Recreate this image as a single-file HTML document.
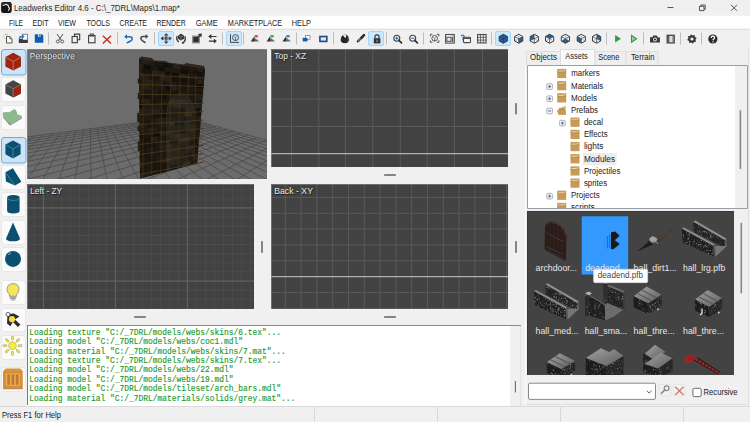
<!DOCTYPE html>
<html><head><meta charset="utf-8"><style>
html,body{margin:0;padding:0;width:750px;height:422px;overflow:hidden;background:#f0f0f0;font-family:"Liberation Sans",sans-serif}
text{white-space:pre}
</style></head><body>
<svg width="750" height="422" viewBox="0 0 750 422" style="display:block"><rect x="0" y="0" width="750" height="422" fill="#f0f0f0" />
<rect x="0" y="0" width="750" height="15" fill="#f0f0f0" />
<rect x="1.1" y="2.1" width="10.6" height="10.8" rx="2.2" fill="#161616"/><rect x="1.6" y="2.5" width="9.6" height="3" rx="1.5" fill="#2a2a2a"/><path d="M3 5.3L4.6 5L6 4.3L7.5 5L8.5 6L8.7 7.5L9.5 8L9.1 9.3L8.5 10.3" fill="none" stroke="#e6e6e6" stroke-width="1.1" stroke-linejoin="round" stroke-linecap="round"/>
<text x="13.90" y="11.30" font-family="Liberation Sans" font-size="9.2" fill="#2a2a2a" textLength="166.00" lengthAdjust="spacingAndGlyphs" >Leadwerks Editor 4.6 - C:\_7DRL\Maps\1.map*</text>
<path d="M667.5 7.5H673.5" stroke="#444" stroke-width="0.9"/>
<path d="M699.5 6.3h4.5v4.3h-4.5z M700.8 6.3v-1.3h4.4v4.3h-1.2" fill="none" stroke="#444" stroke-width="0.9"/>
<path d="M731 4.8L737 10.8M737 4.8L731 10.8" stroke="#444" stroke-width="0.9"/>
<rect x="0" y="15.7" width="750" height="13.1" fill="#ffffff" />
<text x="9.00" y="25.60" font-family="Liberation Sans" font-size="9.5" fill="#1a1a1a" textLength="14.00" lengthAdjust="spacingAndGlyphs" >FILE</text>
<text x="32.60" y="25.60" font-family="Liberation Sans" font-size="9.5" fill="#1a1a1a" textLength="16.00" lengthAdjust="spacingAndGlyphs" >EDIT</text>
<text x="58.00" y="25.60" font-family="Liberation Sans" font-size="9.5" fill="#1a1a1a" textLength="18.00" lengthAdjust="spacingAndGlyphs" >VIEW</text>
<text x="86.40" y="25.60" font-family="Liberation Sans" font-size="9.5" fill="#1a1a1a" textLength="23.40" lengthAdjust="spacingAndGlyphs" >TOOLS</text>
<text x="119.40" y="25.60" font-family="Liberation Sans" font-size="9.5" fill="#1a1a1a" textLength="27.60" lengthAdjust="spacingAndGlyphs" >CREATE</text>
<text x="156.40" y="25.60" font-family="Liberation Sans" font-size="9.5" fill="#1a1a1a" textLength="29.40" lengthAdjust="spacingAndGlyphs" >RENDER</text>
<text x="195.80" y="25.60" font-family="Liberation Sans" font-size="9.5" fill="#1a1a1a" textLength="22.00" lengthAdjust="spacingAndGlyphs" >GAME</text>
<text x="227.80" y="25.60" font-family="Liberation Sans" font-size="9.5" fill="#1a1a1a" textLength="54.40" lengthAdjust="spacingAndGlyphs" >MARKETPLACE</text>
<text x="291.80" y="25.60" font-family="Liberation Sans" font-size="9.5" fill="#1a1a1a" textLength="19.20" lengthAdjust="spacingAndGlyphs" >HELP</text>
<rect x="0" y="29" width="750" height="20" fill="#f0f0f0" />
<rect x="0" y="28.8" width="750" height="1" fill="#dcdcdc" />
<path d="M48.5 32.5V44.5" stroke="#bdbdbd" stroke-width="1"/>
<path d="M117.5 32.5V44.5" stroke="#bdbdbd" stroke-width="1"/>
<path d="M154.5 32.5V44.5" stroke="#bdbdbd" stroke-width="1"/>
<path d="M222.5 32.5V44.5" stroke="#bdbdbd" stroke-width="1"/>
<path d="M243.5 32.5V44.5" stroke="#bdbdbd" stroke-width="1"/>
<path d="M296.5 32.5V44.5" stroke="#bdbdbd" stroke-width="1"/>
<path d="M333.5 32.5V44.5" stroke="#bdbdbd" stroke-width="1"/>
<path d="M386.5 32.5V44.5" stroke="#bdbdbd" stroke-width="1"/>
<path d="M423.5 32.5V44.5" stroke="#bdbdbd" stroke-width="1"/>
<path d="M491.5 32.5V44.5" stroke="#bdbdbd" stroke-width="1"/>
<path d="M606.5 32.5V44.5" stroke="#bdbdbd" stroke-width="1"/>
<path d="M643.5 32.5V44.5" stroke="#bdbdbd" stroke-width="1"/>
<path d="M680.5 32.5V44.5" stroke="#bdbdbd" stroke-width="1"/>
<path d="M701.5 32.5V44.5" stroke="#bdbdbd" stroke-width="1"/>
<rect x="158.5" y="31.5" width="15" height="14" fill="#cce8ff" stroke="#a6d5fb" stroke-width="1" rx="1.5" />
<rect x="226.5" y="31.5" width="15" height="14" fill="#cce8ff" stroke="#a6d5fb" stroke-width="1" rx="1.5" />
<rect x="368.5" y="31.5" width="15" height="14" fill="#cce8ff" stroke="#a6d5fb" stroke-width="1" rx="1.5" />
<rect x="495.5" y="31.5" width="15" height="14" fill="#cce8ff" stroke="#a6d5fb" stroke-width="1" rx="1.5" />
<g transform="translate(3,33) scale(1.0)"><path d="M3.5 3.5h3.2l2.3 2.3v4.2h-5.5z" fill="#fff" stroke="#555" stroke-width="1"/><path d="M6.7 3.5v2.3h2.3" fill="none" stroke="#555" stroke-width="0.8"/><circle cx="2.6" cy="1.4" r="0.7" fill="#e8a33a"/><circle cx="0.8" cy="3" r="0.6" fill="#e8a33a"/><circle cx="4.4" cy="1" r="0.6" fill="#e8a33a"/><circle cx="1.4" cy="5" r="0.6" fill="#e8a33a"/><circle cx="3.8" cy="2.6" r="0.5" fill="#f0c060"/></g>
<g transform="translate(18,33.5) scale(1.0)"><rect x="4.5" y="0.7" width="5" height="8" fill="#fff" stroke="#666" stroke-width="0.8"/><path d="M0.8 5.2h3l1 1h4.9v3.3H0.8z" fill="#3a3a3a"/><path d="M0.8 5.5v-1.5l1.2-1.5 2-0.3v-1.6l2.6 2.4-2.6 2.4v-1.5l-1.6 0.3z" fill="#2878c8"/></g>
<g transform="translate(34.5,34) scale(1.0)"><path d="M0.3 0.3h7.2l1.3 1.3v7.2H0.3z" fill="#0f5cad"/><rect x="3.4" y="0.3" width="2.6" height="2.4" fill="#f0f0f0"/><rect x="4.4" y="0.7" width="1" height="1.5" fill="#0f5cad"/></g>
<g transform="translate(55.5,33.5) scale(1.0)"><path d="M1.5 0.5L6 7M7.5 0.5L3 7" stroke="#555" stroke-width="1"/><circle cx="2.3" cy="8" r="1.5" fill="none" stroke="#555" stroke-width="0.9"/><circle cx="6.7" cy="8" r="1.5" fill="none" stroke="#555" stroke-width="0.9"/></g>
<g transform="translate(71.5,33.5) scale(1.0)"><path d="M3 2.8V0.6h5.2v5.6H6" fill="none" stroke="#3c3c3c" stroke-width="1.1"/><rect x="0.6" y="3" width="5.2" height="6.2" fill="none" stroke="#3c3c3c" stroke-width="1.1"/></g>
<g transform="translate(88,33.5) scale(1.0)"><rect x="0.6" y="2" width="6.4" height="7.3" fill="none" stroke="#3c3c3c" stroke-width="1.1"/><rect x="2.3" y="0.5" width="3" height="2" fill="none" stroke="#3c3c3c" stroke-width="1"/></g>
<g transform="translate(102,35) scale(1.0)"><path d="M0.8 0.8L9 8.4M9 0.8L0.8 8.4" stroke="#c42b1c" stroke-width="1.35"/></g>
<g transform="translate(124,33.5) scale(1.0)"><path d="M1.5 3.2H5.5Q8.2 3.2 8.2 5.6Q8.2 7.3 3.2 9.2" fill="none" stroke="#1a6bc0" stroke-width="1.5" stroke-linecap="round"/><path d="M0.2 3.2L3 0.8V5.6z" fill="#1a6bc0"/></g>
<g transform="translate(140,33.5) scale(1.0)"><path d="M6.8 3.0H3.2Q0.6 3.2 0.8 5.2Q1.4 7 5 9" fill="none" stroke="#4a4a4a" stroke-width="1.5" stroke-linecap="round"/><path d="M8.4 3L5.6 0.6V5.4z" fill="#4a4a4a"/></g>
<g transform="translate(160.5,33) scale(1.0)"><path d="M5.1 2.5V8.3M6.3 2.5V8.3M2.5 4.8H8.9M2.5 6H8.9" stroke="#3a3a3a" stroke-width="0.7"/><path d="M5.7 0.2L8 2.6H3.4z M5.7 10.8L8 8.4H3.4z M0.2 5.4L2.6 3.2V7.6z M11.2 5.4L8.8 3.2V7.6z" fill="#333"/></g>
<g transform="translate(176,33) scale(1.0)"><path d="M5 0.8L8 2.4V5.8L5 7.4L2 5.8V2.4z" fill="#333"/><path d="M5 4.1L8 2.4M5 4.1L2 2.4M5 4.1V7.4" stroke="#bbb" stroke-width="0.5"/><path d="M1.2 3Q-0.2 6.5 2.8 9" fill="none" stroke="#3a3a3a" stroke-width="1.4"/><path d="M8.8 3.2Q10.4 7 7.2 9.6" fill="none" stroke="#3a3a3a" stroke-width="1.4"/><path d="M6.2 8.4L8.4 10.6L5.8 10.8z" fill="#333"/></g>
<g transform="translate(191.7,33.5) scale(1.0)"><rect x="1" y="2.7" width="6.6" height="6.6" fill="#2e2e2e" stroke="#8c8c8c" stroke-width="1.3"/><path d="M4.6 5.2L8.6 1.4" stroke="#333" stroke-width="1.3"/><path d="M10.2 0.1L6.2 0.6L9.7 4.1z" fill="#333"/></g>
<g transform="translate(208.3,34.3) scale(1.0)"><path d="M2 2.2H8.2M6.6 6.8H0.6" stroke="#333" stroke-width="1.2"/><path d="M0 2.2L3 -0.2V4.6z M8.6 6.8L5.6 4.4V9.2z" fill="#333"/></g>
<g transform="translate(229.5,33.8) scale(1.0)"><path d="M1 0.5V8.6H9.5" fill="none" stroke="#444" stroke-width="1"/><circle cx="6" cy="3.8" r="3" fill="none" stroke="#444" stroke-width="0.9"/><path d="M6 4V7M4.8 2.8Q6 4.5 7.2 2.8" fill="none" stroke="#444" stroke-width="0.7"/></g>
<g transform="translate(250.2,35) scale(1.0)"><path d="M0.5 6.5L4 1.5L5 6.5z" fill="#333"/><path d="M4 2.5L9 6.5H5z" fill="#666"/><path d="M5 3.6L8.5 5.5" stroke="#999" stroke-width="0.5"/><path d="M4.4 0.3h3.6l-0.6 1 0.8 1h-3.8z" fill="#d8372a"/></g>
<g transform="translate(266,35) scale(1.0)"><path d="M0.5 6.5L4 1.5L5 6.5z" fill="#333"/><path d="M4 2.5L9 6.5H5z" fill="#666"/><path d="M5 3.6L8.5 5.5" stroke="#999" stroke-width="0.5"/><path d="M4.4 0.3h3.6l-0.6 1 0.8 1h-3.8z" fill="#2f9a3a"/></g>
<g transform="translate(281.9,35) scale(1.0)"><path d="M0.5 6.5L4 1.5L5 6.5z" fill="#333"/><path d="M4 2.5L9 6.5H5z" fill="#666"/><path d="M5 3.6L8.5 5.5" stroke="#999" stroke-width="0.5"/><path d="M4.4 0.3h3.6l-0.6 1 0.8 1h-3.8z" fill="#2a6fc0"/></g>
<g transform="translate(302.5,35) scale(1.0)"><rect x="3" y="0.5" width="4.5" height="3.8" fill="#fff" stroke="#888" stroke-width="0.8"/><rect x="0.2" y="2.8" width="4.8" height="3.6" fill="#1a5aa0"/></g>
<g transform="translate(319,35.6) scale(1.0)"><rect x="0.9" y="0.9" width="6.9" height="4.9" fill="#dfe8f0" stroke="#1d4c7e" stroke-width="1.6"/></g>
<g transform="translate(340,33.7) scale(1.0)"><path d="M2.8 1.2Q5.5 0 7.2 1.6Q9.4 3.5 9 6.2Q8.4 9.4 4.8 9.5Q1.2 9.4 0.6 6.2Q0.4 3.2 2.8 1.2z" fill="#262626"/><path d="M2.6 1.6Q4.6 2.6 5 4.6L6.4 2.6L5.6 0.8Q4 0.4 2.6 1.6z" fill="#f4f4f4"/><path d="M7.6 4Q8.6 6 7.8 8.2" stroke="#666" stroke-width="0.6" fill="none"/></g>
<g transform="translate(356.8,34.4) scale(1.0)"><path d="M1 7L5.2 2.8" stroke="#3a3a3a" stroke-width="2.2" stroke-linecap="round"/><path d="M1.6 6.4L4.8 3.2" stroke="#c8c8c8" stroke-width="0.7"/><path d="M4.6 3.4L7.2 0.8" stroke="#2a2a2a" stroke-width="2.6" stroke-linecap="round"/></g>
<g transform="translate(373.5,34.2) scale(1.0)"><path d="M1.5 4.2V2.6Q1.5 0.6 3.5 0.6Q5.5 0.6 5.5 2.6V4.2" fill="none" stroke="#333" stroke-width="1.2"/><rect x="0.3" y="4" width="6.6" height="5.2" fill="#333"/><rect x="2.9" y="5.6" width="1.4" height="2.4" fill="#8a8a8a"/></g>
<g transform="translate(393.2,34.6) scale(1.0)"><circle cx="3.6" cy="3.6" r="3" fill="#f4f4f4" stroke="#444" stroke-width="1.1"/><path d="M5.7 5.7L8.3 8.3" stroke="#333" stroke-width="1.8" stroke-linecap="round"/><path d="M2 3.6H5.2M3.6 2V5.2" stroke="#1a6bc0" stroke-width="1.1"/></g>
<g transform="translate(409.1,34.6) scale(1.0)"><circle cx="3.6" cy="3.6" r="3" fill="#f4f4f4" stroke="#444" stroke-width="1.1"/><path d="M5.7 5.7L8.3 8.3" stroke="#333" stroke-width="1.8" stroke-linecap="round"/><path d="M2 3.6H5.2" stroke="#1a6bc0" stroke-width="1.1"/></g>
<g transform="translate(429.9,33.8) scale(1.0)"><path d="M0.5 2.5V0.5H2.5M7 0.5H9V2.5M9 6.5V8.5H7M2.5 8.5H0.5V6.5" fill="none" stroke="#444" stroke-width="0.9"/><circle cx="4.75" cy="4.5" r="2.8" fill="none" stroke="#444" stroke-width="0.9"/><path d="M4.75 4.8V7.3M3.6 3.6Q4.75 5.4 5.9 3.6" fill="none" stroke="#444" stroke-width="0.7"/></g>
<g transform="translate(445,33.9) scale(1.0)"><rect x="0.6" y="0.6" width="8.7" height="8.6" fill="#efefef" stroke="#505050" stroke-width="1.1"/><rect x="1.8" y="3.4" width="4.2" height="4" fill="none" stroke="#555" stroke-width="1"/><rect x="6.8" y="1.6" width="1.5" height="6.6" fill="#606060"/><rect x="7" y="1.8" width="1" height="1" fill="#fff"/></g>
<g transform="translate(460.5,34.6) scale(1.0)"><rect x="3" y="2.6" width="7" height="5.4" rx="0.8" fill="#f4f4f4" stroke="#4a4a4a" stroke-width="1.1"/><path d="M3 3.8H10" stroke="#4a4a4a" stroke-width="1.2"/><path d="M0.5 1.6Q1 0.3 2.4 0.4Q3.9 0.6 3.5 2Q3 2.8 2.2 3.4V4" fill="none" stroke="#1a6bc0" stroke-width="1.1"/><circle cx="2.2" cy="5.2" r="0.6" fill="#1a6bc0"/></g>
<g transform="translate(477,33.9) scale(1.0)"><rect x="0.6" y="0.6" width="8.5" height="8.4" fill="#f4f4f4" stroke="#474747" stroke-width="1.1"/><path d="M3.45 0.6V9M6.3 0.6V9M0.6 3.4H9.1M0.6 6.2H9.1" stroke="#474747" stroke-width="0.8"/></g>
<g transform="translate(498.8,34) scale(1.0)"><polygon points="4.50,0.30 8.60,2.50 8.60,7.00 4.50,9.20 0.40,7.00 0.40,2.50" fill="#fafafa"/><polygon points="4.50,0.30 8.60,2.50 4.50,4.75 0.40,2.50" fill="#1565b5"/><polygon points="8.60,2.50 8.60,7.00 4.50,9.20 4.50,4.75" fill="#1565b5"/><polygon points="0.40,2.50 4.50,4.75 4.50,9.20 0.40,7.00" fill="#1565b5"/><polygon points="4.50,0.30 8.60,2.50 8.60,7.00 4.50,9.20 0.40,7.00 0.40,2.50" fill="none" stroke="#3a3a3a" stroke-width="1"/><path d="M4.5 4.75L8.6 2.5M4.5 4.75L0.4 2.5M4.5 4.75V9.2" stroke="#333" stroke-width="0.9"/><path d="M4.5 4.75L8.6 7.0M4.5 4.75L0.4 7.0M4.5 4.75V0.3" stroke="#333" stroke-width="0.7" stroke-dasharray="1 0.8"/></g>
<g transform="translate(514.2,34) scale(1.0)"><polygon points="4.50,0.30 8.60,2.50 8.60,7.00 4.50,9.20 0.40,7.00 0.40,2.50" fill="#fafafa"/><polygon points="8.60,2.50 8.60,7.00 4.50,9.20 4.50,4.75" fill="#1565b5"/><polygon points="4.50,0.30 8.60,2.50 8.60,7.00 4.50,9.20 0.40,7.00 0.40,2.50" fill="none" stroke="#3a3a3a" stroke-width="1"/><path d="M4.5 4.75L8.6 2.5M4.5 4.75L0.4 2.5M4.5 4.75V9.2" stroke="#555" stroke-width="0.9"/><path d="M4.5 4.75L8.6 7.0M4.5 4.75L0.4 7.0M4.5 4.75V0.3" stroke="#555" stroke-width="0.7" stroke-dasharray="1 0.8"/></g>
<g transform="translate(529.8,34) scale(1.0)"><polygon points="4.50,0.30 8.60,2.50 8.60,7.00 4.50,9.20 0.40,7.00 0.40,2.50" fill="#fafafa"/><polygon points="4.50,0.30 0.40,2.50 0.40,7.00 4.50,4.75" fill="#1565b5"/><polygon points="4.50,0.30 8.60,2.50 8.60,7.00 4.50,9.20 0.40,7.00 0.40,2.50" fill="none" stroke="#3a3a3a" stroke-width="1"/><path d="M4.5 4.75L8.6 2.5M4.5 4.75L0.4 2.5M4.5 4.75V9.2" stroke="#555" stroke-width="0.9"/><path d="M4.5 4.75L8.6 7.0M4.5 4.75L0.4 7.0M4.5 4.75V0.3" stroke="#555" stroke-width="0.7" stroke-dasharray="1 0.8"/></g>
<g transform="translate(545.1,34) scale(1.0)"><polygon points="4.50,0.30 8.60,2.50 8.60,7.00 4.50,9.20 0.40,7.00 0.40,2.50" fill="#fafafa"/><polygon points="4.50,0.30 8.60,2.50 4.50,4.75 0.40,2.50" fill="#1565b5"/><polygon points="4.50,0.30 8.60,2.50 8.60,7.00 4.50,9.20 0.40,7.00 0.40,2.50" fill="none" stroke="#3a3a3a" stroke-width="1"/><path d="M4.5 4.75L8.6 2.5M4.5 4.75L0.4 2.5M4.5 4.75V9.2" stroke="#555" stroke-width="0.9"/><path d="M4.5 4.75L8.6 7.0M4.5 4.75L0.4 7.0M4.5 4.75V0.3" stroke="#555" stroke-width="0.7" stroke-dasharray="1 0.8"/></g>
<g transform="translate(560.9,34) scale(1.0)"><polygon points="4.50,0.30 8.60,2.50 8.60,7.00 4.50,9.20 0.40,7.00 0.40,2.50" fill="#fafafa"/><polygon points="0.40,7.00 4.50,4.75 8.60,7.00 4.50,9.20" fill="#1565b5"/><polygon points="4.50,0.30 8.60,2.50 8.60,7.00 4.50,9.20 0.40,7.00 0.40,2.50" fill="none" stroke="#3a3a3a" stroke-width="1"/><path d="M4.5 4.75L8.6 2.5M4.5 4.75L0.4 2.5M4.5 4.75V9.2" stroke="#555" stroke-width="0.9"/><path d="M4.5 4.75L8.6 7.0M4.5 4.75L0.4 7.0M4.5 4.75V0.3" stroke="#555" stroke-width="0.7" stroke-dasharray="1 0.8"/></g>
<g transform="translate(576.8,34) scale(1.0)"><polygon points="4.50,0.30 8.60,2.50 8.60,7.00 4.50,9.20 0.40,7.00 0.40,2.50" fill="#fafafa"/><polygon points="0.40,2.50 4.50,4.75 4.50,9.20 0.40,7.00" fill="#1565b5"/><polygon points="4.50,0.30 8.60,2.50 8.60,7.00 4.50,9.20 0.40,7.00 0.40,2.50" fill="none" stroke="#3a3a3a" stroke-width="1"/><path d="M4.5 4.75L8.6 2.5M4.5 4.75L0.4 2.5M4.5 4.75V9.2" stroke="#555" stroke-width="0.9"/><path d="M4.5 4.75L8.6 7.0M4.5 4.75L0.4 7.0M4.5 4.75V0.3" stroke="#555" stroke-width="0.7" stroke-dasharray="1 0.8"/></g>
<g transform="translate(592.1,34) scale(1.0)"><polygon points="4.50,0.30 8.60,2.50 8.60,7.00 4.50,9.20 0.40,7.00 0.40,2.50" fill="#fafafa"/><polygon points="4.50,0.30 8.60,2.50 8.60,7.00 4.50,4.75" fill="#1565b5"/><polygon points="4.50,0.30 8.60,2.50 8.60,7.00 4.50,9.20 0.40,7.00 0.40,2.50" fill="none" stroke="#3a3a3a" stroke-width="1"/><path d="M4.5 4.75L8.6 2.5M4.5 4.75L0.4 2.5M4.5 4.75V9.2" stroke="#555" stroke-width="0.9"/><path d="M4.5 4.75L8.6 7.0M4.5 4.75L0.4 7.0M4.5 4.75V0.3" stroke="#555" stroke-width="0.7" stroke-dasharray="1 0.8"/></g>
<g transform="translate(614.8,34.6) scale(1.0)"><path d="M0.3 0.3L6.2 4.15L0.3 8z" fill="#2e9e3e"/></g>
<g transform="translate(630.8,34.6) scale(1.0)"><path d="M0.8 0.9L5.6 4.15L0.8 7.4z" fill="none" stroke="#2e9e3e" stroke-width="1.3"/><path d="M2 3L3.5 4.15L2 5.3z" fill="#2e9e3e"/></g>
<g transform="translate(649.8,35.2) scale(1.0)"><path d="M0.2 2h2.3l1-1.6h3.4l1 1.6h2.2v5.2H0.2z" fill="#383838"/><circle cx="5.2" cy="4.3" r="1.9" fill="#f0f0f0"/><circle cx="5.2" cy="4.3" r="1.1" fill="#383838"/><rect x="8.3" y="1.2" width="1.3" height="1" fill="#f0f0f0"/></g>
<g transform="translate(666.5,34.6) scale(1.0)"><rect x="0.7" y="0.7" width="7" height="7.6" fill="#ddd" stroke="#444" stroke-width="1.3"/><rect x="1.4" y="1.4" width="1.4" height="6.2" fill="#555"/><rect x="6" y="1.4" width="1.2" height="6.2" fill="#777"/></g>
<g transform="translate(687,34.6) scale(1.0)"><polygon points="9.76,3.44 8.48,5.10 9.02,7.12 6.95,7.39 5.91,9.21 4.25,7.93 2.23,8.47 1.96,6.40 0.14,5.36 1.42,3.70 0.88,1.68 2.95,1.41 3.99,-0.41 5.65,0.87 7.67,0.33 7.94,2.40" fill="#383838"/><circle cx="4.95" cy="4.4" r="1.6" fill="#f0f0f0"/></g>
<g transform="translate(708,34.6) scale(1.0)"><circle cx="4.85" cy="4.4" r="4.6" fill="#2a2a2a"/><path d="M3.1 3.3Q3.1 1.6 4.9 1.6Q6.7 1.7 6.6 3.2Q6.5 4.2 5.2 4.8L5 5.8" fill="none" stroke="#fff" stroke-width="1.2"/><circle cx="5" cy="7.3" r="0.7" fill="#fff"/></g>
<rect x="1.5" y="49.5" width="24.5" height="25.5" rx="2.5" fill="#cce4f7" stroke="#72a6d8" stroke-width="1"/>
<rect x="1.5" y="77.5" width="24" height="24" rx="2.5" fill="#fbfbfb" stroke="#e8e8e8" stroke-width="1"/>
<rect x="1.5" y="105.5" width="24" height="24" rx="2.5" fill="#fbfbfb" stroke="#e8e8e8" stroke-width="1"/>
<rect x="1.5" y="137.5" width="24.5" height="25.5" rx="2.5" fill="#cce4f7" stroke="#72a6d8" stroke-width="1"/>
<rect x="1.5" y="165.5" width="24" height="24" rx="2.5" fill="#fbfbfb" stroke="#e8e8e8" stroke-width="1"/>
<rect x="1.5" y="192.5" width="24" height="24" rx="2.5" fill="#fbfbfb" stroke="#e8e8e8" stroke-width="1"/>
<rect x="1.5" y="220.5" width="24" height="24" rx="2.5" fill="#fbfbfb" stroke="#e8e8e8" stroke-width="1"/>
<rect x="1.5" y="247.5" width="24" height="24" rx="2.5" fill="#fbfbfb" stroke="#e8e8e8" stroke-width="1"/>
<rect x="1.5" y="280.5" width="24" height="24" rx="2.5" fill="#fbfbfb" stroke="#e8e8e8" stroke-width="1"/>
<rect x="1.5" y="308.5" width="24" height="23" rx="2.5" fill="#fbfbfb" stroke="#e8e8e8" stroke-width="1"/>
<rect x="1.5" y="335.5" width="24" height="24" rx="2.5" fill="#fbfbfb" stroke="#e8e8e8" stroke-width="1"/>
<rect x="1.5" y="367.5" width="24" height="24" rx="2.5" fill="#fbfbfb" stroke="#e8e8e8" stroke-width="1"/>
<g transform="translate(5.4,52.8) scale(1.0)"><path d="M7.8 0L15.6 4.3V13.6L7.8 17.8L0 13.6V4.3z" fill="#9e2410"/><path d="M0.3 4.5L7.8 8.7L15.3 4.5M7.8 8.7V17.6" fill="none" stroke="#e0a090" stroke-width="0.6"/></g>
<g transform="translate(5.4,80.3) scale(1.0)"><path d="M7.8 0L15.6 4.1V13.1L7.8 17.3L0 13.1V4.1z" fill="#444"/><path d="M7.8 8.4L15.6 4.1V13.1L7.8 17.3z" fill="#9e2410"/><path d="M0.3 4.3L7.8 8.4L15.3 4.3M7.8 8.4V17" fill="none" stroke="#aaa" stroke-width="0.5"/></g>
<path d="M2.8 113.5L3.1 117.6L10 125.6L21.7 118.4L21.9 116.2z" fill="#737f73"/>
<path d="M2.8 112.6Q5 111.8 9.2 112.3Q12.5 110 14.2 108.9Q15.8 109.4 16.3 110.8L17.3 114.2L21.9 116L21.6 117.2L10.6 124L3 116.2z" fill="#8cb98c"/>
<path d="M3 116.2L10.6 124L21.6 117.2" fill="none" stroke="#c8dcc8" stroke-width="0.5"/>
<g transform="translate(5.4,140.4) scale(1.0)"><path d="M7.6 0L15.2 4.2V13.9L7.6 18.1L0 13.9V4.2z" fill="#0b5070"/><path d="M0.3 4.4L7.6 8.6L14.9 4.4M7.6 8.6V17.8" fill="none" stroke="#6fa3bd" stroke-width="0.6"/></g>
<g transform="translate(5.4,168.3) scale(1.0)"><path d="M7.5 0L16 13.5L9.6 17.3L0.5 13.2L0 4z" fill="#0b5070"/><path d="M0.3 4.3L9.6 17" stroke="#6fa3bd" stroke-width="0.6"/></g>
<g transform="translate(7.1,195) scale(1.0)"><path d="M0 2.7Q0 0 6.25 0Q12.5 0 12.5 2.7V15.8Q12.5 18.5 6.25 18.5Q0 18.5 0 15.8z" fill="#0b5070"/><path d="M0.3 2.9Q0.6 5.4 6.25 5.4Q11.9 5.4 12.2 2.9" fill="none" stroke="#6fa3bd" stroke-width="0.6"/></g>
<g transform="translate(6,222.4) scale(1.0)"><path d="M7 0L14 16Q14 18.8 7 18.8Q0 18.8 0 16z" fill="#0b5070"/></g>
<g transform="translate(5,250.7) scale(1.0)"><circle cx="8" cy="8.2" r="8" fill="#0b5070"/><path d="M3.2 4.4Q4.2 2.8 6 2.2" stroke="#9cc2d6" stroke-width="0.9" fill="none"/></g>
<g transform="translate(6.4,283) scale(1.0)"><path d="M6.6 0.6Q12.6 0.8 12.6 6.5Q12.4 9.2 10.2 11.3V13.2H3V11.3Q0.6 9.2 0.6 6.5Q0.8 0.8 6.6 0.6z" fill="#f5e55a" stroke="#8a8a6a" stroke-width="0.8"/><rect x="3.3" y="13.5" width="6.6" height="1.3" fill="#999"/><rect x="3.8" y="15" width="5.6" height="1.3" fill="#999"/><path d="M5 17h3.2" stroke="#999" stroke-width="1"/></g>
<g transform="translate(5.4,312) scale(1.0)"><path d="M3 2L8.5 1.5L14 4.5L9.5 7.5L15 12.5L12.5 15L7.5 10L5 14.2L1.6 11.5L2 4z" fill="#2d2d2d"/><circle cx="2.6" cy="2.4" r="2" fill="#fff" stroke="#444" stroke-width="0.8"/><circle cx="6.6" cy="7.2" r="3.1" fill="#f0e040"/></g>
<g transform="translate(2.6,336) scale(1.0)"><path d="M9.90 3.30L9.90 0.90" stroke="#a8a040" stroke-width="2.3" stroke-linecap="round"/><path d="M9.90 3.30L9.90 0.90" stroke="#ece060" stroke-width="1.3" stroke-linecap="round"/><path d="M14.43 5.17L16.12 3.48" stroke="#a8a040" stroke-width="2.3" stroke-linecap="round"/><path d="M14.43 5.17L16.12 3.48" stroke="#ece060" stroke-width="1.3" stroke-linecap="round"/><path d="M16.30 9.70L18.70 9.70" stroke="#a8a040" stroke-width="2.3" stroke-linecap="round"/><path d="M16.30 9.70L18.70 9.70" stroke="#ece060" stroke-width="1.3" stroke-linecap="round"/><path d="M14.43 14.23L16.12 15.92" stroke="#a8a040" stroke-width="2.3" stroke-linecap="round"/><path d="M14.43 14.23L16.12 15.92" stroke="#ece060" stroke-width="1.3" stroke-linecap="round"/><path d="M9.90 16.10L9.90 18.50" stroke="#a8a040" stroke-width="2.3" stroke-linecap="round"/><path d="M9.90 16.10L9.90 18.50" stroke="#ece060" stroke-width="1.3" stroke-linecap="round"/><path d="M5.37 14.23L3.68 15.92" stroke="#a8a040" stroke-width="2.3" stroke-linecap="round"/><path d="M5.37 14.23L3.68 15.92" stroke="#ece060" stroke-width="1.3" stroke-linecap="round"/><path d="M3.50 9.70L1.10 9.70" stroke="#a8a040" stroke-width="2.3" stroke-linecap="round"/><path d="M3.50 9.70L1.10 9.70" stroke="#ece060" stroke-width="1.3" stroke-linecap="round"/><path d="M5.37 5.17L3.68 3.48" stroke="#a8a040" stroke-width="2.3" stroke-linecap="round"/><path d="M5.37 5.17L3.68 3.48" stroke="#ece060" stroke-width="1.3" stroke-linecap="round"/><circle cx="9.9" cy="9.7" r="3.9" fill="#f6ea4a" stroke="#b8b040" stroke-width="0.6"/></g>
<g transform="translate(3,368.5) scale(1.0)"><path d="M2.5 0H17.3L19.8 2.8V20.3H0V2.8z" fill="#d8943c"/><rect x="2" y="3.8" width="15.8" height="14.5" fill="#e8a850" stroke="#b87828" stroke-width="0.6"/><rect x="4.3" y="5.8" width="2.6" height="10.5" fill="#c07a30"/><rect x="8.6" y="5.8" width="2.6" height="10.5" fill="#c07a30"/><rect x="12.9" y="5.8" width="2.6" height="10.5" fill="#c07a30"/><path d="M0 20.3H19.8" stroke="#b07030" stroke-width="0.8"/></g>
<clipPath id="cp"><rect x="27" y="49" width="240" height="130"/></clipPath>
<g clip-path="url(#cp)">
<rect x="27" y="49" width="240" height="130" fill="#6c6c6c"/>
<path d="M181.80 117.00L3150.00 925.33M181.80 117.00L-6097.33 925.33M178.64 117.41L2997.47 925.33M184.64 117.77L-5811.33 925.33M175.38 117.83L2844.93 925.33M187.66 118.60L-5525.33 925.33M172.01 118.26L2692.40 925.33M190.88 119.47L-5239.33 925.33M168.52 118.71L2539.87 925.33M194.32 120.41L-4953.33 925.33M164.91 119.17L2387.33 925.33M198.00 121.41L-4667.33 925.33M161.18 119.65L2234.80 925.33M201.95 122.49L-4381.33 925.33M157.31 120.15L2082.27 925.33M206.20 123.65L-4095.33 925.33M153.29 120.67L1929.73 925.33M210.79 124.89L-3809.33 925.33M149.13 121.21L1777.20 925.33M215.75 126.25L-3523.33 925.33M144.81 121.76L1624.67 925.33M221.14 127.71L-3237.33 925.33M140.32 122.34L1472.13 925.33M227.01 129.31L-2951.33 925.33M135.65 122.94L1319.60 925.33M233.44 131.06L-2665.33 925.33M130.80 123.57L1167.07 925.33M240.49 132.98L-2379.33 925.33M125.74 124.22L1014.53 925.33M248.28 135.10L-2093.33 925.33M120.47 124.89L862.00 925.33M256.91 137.45L-1807.33 925.33M114.98 125.60L709.47 925.33M266.54 140.08L-1521.33 925.33M109.24 126.34L556.93 925.33M277.35 143.02L-1235.33 925.33M103.25 127.11L404.40 925.33M289.57 146.35L-949.33 925.33M96.98 127.92L251.87 925.33M303.49 150.14L-663.33 925.33M90.41 128.76L99.33 925.33M319.50 154.50L-377.33 925.33M83.53 129.65L-53.20 925.33M338.11 159.57L-91.33 925.33M76.31 130.58L-205.73 925.33M360.00 165.53L194.67 925.33M68.72 131.56L-358.27 925.33M386.13 172.65L480.67 925.33M60.74 132.58L-510.80 925.33M417.86 181.29L766.67 925.33M52.33 133.67L-663.33 925.33M457.20 192.00L1052.67 925.33M43.47 134.81L-815.87 925.33M507.27 205.64L1338.67 925.33M34.10 136.01L-968.40 925.33M573.16 223.58L1624.67 925.33M24.19 137.29L-1120.93 925.33M663.75 248.25L1910.67 925.33M13.69 138.64L-1273.47 925.33M796.15 284.31L2196.67 925.33M2.54 140.08L-1426.00 925.33M1008.00 342.00L2482.67 925.33M-9.32 141.60L-1578.53 925.33M1401.43 449.14L2768.67 925.33M-21.95 143.23L-1731.07 925.33M2385.00 717.00L3054.67 925.33M-35.44 144.97L-1883.60 925.33M-49.88 146.82L-2036.13 925.33M-65.36 148.82L-2188.67 925.33M-82.02 150.96L-2341.20 925.33M-99.98 153.27L-2493.73 925.33M-119.41 155.78L-2646.27 925.33M-140.49 158.49L-2798.80 925.33M-163.44 161.44L-2951.33 925.33M-188.53 164.67L-3103.87 925.33M-216.07 168.22L-3256.40 925.33M-246.44 172.13L-3408.93 925.33M-280.08 176.46L-3561.47 925.33M-317.57 181.29L-3714.00 925.33M-359.61 186.70L-3866.53 925.33M-407.06 192.81L-4019.07 925.33M-461.07 199.76L-4171.60 925.33M-523.07 207.74L-4324.13 925.33M-595.00 217.00L-4476.67 925.33M-679.43 227.87L-4629.20 925.33M-779.95 240.81L-4781.73 925.33M-901.63 256.47L-4934.27 925.33M-1051.94 275.82L-5086.80 925.33M-1242.33 300.33L-5239.33 925.33M-1491.31 332.38L-5391.87 925.33M-1830.82 376.09L-5544.40 925.33M-2321.22 439.22L-5696.93 925.33M-3091.86 538.43L-5849.47 925.33M-4479.00 717.00L-6002.00 925.33" stroke="#4b4b4b" stroke-width="0.85" fill="none"/>
<polygon points="139,58.6 205,68.7 197,163.5 140,178.5" fill="#201b13"/>
<polygon points="139.0,58.6 143.0,59.2 143.1,64.2 139.0,63.6" fill="#201a11"/>
<polygon points="143.0,59.2 150.0,60.3 150.0,65.1 143.1,64.2" fill="#241e14"/>
<polygon points="150.0,60.3 155.2,61.1 155.1,65.8 150.0,65.1" fill="#201a11"/>
<polygon points="155.2,61.1 163.3,62.3 163.2,66.9 155.1,65.8" fill="#1a150e"/>
<polygon points="163.3,62.3 167.9,63.0 167.7,67.6 163.2,66.9" fill="#110e09"/>
<polygon points="167.9,63.0 172.8,63.8 172.6,68.2 167.7,67.6" fill="#17130c"/>
<polygon points="172.8,63.8 180.6,65.0 180.5,69.3 172.6,68.2" fill="#292116"/>
<polygon points="180.6,65.0 191.0,66.6 190.7,70.7 180.5,69.3" fill="#1a150e"/>
<polygon points="191.0,66.6 199.0,67.8 198.7,71.8 190.7,70.7" fill="#1e1910"/>
<polygon points="199.0,67.8 203.4,68.5 203.1,72.4 198.7,71.8" fill="#241e14"/>
<polygon points="203.4,68.5 205.0,68.7 204.7,72.7 203.1,72.4" fill="#17130c"/>
<polygon points="139.0,63.6 143.7,64.2 143.7,69.2 139.1,68.6" fill="#241e14"/>
<polygon points="143.7,64.2 151.0,65.2 151.0,70.1 143.7,69.2" fill="#110e09"/>
<polygon points="151.0,65.2 158.2,66.2 158.2,70.9 151.0,70.1" fill="#1e1910"/>
<polygon points="158.2,66.2 165.2,67.2 165.1,71.8 158.2,70.9" fill="#110e09"/>
<polygon points="165.2,67.2 171.8,68.1 171.6,72.6 165.1,71.8" fill="#1e1910"/>
<polygon points="171.8,68.1 180.4,69.3 180.2,73.6 171.6,72.6" fill="#1c170f"/>
<polygon points="180.4,69.3 189.3,70.5 189.0,74.7 180.2,73.6" fill="#110e09"/>
<polygon points="189.3,70.5 193.4,71.1 193.1,75.2 189.0,74.7" fill="#1e1910"/>
<polygon points="193.4,71.1 200.0,72.0 199.7,76.0 193.1,75.2" fill="#110e09"/>
<polygon points="200.0,72.0 204.7,72.7 204.3,76.6 199.7,76.0" fill="#17130c"/>
<polygon points="139.1,68.6 142.0,69.0 142.0,73.9 139.1,73.6" fill="#241e14"/>
<polygon points="142.0,69.0 152.0,70.2 151.9,75.0 142.0,73.9" fill="#17130c"/>
<polygon points="152.0,70.2 159.0,71.0 158.9,75.7 151.9,75.0" fill="#292116"/>
<polygon points="159.0,71.0 165.6,71.8 165.5,76.4 158.9,75.7" fill="#241e14"/>
<polygon points="165.6,71.8 174.6,73.0 174.4,77.4 165.5,76.4" fill="#110e09"/>
<polygon points="174.6,73.0 180.7,73.7 180.5,78.0 174.4,77.4" fill="#110e09"/>
<polygon points="180.7,73.7 186.8,74.4 186.6,78.7 180.5,78.0" fill="#292116"/>
<polygon points="186.8,74.4 195.7,75.5 195.4,79.6 186.6,78.7" fill="#1e1910"/>
<polygon points="195.7,75.5 200.5,76.1 200.1,80.1 195.4,79.6" fill="#1e1910"/>
<polygon points="200.5,76.1 204.3,76.6 204.0,80.5 200.1,80.1" fill="#201a11"/>
<polygon points="139.1,73.6 142.9,74.0 142.9,78.9 139.2,78.6" fill="#241e14"/>
<polygon points="142.9,74.0 149.6,74.7 149.6,79.5 142.9,78.9" fill="#241e14"/>
<polygon points="149.6,74.7 159.9,75.8 159.9,80.5 149.6,79.5" fill="#1a150e"/>
<polygon points="159.9,75.8 166.5,76.5 166.4,81.1 159.9,80.5" fill="#292116"/>
<polygon points="166.5,76.5 171.2,77.0 171.0,81.5 166.4,81.1" fill="#292116"/>
<polygon points="171.2,77.0 181.5,78.1 181.3,82.4 171.0,81.5" fill="#17130c"/>
<polygon points="181.5,78.1 187.2,78.7 186.9,83.0 181.3,82.4" fill="#110e09"/>
<polygon points="187.2,78.7 197.5,79.9 197.2,83.9 186.9,83.0" fill="#17130c"/>
<polygon points="197.5,79.9 202.8,80.4 202.5,84.4 197.2,83.9" fill="#292116"/>
<polygon points="202.8,80.4 204.0,80.5 203.7,84.5 202.5,84.4" fill="#1e1910"/>
<polygon points="139.2,78.6 137.8,78.5 137.9,83.5 139.2,83.6" fill="#201a11"/>
<polygon points="139.2,78.6 143.3,79.0 143.4,83.9 139.2,83.6" fill="#1c170f"/>
<polygon points="143.3,79.0 152.6,79.8 152.5,84.6 143.4,83.9" fill="#292116"/>
<polygon points="152.6,79.8 156.9,80.2 156.8,84.9 152.5,84.6" fill="#1e1910"/>
<polygon points="156.9,80.2 162.1,80.7 162.0,85.3 156.8,84.9" fill="#241e14"/>
<polygon points="162.1,80.7 166.1,81.1 166.0,85.6 162.0,85.3" fill="#1c170f"/>
<polygon points="166.1,81.1 172.4,81.6 172.2,86.1 166.0,85.6" fill="#201a11"/>
<polygon points="172.4,81.6 177.1,82.1 176.9,86.4 172.2,86.1" fill="#201a11"/>
<polygon points="177.1,82.1 186.3,82.9 186.1,87.1 176.9,86.4" fill="#1a150e"/>
<polygon points="186.3,82.9 195.7,83.8 195.5,87.9 186.1,87.1" fill="#1a150e"/>
<polygon points="195.7,83.8 203.7,84.5 203.3,88.4 195.5,87.9" fill="#110e09"/>
<polygon points="203.7,84.5 203.7,84.5 203.3,88.5 203.3,88.4" fill="#241e14"/>
<polygon points="139.2,83.6 142.3,83.8 142.3,88.8 139.2,88.6" fill="#241e14"/>
<polygon points="142.3,83.8 150.6,84.4 150.5,89.3 142.3,88.8" fill="#292116"/>
<polygon points="150.6,84.4 160.1,85.2 160.0,89.8 150.5,89.3" fill="#1e1910"/>
<polygon points="160.1,85.2 166.6,85.7 166.5,90.2 160.0,89.8" fill="#1e1910"/>
<polygon points="166.6,85.7 171.2,86.0 171.0,90.5 166.5,90.2" fill="#110e09"/>
<polygon points="171.2,86.0 176.5,86.4 176.4,90.8 171.0,90.5" fill="#292116"/>
<polygon points="176.5,86.4 182.0,86.8 181.8,91.1 176.4,90.8" fill="#201a11"/>
<polygon points="182.0,86.8 187.8,87.3 187.5,91.5 181.8,91.1" fill="#1a150e"/>
<polygon points="187.8,87.3 197.6,88.0 197.3,92.1 187.5,91.5" fill="#1e1910"/>
<polygon points="197.6,88.0 202.2,88.4 201.9,92.3 197.3,92.1" fill="#201a11"/>
<polygon points="202.2,88.4 203.3,88.5 203.0,92.4 201.9,92.3" fill="#1e1910"/>
<polygon points="139.2,88.6 144.3,88.9 144.3,93.8 139.3,93.6" fill="#241e14"/>
<polygon points="144.3,88.9 152.9,89.4 152.9,94.2 144.3,93.8" fill="#1e1910"/>
<polygon points="152.9,89.4 158.5,89.7 158.4,94.4 152.9,94.2" fill="#201a11"/>
<polygon points="158.5,89.7 163.9,90.1 163.8,94.6 158.4,94.4" fill="#17130c"/>
<polygon points="163.9,90.1 168.8,90.4 168.7,94.9 163.8,94.6" fill="#1c170f"/>
<polygon points="168.8,90.4 176.0,90.8 175.9,95.2 168.7,94.9" fill="#1a150e"/>
<polygon points="176.0,90.8 180.5,91.0 180.3,95.4 175.9,95.2" fill="#1a150e"/>
<polygon points="180.5,91.0 190.0,91.6 189.7,95.8 180.3,95.4" fill="#1c170f"/>
<polygon points="190.0,91.6 198.0,92.1 197.7,96.1 189.7,95.8" fill="#1a150e"/>
<polygon points="198.0,92.1 203.0,92.4 202.7,96.4 197.7,96.1" fill="#17130c"/>
<polygon points="139.3,93.6 142.0,93.7 142.1,98.6 139.3,98.6" fill="#110e09"/>
<polygon points="142.0,93.7 151.9,94.1 151.9,98.9 142.1,98.6" fill="#17130c"/>
<polygon points="151.9,94.1 159.5,94.5 159.5,99.1 151.9,98.9" fill="#1e1910"/>
<polygon points="159.5,94.5 166.4,94.8 166.3,99.3 159.5,99.1" fill="#110e09"/>
<polygon points="166.4,94.8 172.2,95.0 172.1,99.5 166.3,99.3" fill="#1e1910"/>
<polygon points="172.2,95.0 176.5,95.2 176.3,99.6 172.1,99.5" fill="#1c170f"/>
<polygon points="176.5,95.2 185.0,95.6 184.7,99.8 176.3,99.6" fill="#1a150e"/>
<polygon points="185.0,95.6 193.8,96.0 193.5,100.1 184.7,99.8" fill="#1c170f"/>
<polygon points="193.8,96.0 199.8,96.2 199.5,100.2 193.5,100.1" fill="#201a11"/>
<polygon points="199.8,96.2 202.7,96.4 202.3,100.3 199.5,100.2" fill="#292116"/>
<polygon points="139.3,98.6 143.0,98.7 143.0,103.6 139.4,103.6" fill="#201a11"/>
<polygon points="143.0,98.7 150.3,98.9 150.3,103.7 143.0,103.6" fill="#292116"/>
<polygon points="150.3,98.9 156.5,99.0 156.4,103.7 150.3,103.7" fill="#17130c"/>
<polygon points="156.5,99.0 164.1,99.2 164.0,103.8 156.4,103.7" fill="#1e1910"/>
<polygon points="164.1,99.2 168.5,99.4 168.3,103.9 164.0,103.8" fill="#1e1910"/>
<polygon points="168.5,99.4 178.5,99.6 178.3,104.0 168.3,103.9" fill="#292116"/>
<polygon points="178.5,99.6 186.9,99.9 186.6,104.1 178.3,104.0" fill="#292116"/>
<polygon points="186.9,99.9 196.5,100.1 196.2,104.2 186.6,104.1" fill="#201a11"/>
<polygon points="196.5,100.1 202.3,100.3 202.0,104.2 196.2,104.2" fill="#1e1910"/>
<polygon points="139.4,103.6 143.3,103.6 143.4,108.5 139.4,108.6" fill="#110e09"/>
<polygon points="143.3,103.6 150.9,103.7 150.8,108.5 143.4,108.5" fill="#201a11"/>
<polygon points="150.9,103.7 154.8,103.7 154.7,108.5 150.8,108.5" fill="#1e1910"/>
<polygon points="154.8,103.7 161.6,103.8 161.5,108.4 154.7,108.5" fill="#201a11"/>
<polygon points="161.6,103.8 167.0,103.9 166.9,108.4 161.5,108.4" fill="#17130c"/>
<polygon points="167.0,103.9 173.1,103.9 172.9,108.4 166.9,108.4" fill="#1a150e"/>
<polygon points="173.1,103.9 181.1,104.0 180.9,108.3 172.9,108.4" fill="#241e14"/>
<polygon points="181.1,104.0 188.1,104.1 187.8,108.3 180.9,108.3" fill="#1c170f"/>
<polygon points="188.1,104.1 196.0,104.2 195.7,108.2 187.8,108.3" fill="#201a11"/>
<polygon points="196.0,104.2 202.0,104.2 201.7,108.2 195.7,108.2" fill="#241e14"/>
<polygon points="139.4,108.6 143.1,108.5 143.1,113.5 139.5,113.6" fill="#241e14"/>
<polygon points="143.1,108.5 150.8,108.5 150.8,113.3 143.1,113.5" fill="#241e14"/>
<polygon points="150.8,108.5 160.0,108.4 159.9,113.1 150.8,113.3" fill="#292116"/>
<polygon points="160.0,108.4 165.1,108.4 165.0,113.0 159.9,113.1" fill="#1c170f"/>
<polygon points="165.1,108.4 170.1,108.4 170.0,112.9 165.0,113.0" fill="#1a150e"/>
<polygon points="170.1,108.4 177.0,108.3 176.8,112.7 170.0,112.9" fill="#17130c"/>
<polygon points="177.0,108.3 185.1,108.3 184.9,112.5 176.8,112.7" fill="#110e09"/>
<polygon points="185.1,108.3 194.0,108.2 193.7,112.3 184.9,112.5" fill="#1e1910"/>
<polygon points="194.0,108.2 200.5,108.2 200.2,112.2 193.7,112.3" fill="#110e09"/>
<polygon points="200.5,108.2 201.7,108.2 201.3,112.2 200.2,112.2" fill="#292116"/>
<polygon points="139.5,113.6 142.6,113.5 142.6,118.4 139.5,118.6" fill="#1c170f"/>
<polygon points="142.6,113.5 150.7,113.3 150.7,118.1 142.6,118.4" fill="#201a11"/>
<polygon points="150.7,113.3 156.4,113.2 156.3,117.9 150.7,118.1" fill="#17130c"/>
<polygon points="156.4,113.2 161.8,113.0 161.7,117.7 156.3,117.9" fill="#17130c"/>
<polygon points="161.8,113.0 169.7,112.9 169.6,117.4 161.7,117.7" fill="#110e09"/>
<polygon points="169.7,112.9 177.0,112.7 176.8,117.1 169.6,117.4" fill="#110e09"/>
<polygon points="177.0,112.7 184.7,112.5 184.5,116.8 176.8,117.1" fill="#17130c"/>
<polygon points="184.7,112.5 192.4,112.4 192.1,116.5 184.5,116.8" fill="#292116"/>
<polygon points="192.4,112.4 198.9,112.2 198.6,116.2 192.1,116.5" fill="#17130c"/>
<polygon points="198.9,112.2 201.3,112.2 201.0,116.1 198.6,116.2" fill="#110e09"/>
<polygon points="139.5,118.6 139.4,118.6 139.4,123.6 139.5,123.5" fill="#17130c"/>
<polygon points="139.5,118.6 149.1,118.2 149.1,123.0 139.5,123.5" fill="#1e1910"/>
<polygon points="149.1,118.2 155.5,117.9 155.5,122.6 149.1,123.0" fill="#1c170f"/>
<polygon points="155.5,117.9 165.1,117.5 165.0,122.1 155.5,122.6" fill="#241e14"/>
<polygon points="165.1,117.5 170.0,117.3 169.9,121.8 165.0,122.1" fill="#201a11"/>
<polygon points="170.0,117.3 175.3,117.1 175.1,121.5 169.9,121.8" fill="#17130c"/>
<polygon points="175.3,117.1 183.6,116.8 183.4,121.0 175.1,121.5" fill="#17130c"/>
<polygon points="183.6,116.8 188.4,116.6 188.2,120.8 183.4,121.0" fill="#110e09"/>
<polygon points="188.4,116.6 196.9,116.3 196.6,120.3 188.2,120.8" fill="#1a150e"/>
<polygon points="196.9,116.3 201.0,116.1 200.7,120.0 196.6,120.3" fill="#241e14"/>
<polygon points="139.5,123.5 143.3,123.3 143.3,128.3 139.6,128.5" fill="#292116"/>
<polygon points="143.3,123.3 147.8,123.1 147.8,127.9 143.3,128.3" fill="#201a11"/>
<polygon points="147.8,123.1 152.7,122.8 152.6,127.6 147.8,127.9" fill="#17130c"/>
<polygon points="152.7,122.8 158.6,122.5 158.6,127.1 152.6,127.6" fill="#1c170f"/>
<polygon points="158.6,122.5 165.1,122.1 165.0,126.6 158.6,127.1" fill="#241e14"/>
<polygon points="165.1,122.1 169.4,121.8 169.3,126.3 165.0,126.6" fill="#1e1910"/>
<polygon points="169.4,121.8 174.4,121.6 174.2,126.0 169.3,126.3" fill="#292116"/>
<polygon points="174.4,121.6 184.0,121.0 183.8,125.2 174.2,126.0" fill="#110e09"/>
<polygon points="184.0,121.0 191.0,120.6 190.7,124.7 183.8,125.2" fill="#1c170f"/>
<polygon points="191.0,120.6 196.3,120.3 196.0,124.3 190.7,124.7" fill="#17130c"/>
<polygon points="196.3,120.3 200.7,120.0 200.3,124.0 196.0,124.3" fill="#1e1910"/>
<polygon points="139.6,128.5 139.5,128.6 139.5,133.5 139.6,133.5" fill="#292116"/>
<polygon points="139.6,128.5 147.8,127.9 147.8,132.8 139.6,133.5" fill="#201a11"/>
<polygon points="147.8,127.9 157.0,127.2 156.9,131.9 147.8,132.8" fill="#241e14"/>
<polygon points="157.0,127.2 165.6,126.6 165.4,131.1 156.9,131.9" fill="#1e1910"/>
<polygon points="165.6,126.6 171.8,126.1 171.7,130.6 165.4,131.1" fill="#17130c"/>
<polygon points="171.8,126.1 176.5,125.8 176.3,130.1 171.7,130.6" fill="#1c170f"/>
<polygon points="176.5,125.8 184.3,125.2 184.1,129.4 176.3,130.1" fill="#1a150e"/>
<polygon points="184.3,125.2 190.8,124.7 190.6,128.8 184.1,129.4" fill="#201a11"/>
<polygon points="190.8,124.7 200.2,124.0 199.9,128.0 190.6,128.8" fill="#201a11"/>
<polygon points="200.2,124.0 200.3,124.0 200.0,128.0 199.9,128.0" fill="#1e1910"/>
<polygon points="139.6,133.5 144.4,133.1 144.5,138.0 139.7,138.5" fill="#110e09"/>
<polygon points="144.4,133.1 153.1,132.3 153.0,137.1 144.5,138.0" fill="#1a150e"/>
<polygon points="153.1,132.3 159.9,131.7 159.8,136.3 153.0,137.1" fill="#110e09"/>
<polygon points="159.9,131.7 165.4,131.2 165.2,135.7 159.8,136.3" fill="#292116"/>
<polygon points="165.4,131.2 174.7,130.3 174.6,134.7 165.2,135.7" fill="#241e14"/>
<polygon points="174.7,130.3 180.2,129.8 180.0,134.1 174.6,134.7" fill="#1a150e"/>
<polygon points="180.2,129.8 189.7,128.9 189.4,133.0 180.0,134.1" fill="#110e09"/>
<polygon points="189.7,128.9 196.8,128.2 196.4,132.3 189.4,133.0" fill="#241e14"/>
<polygon points="196.8,128.2 200.0,128.0 199.7,131.9 196.4,132.3" fill="#1e1910"/>
<polygon points="139.7,138.5 143.9,138.1 143.9,143.0 139.7,143.5" fill="#17130c"/>
<polygon points="143.9,138.1 150.7,137.3 150.7,142.1 143.9,143.0" fill="#17130c"/>
<polygon points="150.7,137.3 157.4,136.6 157.4,141.3 150.7,142.1" fill="#292116"/>
<polygon points="157.4,136.6 164.3,135.8 164.2,140.4 157.4,141.3" fill="#1e1910"/>
<polygon points="164.3,135.8 170.9,135.1 170.7,139.5 164.2,140.4" fill="#1a150e"/>
<polygon points="170.9,135.1 174.8,134.6 174.7,139.0 170.7,139.5" fill="#201a11"/>
<polygon points="174.8,134.6 180.9,134.0 180.7,138.2 174.7,139.0" fill="#292116"/>
<polygon points="180.9,134.0 186.1,133.4 185.9,137.6 180.7,138.2" fill="#201a11"/>
<polygon points="186.1,133.4 192.7,132.7 192.4,136.7 185.9,137.6" fill="#1c170f"/>
<polygon points="192.7,132.7 198.9,132.0 198.6,135.9 192.4,136.7" fill="#201a11"/>
<polygon points="198.9,132.0 199.7,131.9 199.3,135.9 198.6,135.9" fill="#1e1910"/>
<polygon points="139.7,143.5 142.1,143.2 142.2,148.2 139.8,148.5" fill="#110e09"/>
<polygon points="142.1,143.2 146.5,142.7 146.5,147.5 142.2,148.2" fill="#17130c"/>
<polygon points="146.5,142.7 150.3,142.2 150.3,147.0 146.5,147.5" fill="#1a150e"/>
<polygon points="150.3,142.2 155.2,141.5 155.2,146.3 150.3,147.0" fill="#110e09"/>
<polygon points="155.2,141.5 160.7,140.8 160.6,145.5 155.2,146.3" fill="#1c170f"/>
<polygon points="160.7,140.8 165.8,140.2 165.6,144.7 160.6,145.5" fill="#201a11"/>
<polygon points="165.8,140.2 170.0,139.6 169.8,144.1 165.6,144.7" fill="#1e1910"/>
<polygon points="170.0,139.6 178.6,138.5 178.4,142.8 169.8,144.1" fill="#110e09"/>
<polygon points="178.6,138.5 186.5,137.5 186.2,141.7 178.4,142.8" fill="#292116"/>
<polygon points="186.5,137.5 190.2,137.0 189.9,141.1 186.2,141.7" fill="#292116"/>
<polygon points="190.2,137.0 198.7,135.9 198.4,139.9 189.9,141.1" fill="#1a150e"/>
<polygon points="198.7,135.9 199.3,135.9 199.0,139.8 198.4,139.9" fill="#241e14"/>
<polygon points="139.8,148.5 145.6,147.7 145.6,152.6 139.8,153.5" fill="#1a150e"/>
<polygon points="145.6,147.7 150.5,146.9 150.5,151.7 145.6,152.6" fill="#1c170f"/>
<polygon points="150.5,146.9 159.4,145.6 159.3,150.3 150.5,151.7" fill="#1c170f"/>
<polygon points="159.4,145.6 166.5,144.6 166.4,149.1 159.3,150.3" fill="#241e14"/>
<polygon points="166.5,144.6 171.4,143.9 171.2,148.3 166.4,149.1" fill="#241e14"/>
<polygon points="171.4,143.9 180.2,142.6 180.0,146.9 171.2,148.3" fill="#1a150e"/>
<polygon points="180.2,142.6 189.0,141.3 188.7,145.4 180.0,146.9" fill="#1a150e"/>
<polygon points="189.0,141.3 196.9,140.1 196.6,144.1 188.7,145.4" fill="#110e09"/>
<polygon points="196.9,140.1 199.0,139.8 198.7,143.8 196.6,144.1" fill="#292116"/>
<polygon points="139.8,153.5 144.8,152.7 144.8,157.6 139.8,158.5" fill="#1a150e"/>
<polygon points="144.8,152.7 149.5,151.9 149.5,156.7 144.8,157.6" fill="#17130c"/>
<polygon points="149.5,151.9 153.6,151.2 153.6,156.0 149.5,156.7" fill="#1c170f"/>
<polygon points="153.6,151.2 162.5,149.7 162.4,154.3 153.6,156.0" fill="#1c170f"/>
<polygon points="162.5,149.7 166.7,149.0 166.6,153.6 162.4,154.3" fill="#1c170f"/>
<polygon points="166.7,149.0 173.2,148.0 173.1,152.4 166.6,153.6" fill="#241e14"/>
<polygon points="173.2,148.0 181.5,146.6 181.3,150.9 173.1,152.4" fill="#201a11"/>
<polygon points="181.5,146.6 185.6,145.9 185.4,150.1 181.3,150.9" fill="#17130c"/>
<polygon points="185.6,145.9 193.7,144.6 193.4,148.6 185.4,150.1" fill="#201a11"/>
<polygon points="193.7,144.6 198.1,143.9 197.7,147.8 193.4,148.6" fill="#1a150e"/>
<polygon points="198.1,143.9 198.7,143.8 198.3,147.7 197.7,147.8" fill="#1a150e"/>
<polygon points="139.8,158.5 148.2,157.0 148.2,161.8 139.9,163.5" fill="#1e1910"/>
<polygon points="148.2,157.0 155.1,155.7 155.0,160.4 148.2,161.8" fill="#1a150e"/>
<polygon points="155.1,155.7 164.2,154.0 164.1,158.6 155.0,160.4" fill="#201a11"/>
<polygon points="164.2,154.0 168.1,153.3 168.0,157.8 164.1,158.6" fill="#1e1910"/>
<polygon points="168.1,153.3 173.6,152.3 173.4,156.7 168.0,157.8" fill="#201a11"/>
<polygon points="173.6,152.3 179.6,151.2 179.4,155.5 173.4,156.7" fill="#1c170f"/>
<polygon points="179.6,151.2 185.6,150.1 185.3,154.2 179.4,155.5" fill="#1c170f"/>
<polygon points="185.6,150.1 189.2,149.4 188.9,153.5 185.3,154.2" fill="#17130c"/>
<polygon points="189.2,149.4 197.6,147.8 197.3,151.8 188.9,153.5" fill="#1a150e"/>
<polygon points="197.6,147.8 198.3,147.7 198.0,151.7 197.3,151.8" fill="#1c170f"/>
<polygon points="139.9,163.5 144.2,162.6 144.2,167.5 139.9,168.5" fill="#241e14"/>
<polygon points="144.2,162.6 151.2,161.2 151.2,166.0 144.2,167.5" fill="#1e1910"/>
<polygon points="151.2,161.2 157.7,159.9 157.6,164.6 151.2,166.0" fill="#17130c"/>
<polygon points="157.7,159.9 163.0,158.8 162.9,163.4 157.6,164.6" fill="#1e1910"/>
<polygon points="163.0,158.8 171.2,157.1 171.0,161.6 162.9,163.4" fill="#292116"/>
<polygon points="171.2,157.1 178.0,155.7 177.8,160.0 171.0,161.6" fill="#241e14"/>
<polygon points="178.0,155.7 184.4,154.4 184.2,158.6 177.8,160.0" fill="#1c170f"/>
<polygon points="184.4,154.4 192.6,152.8 192.3,156.8 184.2,158.6" fill="#110e09"/>
<polygon points="192.6,152.8 197.7,151.7 197.4,155.7 192.3,156.8" fill="#1e1910"/>
<polygon points="197.7,151.7 198.0,151.7 197.7,155.6 197.4,155.7" fill="#1a150e"/>
<polygon points="139.9,168.5 144.7,167.4 144.7,172.4 140.0,173.5" fill="#1c170f"/>
<polygon points="144.7,167.4 153.2,165.5 153.2,170.3 144.7,172.4" fill="#1c170f"/>
<polygon points="153.2,165.5 161.1,163.8 161.0,168.4 153.2,170.3" fill="#1a150e"/>
<polygon points="161.1,163.8 166.9,162.5 166.8,167.0 161.0,168.4" fill="#1a150e"/>
<polygon points="166.9,162.5 170.8,161.6 170.6,166.0 166.8,167.0" fill="#1c170f"/>
<polygon points="170.8,161.6 176.0,160.4 175.8,164.8 170.6,166.0" fill="#1e1910"/>
<polygon points="176.0,160.4 179.5,159.7 179.3,163.9 175.8,164.8" fill="#1c170f"/>
<polygon points="179.5,159.7 188.7,157.6 188.4,161.7 179.3,163.9" fill="#17130c"/>
<polygon points="188.7,157.6 193.5,156.5 193.2,160.6 188.4,161.7" fill="#110e09"/>
<polygon points="193.5,156.5 197.7,155.6 197.3,159.6 193.2,160.6" fill="#292116"/>
<polygon points="140.0,173.5 144.0,172.5 144.0,177.4 140.0,178.5" fill="#292116"/>
<polygon points="144.0,172.5 150.4,171.0 150.4,175.8 144.0,177.4" fill="#201a11"/>
<polygon points="150.4,171.0 157.5,169.2 157.4,173.9 150.4,175.8" fill="#1e1910"/>
<polygon points="157.5,169.2 165.3,167.3 165.2,171.9 157.4,173.9" fill="#17130c"/>
<polygon points="165.3,167.3 169.4,166.3 169.3,170.8 165.2,171.9" fill="#1e1910"/>
<polygon points="169.4,166.3 177.1,164.5 176.9,168.8 169.3,170.8" fill="#110e09"/>
<polygon points="177.1,164.5 183.1,163.0 182.9,167.2 176.9,168.8" fill="#17130c"/>
<polygon points="183.1,163.0 190.9,161.1 190.6,165.2 182.9,167.2" fill="#292116"/>
<polygon points="190.9,161.1 194.4,160.3 194.1,164.3 190.6,165.2" fill="#110e09"/>
<polygon points="194.4,160.3 197.3,159.6 197.0,163.5 194.1,164.3" fill="#1c170f"/>
<rect x="137.8" y="93" width="3.2" height="6" fill="#241e14"/>
<path d="M137.8 93h3" stroke="#3e3222" stroke-width="0.6"/>
<rect x="137.2" y="113" width="3.8" height="9" fill="#241e14"/>
<path d="M137.2 113h3" stroke="#3e3222" stroke-width="0.6"/>
<rect x="137.6" y="126" width="3.4" height="5" fill="#241e14"/>
<path d="M137.6 126h3" stroke="#3e3222" stroke-width="0.6"/>
<rect x="137.8" y="141" width="3.2" height="10" fill="#241e14"/>
<path d="M137.8 141h3" stroke="#3e3222" stroke-width="0.6"/>
<path d="M139 58.6 L141 56.6 L152 58 L154 60.6 L166 61 L168 62.5 L184 64.5 L186 63 L204 66 L205 68.7z" fill="#2e261a"/>
<path d="M167 171 L166.5 114 Q168 96 180 93 Q192 95 195 114 L193.5 162z" fill="#a8a8a8" opacity="0.09"/>
<path d="M167 171 L166.5 114 Q168 96 180 93 Q192 95 195 114" fill="none" stroke="#c0c0c0" stroke-width="0.6" opacity="0.15"/>
<path d="M143 73L143 177.3M152.5 73L151.7 175.1M162 73L160.8 172.9M171 73L169 170.9M180 73L178 168.7M188.5 73L186.7 166.5M196 73L194 164.7" stroke="#3e2f17" stroke-width="0.85" fill="none"/>
<path d="M139.5 74.5L203.5 78.1M139.5 84.5L203.5 86.5M139.5 94.5L203.5 94.9M139.5 104.5L203.5 103.3M139.5 114.5L203.5 111.7M139.5 124.5L203.5 120.1M139.5 134.5L203.5 128.5M139.5 144.5L203.5 136.9M139.5 154.5L203.5 145.3M139.5 164.5L203.5 153.7M139.5 174.5L203.5 162.1" stroke="#463519" stroke-width="0.95" fill="none"/>
<path d="M142.6 74.7h0.8M152.1 75.2h0.8M161.6 75.8h0.8M170.6 76.3h0.8M179.6 76.8h0.8M188.1 77.3h0.8M195.6 77.7h0.8M142.6 84.6h0.8M152.0 84.9h0.8M161.5 85.2h0.8M170.4 85.5h0.8M179.4 85.8h0.8M187.9 86.0h0.8M195.4 86.3h0.8M142.6 94.5h0.8M151.9 94.6h0.8M161.4 94.6h0.8M170.2 94.7h0.8M179.2 94.8h0.8M187.7 94.8h0.8M195.2 94.9h0.8M142.6 104.4h0.8M151.9 104.3h0.8M161.2 104.1h0.8M170.0 103.9h0.8M179.0 103.8h0.8M187.6 103.6h0.8M195.0 103.5h0.8M142.6 114.3h0.8M151.8 113.9h0.8M161.1 113.5h0.8M169.8 113.2h0.8M178.8 112.8h0.8M187.4 112.4h0.8M194.8 112.1h0.8M142.6 124.3h0.8M151.7 123.6h0.8M161.0 123.0h0.8M169.6 122.4h0.8M178.6 121.8h0.8M187.2 121.2h0.8M194.6 120.7h0.8M142.6 134.2h0.8M151.6 133.3h0.8M160.9 132.5h0.8M169.4 131.7h0.8M178.4 130.8h0.8M187.0 130.0h0.8M194.4 129.3h0.8M142.6 144.1h0.8M151.5 143.0h0.8M160.8 141.9h0.8M169.2 140.9h0.8M178.2 139.9h0.8M186.8 138.8h0.8M194.2 138.0h0.8M142.6 154.0h0.8M151.5 152.7h0.8M160.6 151.4h0.8M169.0 150.2h0.8M178.0 148.9h0.8M186.7 147.7h0.8M194.0 146.6h0.8M142.6 163.9h0.8M151.4 162.4h0.8M160.5 160.9h0.8M168.8 159.5h0.8M177.8 158.0h0.8M186.5 156.5h0.8M193.8 155.3h0.8M142.6 173.8h0.8M151.3 172.1h0.8M160.4 170.4h0.8M168.6 168.8h0.8M177.6 167.0h0.8M186.3 165.4h0.8M193.6 163.9h0.8" stroke="#7a5e32" stroke-width="0.7" fill="none" opacity="0.4"/>
</g>
<text x="30.60" y="59.40" font-family="Liberation Sans" font-size="9.4" fill="#1e1e1e" textLength="45.20" lengthAdjust="spacingAndGlyphs" >Perspective</text><text x="29.80" y="58.60" font-family="Liberation Sans" font-size="9.4" fill="#e4e4e4" textLength="45.20" lengthAdjust="spacingAndGlyphs" >Perspective</text>
<rect x="271" y="49" width="237" height="118" fill="#424242"/>
<path d="M291.50 49V167M318.80 49V167M345.50 49V167M372.80 49V167M400.30 49V167M427.20 49V167M454.40 49V167M482.50 49V167M271 71.40H508M271 99.10H508M271 126.50H508" stroke="#5c5c5c" stroke-width="0.9" fill="none"/>
<path d="M271 153.6H508" stroke="#b0b0b0" stroke-width="1.2"/>
<text x="275.00" y="59.80" font-family="Liberation Sans" font-size="9.4" fill="#1e1e1e" textLength="32.00" lengthAdjust="spacingAndGlyphs" >Top - XZ</text><text x="274.20" y="59.00" font-family="Liberation Sans" font-size="9.4" fill="#e4e4e4" textLength="32.00" lengthAdjust="spacingAndGlyphs" >Top - XZ</text>
<rect x="27" y="184" width="227" height="125" fill="#424242"/>
<path d="M34.40 184V309M43.40 184V309M52.40 184V309M61.40 184V309M70.40 184V309M79.40 184V309M88.40 184V309M97.40 184V309M106.40 184V309M115.40 184V309M124.40 184V309M133.40 184V309M142.40 184V309M151.40 184V309M160.40 184V309M169.40 184V309M178.40 184V309M187.40 184V309M196.40 184V309M205.40 184V309M214.40 184V309M223.40 184V309M232.40 184V309M241.40 184V309M250.40 184V309M27 189.62H254M27 198.76H254M27 207.90H254M27 217.04H254M27 226.18H254M27 235.32H254M27 244.46H254M27 253.60H254M27 262.74H254M27 271.88H254M27 281.02H254M27 290.16H254M27 299.30H254M27 308.44H254" stroke="#4d4d4d" stroke-width="0.9" fill="none"/>
<path d="M43.40 184V309M115.40 184V309M187.40 184V309M27 207.90H254M27 281.10H254" stroke="#656565" stroke-width="1" fill="none"/>
<text x="31.00" y="195.00" font-family="Liberation Sans" font-size="9.4" fill="#1e1e1e" textLength="32.00" lengthAdjust="spacingAndGlyphs" >Left - ZY</text><text x="30.20" y="194.20" font-family="Liberation Sans" font-size="9.4" fill="#e4e4e4" textLength="32.00" lengthAdjust="spacingAndGlyphs" >Left - ZY</text>
<rect x="271" y="184" width="237" height="125" fill="#424242"/>
<path d="M285.30 184V309M301.10 184V309M316.90 184V309M332.70 184V309M348.50 184V309M364.30 184V309M380.10 184V309M395.90 184V309M411.70 184V309M427.50 184V309M443.30 184V309M459.10 184V309M474.90 184V309M490.70 184V309M506.50 184V309M271 197.40H508M271 213.25H508M271 229.10H508M271 244.95H508M271 260.80H508M271 292.50H508M271 308.35H508" stroke="#5c5c5c" stroke-width="0.9" fill="none"/>
<path d="M271 276.6H508" stroke="#b0b0b0" stroke-width="1.2"/>
<text x="275.00" y="194.90" font-family="Liberation Sans" font-size="9.4" fill="#1e1e1e" textLength="38.80" lengthAdjust="spacingAndGlyphs" >Back - XY</text><text x="274.20" y="194.10" font-family="Liberation Sans" font-size="9.4" fill="#e4e4e4" textLength="38.80" lengthAdjust="spacingAndGlyphs" >Back - XY</text>
<path d="M27.5 179V49.5H267" stroke="#8a8a8a" stroke-width="1" fill="none" opacity="0.6"/>
<path d="M271.5 167V49.5H508" stroke="#8a8a8a" stroke-width="1" fill="none" opacity="0.6"/>
<path d="M27.5 309V184.5H254" stroke="#8a8a8a" stroke-width="1" fill="none" opacity="0.6"/>
<path d="M271.5 309V184.5H508" stroke="#8a8a8a" stroke-width="1" fill="none" opacity="0.6"/>
<rect x="27" y="325" width="494" height="81" fill="#ffffff" />
<rect x="27" y="325" width="494" height="1" fill="#8a8a8a" />
<rect x="27" y="325" width="1" height="80" fill="#7a7a7a" />
<rect x="510" y="326" width="11" height="80" fill="#f0f0f0" />
<rect x="520" y="326" width="1" height="80" fill="#e3e3e3" />
<path d="M515.4 381V392.5" stroke="#6a6a6a" stroke-width="1.1"/>
<text x="29.30" y="334.60" font-family="Liberation Mono" font-size="8.6" fill="#23992a" textLength="251.75" lengthAdjust="spacingAndGlyphs" stroke="#23992a" stroke-width="0.15">Loading texture &quot;C:/_7DRL/models/webs/skins/6.tex&quot;...</text>
<text x="29.30" y="344.07" font-family="Liberation Mono" font-size="8.6" fill="#23992a" textLength="213.75" lengthAdjust="spacingAndGlyphs" stroke="#23992a" stroke-width="0.15">Loading model &quot;C:/_7DRL/models/webs/coc1.mdl&quot;</text>
<text x="29.30" y="353.54" font-family="Liberation Mono" font-size="8.6" fill="#23992a" textLength="256.50" lengthAdjust="spacingAndGlyphs" stroke="#23992a" stroke-width="0.15">Loading material &quot;C:/_7DRL/models/webs/skins/7.mat&quot;...</text>
<text x="29.30" y="363.01" font-family="Liberation Mono" font-size="8.6" fill="#23992a" textLength="251.75" lengthAdjust="spacingAndGlyphs" stroke="#23992a" stroke-width="0.15">Loading texture &quot;C:/_7DRL/models/webs/skins/7.tex&quot;...</text>
<text x="29.30" y="372.48" font-family="Liberation Mono" font-size="8.6" fill="#23992a" textLength="204.25" lengthAdjust="spacingAndGlyphs" stroke="#23992a" stroke-width="0.15">Loading model &quot;C:/_7DRL/models/webs/22.mdl&quot;</text>
<text x="29.30" y="381.95" font-family="Liberation Mono" font-size="8.6" fill="#23992a" textLength="204.25" lengthAdjust="spacingAndGlyphs" stroke="#23992a" stroke-width="0.15">Loading model &quot;C:/_7DRL/models/webs/19.mdl&quot;</text>
<text x="29.30" y="391.42" font-family="Liberation Mono" font-size="8.6" fill="#23992a" textLength="251.75" lengthAdjust="spacingAndGlyphs" stroke="#23992a" stroke-width="0.15">Loading model &quot;C:/_7DRL/models/tileset/arch_bars.mdl&quot;</text>
<text x="29.30" y="400.89" font-family="Liberation Mono" font-size="8.6" fill="#23992a" textLength="266.00" lengthAdjust="spacingAndGlyphs" stroke="#23992a" stroke-width="0.15">Loading material &quot;C:/_7DRL/materials/solids/grey.mat&quot;...</text>
<rect x="384" y="174" width="12" height="2" fill="#848484" rx="0.8" />
<rect x="134" y="316" width="12" height="2" fill="#848484" rx="0.8" />
<rect x="384" y="316" width="12" height="2" fill="#848484" rx="0.8" />
<rect x="261" y="241" width="2" height="12" fill="#848484" rx="0.8" />
<rect x="515" y="241" width="2" height="12" fill="#848484" rx="0.8" />
<rect x="515" y="103" width="2" height="11.5" fill="#848484" rx="0.8" />
<rect x="525" y="65" width="1" height="341" fill="#fbfbfb" />
<rect x="526.5" y="51.5" width="34" height="14" fill="#eeeeee" stroke="#dddddd" stroke-width="1" />
<rect x="595" y="51.5" width="31" height="14" fill="#eeeeee" stroke="#dddddd" stroke-width="1" />
<rect x="626" y="51.5" width="32" height="14" fill="#eeeeee" stroke="#dddddd" stroke-width="1" />
<rect x="560.5" y="49.5" width="34.2" height="16" fill="#f9f9f9" stroke="#dddddd" stroke-width="1" />
<text x="530.10" y="59.90" font-family="Liberation Sans" font-size="9.3" fill="#1a1a1a" textLength="26.80" lengthAdjust="spacingAndGlyphs" >Objects</text>
<text x="565.30" y="59.10" font-family="Liberation Sans" font-size="9.3" fill="#1a1a1a" textLength="22.40" lengthAdjust="spacingAndGlyphs" >Assets</text>
<text x="598.20" y="59.90" font-family="Liberation Sans" font-size="9.3" fill="#1a1a1a" textLength="21.20" lengthAdjust="spacingAndGlyphs" >Scene</text>
<text x="631.00" y="59.90" font-family="Liberation Sans" font-size="9.3" fill="#1a1a1a" textLength="23.60" lengthAdjust="spacingAndGlyphs" >Terrain</text>
<rect x="527" y="65" width="221" height="144" fill="#ffffff" />
<path d="M527.5 208.5V65.5H747.5V208.5H527.5" fill="none" stroke="#9aa0aa" stroke-width="1"/>
<rect x="735" y="66" width="12" height="142" fill="#f0f0f0" />
<rect x="739.6" y="110.3" width="1.6" height="58.6" fill="#858585" />
<clipPath id="ct"><rect x="528" y="66" width="207" height="142"/></clipPath><g clip-path="url(#ct)">
<rect x="557.2" y="68.9" width="9" height="9.2" fill="#c79a55"/><path d="M558.4000000000001 71.10000000000001H563.4000000000001L564.2 70.30000000000001H565.0" fill="none" stroke="#f6ead2" stroke-width="0.8"/><path d="M557.2 72.10000000000001H566.2" stroke="#b5894a" stroke-width="0.6"/>
<text x="571.20" y="76.40" font-family="Liberation Sans" font-size="8.9" fill="#1a1a1a" textLength="28.50" lengthAdjust="spacingAndGlyphs" >markers</text>
<rect x="557.2" y="81.08000000000001" width="9" height="9.2" fill="#c79a55"/><path d="M558.4000000000001 83.28000000000002H563.4000000000001L564.2 82.48000000000002H565.0" fill="none" stroke="#f6ead2" stroke-width="0.8"/><path d="M557.2 84.28000000000002H566.2" stroke="#b5894a" stroke-width="0.6"/>
<rect x="546.8" y="83.78000000000002" width="5.6" height="5.6" rx="1" fill="#f4f4f4" stroke="#a8a8a8" stroke-width="0.9"/><path d="M548.1999999999999 86.58000000000001H551.0" stroke="#3d5aa8" stroke-width="0.9"/><path d="M549.5999999999999 85.18000000000002V87.98000000000002" stroke="#3d5aa8" stroke-width="0.9"/>
<text x="571.00" y="88.58" font-family="Liberation Sans" font-size="8.9" fill="#1a1a1a" textLength="32.30" lengthAdjust="spacingAndGlyphs" >Materials</text>
<rect x="557.2" y="93.26" width="9" height="9.2" fill="#c79a55"/><path d="M558.4000000000001 95.46000000000001H563.4000000000001L564.2 94.66000000000001H565.0" fill="none" stroke="#f6ead2" stroke-width="0.8"/><path d="M557.2 96.46000000000001H566.2" stroke="#b5894a" stroke-width="0.6"/>
<rect x="546.8" y="95.96000000000001" width="5.6" height="5.6" rx="1" fill="#f4f4f4" stroke="#a8a8a8" stroke-width="0.9"/><path d="M548.1999999999999 98.76H551.0" stroke="#3d5aa8" stroke-width="0.9"/><path d="M549.5999999999999 97.36000000000001V100.16000000000001" stroke="#3d5aa8" stroke-width="0.9"/>
<text x="571.00" y="100.76" font-family="Liberation Sans" font-size="8.9" fill="#1a1a1a" textLength="26.00" lengthAdjust="spacingAndGlyphs" >Models</text>
<path d="M558.7 107.94L565.8000000000001 105.84V114.44H558.7z" fill="#ba8c4a"/><path d="M559.4000000000001 108.24L565.2 106.53999999999999V110.44" fill="none" stroke="#fff" stroke-width="0.7"/><path d="M556.9000000000001 110.03999999999999L564.5 110.03999999999999L565.8000000000001 114.64H558.4000000000001z" fill="#c79a55"/>
<rect x="546.8" y="108.14" width="5.6" height="5.6" rx="1" fill="#f4f4f4" stroke="#a8a8a8" stroke-width="0.9"/><path d="M548.1999999999999 110.94H551.0" stroke="#3d5aa8" stroke-width="0.9"/>
<text x="571.00" y="112.94" font-family="Liberation Sans" font-size="8.9" fill="#1a1a1a" textLength="27.00" lengthAdjust="spacingAndGlyphs" >Prefabs</text>
<rect x="570.5" y="117.62" width="9" height="9.2" fill="#c79a55"/><path d="M571.7 119.82000000000001H576.7L577.5 119.02000000000001H578.3" fill="none" stroke="#f6ead2" stroke-width="0.8"/><path d="M570.5 120.82000000000001H579.5" stroke="#b5894a" stroke-width="0.6"/>
<rect x="559.6" y="120.32000000000001" width="5.6" height="5.6" rx="1" fill="#f4f4f4" stroke="#a8a8a8" stroke-width="0.9"/><path d="M561.0 123.12H563.8000000000001" stroke="#3d5aa8" stroke-width="0.9"/><path d="M562.4 121.72000000000001V124.52000000000001" stroke="#3d5aa8" stroke-width="0.9"/>
<text x="583.90" y="125.12" font-family="Liberation Sans" font-size="8.9" fill="#1a1a1a" textLength="19.10" lengthAdjust="spacingAndGlyphs" >decal</text>
<rect x="570.5" y="129.8" width="9" height="9.2" fill="#c79a55"/><path d="M571.7 132.0H576.7L577.5 131.20000000000002H578.3" fill="none" stroke="#f6ead2" stroke-width="0.8"/><path d="M570.5 133.0H579.5" stroke="#b5894a" stroke-width="0.6"/>
<text x="583.90" y="137.30" font-family="Liberation Sans" font-size="8.9" fill="#1a1a1a" textLength="23.70" lengthAdjust="spacingAndGlyphs" >Effects</text>
<rect x="570.5" y="141.98000000000002" width="9" height="9.2" fill="#c79a55"/><path d="M571.7 144.18H576.7L577.5 143.38000000000002H578.3" fill="none" stroke="#f6ead2" stroke-width="0.8"/><path d="M570.5 145.18H579.5" stroke="#b5894a" stroke-width="0.6"/>
<text x="583.90" y="149.48" font-family="Liberation Sans" font-size="8.9" fill="#1a1a1a" textLength="19.60" lengthAdjust="spacingAndGlyphs" >lights</text>
<rect x="582.8" y="153.06" width="33.8" height="12.2" fill="#ececec" />
<rect x="570.5" y="154.16" width="9" height="9.2" fill="#c79a55"/><path d="M571.7 156.35999999999999H576.7L577.5 155.56H578.3" fill="none" stroke="#f6ead2" stroke-width="0.8"/><path d="M570.5 157.35999999999999H579.5" stroke="#b5894a" stroke-width="0.6"/>
<text x="583.90" y="161.66" font-family="Liberation Sans" font-size="8.9" fill="#1a1a1a" textLength="31.10" lengthAdjust="spacingAndGlyphs" >Modules</text>
<rect x="570.5" y="166.34" width="9" height="9.2" fill="#c79a55"/><path d="M571.7 168.54H576.7L577.5 167.74H578.3" fill="none" stroke="#f6ead2" stroke-width="0.8"/><path d="M570.5 169.54H579.5" stroke="#b5894a" stroke-width="0.6"/>
<text x="583.90" y="173.84" font-family="Liberation Sans" font-size="8.9" fill="#1a1a1a" textLength="36.50" lengthAdjust="spacingAndGlyphs" >Projectiles</text>
<rect x="570.5" y="178.52" width="9" height="9.2" fill="#c79a55"/><path d="M571.7 180.72H576.7L577.5 179.92000000000002H578.3" fill="none" stroke="#f6ead2" stroke-width="0.8"/><path d="M570.5 181.72H579.5" stroke="#b5894a" stroke-width="0.6"/>
<text x="583.90" y="186.02" font-family="Liberation Sans" font-size="8.9" fill="#1a1a1a" textLength="23.20" lengthAdjust="spacingAndGlyphs" >sprites</text>
<rect x="557.2" y="190.7" width="9" height="9.2" fill="#c79a55"/><path d="M558.4000000000001 192.89999999999998H563.4000000000001L564.2 192.1H565.0" fill="none" stroke="#f6ead2" stroke-width="0.8"/><path d="M557.2 193.89999999999998H566.2" stroke="#b5894a" stroke-width="0.6"/>
<rect x="546.8" y="193.39999999999998" width="5.6" height="5.6" rx="1" fill="#f4f4f4" stroke="#a8a8a8" stroke-width="0.9"/><path d="M548.1999999999999 196.2H551.0" stroke="#3d5aa8" stroke-width="0.9"/><path d="M549.5999999999999 194.79999999999998V197.59999999999997" stroke="#3d5aa8" stroke-width="0.9"/>
<text x="570.90" y="198.20" font-family="Liberation Sans" font-size="8.9" fill="#1a1a1a" textLength="28.80" lengthAdjust="spacingAndGlyphs" >Projects</text>
<rect x="557.2" y="202.88" width="9" height="9.2" fill="#c79a55"/><path d="M558.4000000000001 205.07999999999998H563.4000000000001L564.2 204.28H565.0" fill="none" stroke="#f6ead2" stroke-width="0.8"/><path d="M557.2 206.07999999999998H566.2" stroke="#b5894a" stroke-width="0.6"/>
<text x="570.90" y="210.38" font-family="Liberation Sans" font-size="8.9" fill="#1a1a1a" textLength="24.00" lengthAdjust="spacingAndGlyphs" >scripts</text>
</g>
<rect x="527" y="211" width="221" height="165" fill="#f0f0f0" />
<rect x="527" y="211" width="207" height="164" fill="#434343" />
<path d="M527.5 375V211.5H734" fill="none" stroke="#363636" stroke-width="1"/>
<rect x="740.5" y="222.8" width="1.6" height="70.4" fill="#858585" />
<clipPath id="ca"><rect x="528" y="212" width="206" height="163"/></clipPath><g clip-path="url(#ca)">
<defs><linearGradient id="rg" x1="0" y1="0" x2="1" y2="1"><stop offset="0" stop-color="#a4a4a4"/><stop offset="1" stop-color="#5c5c5c"/></linearGradient></defs>
<rect x="581.7" y="216.3" width="46.5" height="58.2" fill="#3399ff" />
<path d="M545 225 Q546.5 220.5 552 221.6 Q562.5 223.5 566.6 235 L566 261.2 L544.5 249.8z" fill="#2e1f1b"/>
<path d="M545.2 226 Q546.5 221.2 552 222.2 Q562 224 566 235.5" fill="none" stroke="#4e342b" stroke-width="1.3"/>
<path d="M548 228V251.5M552 223V253.6M556 224V255.7M560 226V257.8M563.5 229V259.6" stroke="#22160f" stroke-width="0.5"/>
<path d="M546.9 233.2L562.8 241.4M546.9 246.8L562.8 254.5" stroke="#3c4450" stroke-width="1.1" stroke-dasharray="1.6 1"/>
<path d="M546.5 249.6L565.5 259.8" stroke="#4a3028" stroke-width="0.8"/>
<path d="M611 232.2L615.2 231.4L619.6 235.8L614.8 240.2L619.8 244L613.4 249.2L611 249z" fill="#1c1a16"/>
<path d="M607.4 236V248.5M609.7 234.5V248" stroke="#23407a" stroke-width="0.7" opacity="0.8"/>
<path d="M605.5 238Q603.8 242 604.8 247" stroke="#3a5a90" stroke-width="0.6" stroke-dasharray="0.8 0.8" fill="none" opacity="0.7"/>
<path d="M637.2 251.6 L650.5 240 L654.5 243.5z" fill="#1c1815"/>
<path d="M641 248.5L650 242.5" stroke="#5a4a3a" stroke-width="0.6" stroke-dasharray="0.8 1.2"/>
<path d="M655 239.5 L671.5 229.6 L672.8 230.8 L657.5 242.5z" fill="#3e332a"/>
<path d="M657 240L671 231" stroke="#9a8068" stroke-width="0.9" stroke-dasharray="1 1.3"/>
<path d="M649.3 238.6 L652.5 236 L657 238.2 L656.6 241.8 L653 243.6 L650 241.5z" fill="#a2a2a2"/>
<path d="M652 241.5 L656.6 241.8 L653 243.6z" fill="#6a6a6a"/><circle cx="657.2" cy="242.8" r="0.6" fill="#ddd"/>
<clipPath id="tc1"><path d="M693.3 221.8L724.8 240.0L724.8 247.8L693.3 231.8z"/></clipPath><path d="M693.3 221.8L724.8 240.0L724.8 247.8L693.3 231.8z" fill="#232323"/><path d="M694.3 227.0h0.6M686.8 242.9h0.6M687.1 244.4h0.6M686.6 221.6h0.6M692.6 221.6h0.6M694.3 249.3h0.6M716.1 236.3h0.6M695.4 238.0h0.6M701.8 257.0h0.6M718.4 223.6h0.6M719.0 228.5h0.6M691.7 221.1h0.6M708.7 254.1h0.6M693.6 255.2h0.6M710.4 244.4h0.6M718.7 234.1h0.6M698.3 241.3h0.6M718.2 225.6h0.6M690.8 251.0h0.6M703.1 248.3h0.6M716.3 236.8h0.6M721.1 251.9h0.6M701.1 236.1h0.6M705.0 238.9h0.6M690.4 219.9h0.6M718.9 230.0h0.6M705.2 253.1h0.6M686.5 229.9h0.6M706.4 250.6h0.6M683.7 252.7h0.6M702.4 225.0h0.6M700.0 233.1h0.6M700.4 232.3h0.6M709.3 231.7h0.6M721.1 233.6h0.6M716.3 256.0h0.6M726.2 249.1h0.6M704.4 246.7h0.6M726.2 240.8h0.6M705.2 222.4h0.6M701.3 226.0h0.6M711.3 234.5h0.6M701.1 225.3h0.6M696.4 221.8h0.6M698.3 220.2h0.6M725.9 240.7h0.6M691.9 251.3h0.6M712.3 251.3h0.6M724.6 230.4h0.6M699.8 246.9h0.6M721.8 247.8h0.6M708.4 251.5h0.6M697.8 222.6h0.6M717.3 257.0h0.6M700.8 247.4h0.6M687.1 247.4h0.6M711.3 248.1h0.6M698.4 227.2h0.6M723.7 232.6h0.6M688.8 225.1h0.6M706.3 236.3h0.6M697.1 235.6h0.6M722.3 244.7h0.6M687.6 227.8h0.6M687.6 230.7h0.6M700.1 233.4h0.6M699.8 231.5h0.6M683.6 230.5h0.6M711.2 250.2h0.6M690.1 238.8h0.6M723.9 224.5h0.6M715.7 233.1h0.6M712.8 248.1h0.6M718.6 221.3h0.6M714.1 230.7h0.6M724.9 256.6h0.6M684.1 242.1h0.6M683.0 245.7h0.6M686.1 223.2h0.6M711.3 246.3h0.6M691.5 237.8h0.6M683.4 249.7h0.6M701.5 225.1h0.6M683.7 252.8h0.6M697.3 232.0h0.6M714.4 230.0h0.6M688.7 256.9h0.6M696.9 243.7h0.6M693.9 256.8h0.6M713.3 232.1h0.6M721.6 224.9h0.6M709.3 233.6h0.6M694.3 227.7h0.6M684.0 249.5h0.6M701.0 245.1h0.6M716.7 243.4h0.6M697.7 233.9h0.6M727.2 242.7h0.6M686.0 224.2h0.6M708.3 256.6h0.6M713.8 234.9h0.6M683.0 235.2h0.6M724.6 242.2h0.6M689.2 230.2h0.6M692.8 245.2h0.6M684.0 254.7h0.6M705.1 252.9h0.6M726.8 252.4h0.6M687.3 247.9h0.6M719.7 247.3h0.6M721.5 254.4h0.6M689.4 257.4h0.6M683.9 238.5h0.6M698.4 248.7h0.6M718.3 234.2h0.6M710.0 253.9h0.6M699.8 255.7h0.6M721.4 250.4h0.6M720.4 254.9h0.6M688.9 229.3h0.6M721.9 227.3h0.6M713.9 232.8h0.6M693.4 237.2h0.6M725.4 235.8h0.6M697.0 230.0h0.6M694.2 243.6h0.6M704.1 231.0h0.6M708.0 252.8h0.6M717.9 238.7h0.6M688.1 231.2h0.6M726.6 244.9h0.6M725.7 226.8h0.6M720.9 250.5h0.6M710.9 244.6h0.6M724.5 232.2h0.6M687.3 220.6h0.6M709.5 237.8h0.6M718.2 253.2h0.6M720.6 251.0h0.6M685.6 253.0h0.6M701.2 228.8h0.6M697.8 226.5h0.6M716.7 254.3h0.6M717.4 249.4h0.6M699.0 244.0h0.6M700.9 249.2h0.6M725.9 243.2h0.6M718.8 244.2h0.6M684.9 236.3h0.6M705.2 224.2h0.6M698.8 246.2h0.6M684.1 227.6h0.6M691.2 234.1h0.6M708.9 246.2h0.6M707.6 227.8h0.6M714.2 225.4h0.6M726.8 235.6h0.6M703.3 242.2h0.6M702.0 247.0h0.6M726.9 224.9h0.6M715.3 243.0h0.6M722.7 225.6h0.6M702.1 248.4h0.6M725.1 251.0h0.6M707.3 238.2h0.6M693.0 222.6h0.6M704.7 247.9h0.6M709.6 248.7h0.6M704.8 252.9h0.6M697.3 237.0h0.6M693.5 222.5h0.6M710.9 236.6h0.6M688.3 239.3h0.6M722.8 249.8h0.6M700.5 220.8h0.6M699.7 227.4h0.6M698.0 226.0h0.6M693.0 236.6h0.6M697.2 231.2h0.6M713.1 229.7h0.6M684.8 257.2h0.6M721.7 230.4h0.6M697.9 250.8h0.6M703.8 252.3h0.6M684.7 242.4h0.6M694.3 247.1h0.6M720.0 238.7h0.6M714.9 250.7h0.6M718.3 256.0h0.6M722.1 250.8h0.6M694.2 240.2h0.6M700.9 251.9h0.6M688.9 229.3h0.6M722.2 233.4h0.6M720.4 242.8h0.6M693.1 231.0h0.6M698.0 253.7h0.6M700.2 251.8h0.6M722.0 221.0h0.6M704.8 232.0h0.6M707.3 233.2h0.6M724.2 221.7h0.6M709.6 251.2h0.6M690.0 236.2h0.6M702.3 254.9h0.6M708.9 229.6h0.6M690.3 247.5h0.6M711.5 251.5h0.6M722.0 249.2h0.6M721.4 238.2h0.6M705.7 243.9h0.6M682.8 229.4h0.6M703.7 250.3h0.6M710.2 235.9h0.6M684.0 241.3h0.6M710.4 240.2h0.6M705.0 252.4h0.6M693.4 228.9h0.6M705.8 231.6h0.6M687.0 225.8h0.6M698.3 250.7h0.6M722.8 228.3h0.6M691.4 247.4h0.6M693.7 233.4h0.6M683.1 241.7h0.6M704.1 250.3h0.6M721.6 234.1h0.6M720.0 233.3h0.6M718.0 231.5h0.6M681.8 256.7h0.6M684.6 239.8h0.6M698.7 224.6h0.6M724.6 223.4h0.6M725.4 251.3h0.6M693.3 239.4h0.6M704.2 243.6h0.6M688.8 243.1h0.6M702.2 254.4h0.6M725.9 225.9h0.6M684.0 243.3h0.6M708.4 240.6h0.6M683.1 254.0h0.6M713.7 248.8h0.6M710.1 256.4h0.6M707.2 225.8h0.6M717.5 254.5h0.6M702.6 224.2h0.6M692.8 245.7h0.6M698.2 232.3h0.6M700.8 243.3h0.6M706.8 238.1h0.6M708.7 220.5h0.6M716.9 237.5h0.6M704.6 253.0h0.6M719.2 219.9h0.6M714.8 221.7h0.6M692.5 239.7h0.6M699.6 254.2h0.6M726.3 244.8h0.6M708.5 256.7h0.6M718.3 256.7h0.6M709.4 233.5h0.6M689.5 244.2h0.6M690.9 223.5h0.6M698.8 245.9h0.6M685.3 236.4h0.6M710.4 251.2h0.6M701.9 232.3h0.6M724.1 254.5h0.6M717.9 248.7h0.6M704.7 256.1h0.6M692.8 247.0h0.6M713.0 235.6h0.6M684.7 249.8h0.6M710.2 252.4h0.6M707.1 228.8h0.6M681.8 242.6h0.6M707.4 251.3h0.6M702.6 225.2h0.6M697.3 251.4h0.6M713.4 237.1h0.6M681.4 249.9h0.6M696.5 223.0h0.6M694.5 236.7h0.6M688.2 256.9h0.6M706.2 233.0h0.6M722.6 256.1h0.6M722.7 232.0h0.6" stroke="#6e6e6e" stroke-width="0.75" clip-path="url(#tc1)"/><path d="M720.0 256.6h0.9M690.2 252.9h0.9M708.6 241.7h0.9M719.0 251.1h0.9M707.0 228.1h0.9M725.3 257.6h0.9M690.3 234.3h0.9M690.9 251.0h0.9M711.9 232.9h0.9M714.1 252.6h0.9M702.4 245.1h0.9M688.0 253.1h0.9M726.6 243.9h0.9M685.1 249.7h0.9M697.1 256.8h0.9M711.5 237.0h0.9M692.1 253.5h0.9M706.7 251.3h0.9M722.9 229.8h0.9M689.6 225.1h0.9M690.1 256.4h0.9M724.5 229.9h0.9M700.8 235.9h0.9M710.9 252.1h0.9M719.1 257.0h0.9M704.0 231.7h0.9M681.6 244.7h0.9M690.0 241.7h0.9M689.2 244.1h0.9M704.1 249.3h0.9M702.1 223.5h0.9M691.5 249.9h0.9M710.2 237.5h0.9M706.6 256.8h0.9M726.1 226.6h0.9M704.5 253.9h0.9M694.8 234.0h0.9M683.1 229.6h0.9M706.2 232.2h0.9M688.3 227.9h0.9M721.8 250.7h0.9M710.9 232.7h0.9M702.7 231.5h0.9M706.2 247.1h0.9M691.3 229.9h0.9M718.3 232.0h0.9M723.8 224.4h0.9M700.3 243.5h0.9M700.5 249.8h0.9M724.4 235.7h0.9M691.2 255.7h0.9M708.1 226.2h0.9M711.1 242.9h0.9M699.3 230.9h0.9M727.0 246.1h0.9M724.0 238.1h0.9M707.9 240.2h0.9M689.1 237.2h0.9M713.8 227.2h0.9M724.3 236.3h0.9M684.1 253.9h0.9M717.5 255.8h0.9M697.2 253.6h0.9M710.6 243.5h0.9M688.3 241.5h0.9M689.2 242.2h0.9M686.9 220.5h0.9M711.1 229.5h0.9M681.7 243.9h0.9M710.2 235.5h0.9M720.5 225.2h0.9M710.8 246.5h0.9M698.8 237.0h0.9M718.7 245.7h0.9M722.5 238.8h0.9M700.9 238.0h0.9M688.7 257.6h0.9M714.4 221.3h0.9M703.4 221.5h0.9M704.8 254.1h0.9M683.1 225.0h0.9M682.1 222.0h0.9M723.7 237.9h0.9M713.0 253.6h0.9M686.5 220.7h0.9M706.6 238.9h0.9M686.0 243.1h0.9M693.4 232.1h0.9M713.4 232.3h0.9M682.4 222.9h0.9M720.1 223.2h0.9M722.2 256.4h0.9M711.3 220.0h0.9M722.1 231.6h0.9M722.0 223.2h0.9M698.5 250.1h0.9" stroke="#b8b8b8" stroke-width="0.75" clip-path="url(#tc1)"/><path d="M693.3 221.8L695.3 220.6L726.8 238.8L724.8 240.0z" fill="#8e8e8e"/><path d="M724.8 240.0L726.8 238.8L726.8 244.8L724.8 246.0z" fill="#5a5a5a"/><path d="M713.8 245.8L724.8 246.0L726.8 244.8L726.8 246.3L715.8 256.3L714.0 256.6z" fill="#767676"/><clipPath id="tc2"><path d="M681.7 228.4L713.2 245.8L714.0 256.6L682.6 242.5z"/></clipPath><path d="M681.7 228.4L713.2 245.8L714.0 256.6L682.6 242.5z" fill="#1e1e1e"/><path d="M694.8 256.7h0.6M706.8 253.7h0.6M718.5 239.0h0.6M725.3 233.4h0.6M685.0 252.9h0.6M698.4 220.2h0.6M701.9 235.2h0.6M723.1 223.0h0.6M717.6 235.3h0.6M691.5 228.4h0.6M686.3 231.5h0.6M708.3 244.1h0.6M715.4 242.7h0.6M683.7 220.4h0.6M727.0 251.1h0.6M713.3 243.0h0.6M715.7 255.1h0.6M716.4 233.1h0.6M685.0 250.9h0.6M688.8 227.4h0.6M726.9 247.0h0.6M685.9 254.0h0.6M698.1 253.4h0.6M724.9 227.5h0.6M716.0 232.0h0.6M721.8 245.5h0.6M687.3 255.8h0.6M683.5 235.7h0.6M723.8 236.3h0.6M694.5 224.7h0.6M709.3 240.5h0.6M689.2 245.5h0.6M714.5 225.8h0.6M714.6 246.8h0.6M686.4 253.0h0.6M701.6 232.5h0.6M726.9 245.8h0.6M705.8 240.7h0.6M698.2 236.1h0.6M707.7 225.7h0.6M712.2 252.0h0.6M708.4 233.7h0.6M689.0 222.0h0.6M707.2 245.3h0.6M690.8 257.4h0.6M695.2 224.0h0.6M705.6 254.8h0.6M683.7 226.5h0.6M724.6 223.6h0.6M708.8 231.9h0.6M718.9 253.0h0.6M705.8 225.8h0.6M702.9 224.4h0.6M708.9 233.4h0.6M705.4 223.7h0.6M686.5 254.7h0.6M696.3 234.1h0.6M705.3 242.4h0.6M705.5 226.0h0.6M700.4 246.4h0.6M726.2 248.0h0.6M714.7 238.0h0.6M701.9 231.5h0.6M686.1 220.6h0.6M684.2 224.9h0.6M697.2 246.0h0.6M709.2 229.4h0.6M717.6 255.9h0.6M687.4 249.9h0.6M703.7 257.7h0.6M681.6 227.9h0.6M690.0 220.7h0.6M712.5 237.8h0.6M703.1 252.0h0.6M709.4 246.7h0.6M702.7 221.7h0.6M697.0 223.5h0.6M696.9 223.8h0.6M726.6 221.3h0.6M700.0 237.6h0.6M701.1 229.6h0.6M683.4 244.6h0.6M713.9 241.6h0.6M715.8 246.9h0.6M704.3 234.4h0.6M708.1 234.4h0.6M714.1 222.0h0.6M688.6 232.8h0.6M694.2 223.9h0.6M703.2 241.7h0.6M694.0 243.2h0.6M706.9 234.7h0.6M688.7 244.4h0.6M700.7 226.0h0.6M723.0 236.2h0.6M688.8 227.7h0.6M722.5 238.5h0.6M718.7 220.4h0.6M695.5 252.3h0.6M721.0 250.9h0.6M683.7 223.0h0.6M710.1 236.4h0.6M699.5 242.0h0.6M694.0 241.1h0.6M722.0 245.7h0.6M705.5 229.3h0.6M710.4 255.9h0.6M709.6 246.0h0.6M687.3 238.7h0.6M685.8 251.0h0.6M685.6 224.3h0.6M709.6 244.4h0.6M712.2 250.3h0.6M722.1 241.6h0.6M720.7 240.9h0.6M708.2 236.8h0.6M719.3 226.9h0.6M704.4 231.4h0.6M687.2 239.6h0.6M723.3 234.0h0.6M692.3 243.9h0.6M690.4 241.8h0.6M711.7 225.0h0.6M684.8 246.1h0.6M697.5 241.2h0.6M697.6 222.5h0.6M684.0 220.2h0.6M716.1 251.2h0.6M687.8 229.9h0.6M687.2 256.9h0.6M687.7 251.3h0.6M681.4 254.1h0.6M725.2 223.2h0.6M714.0 248.6h0.6M719.0 233.7h0.6M682.7 238.5h0.6M726.2 240.9h0.6M725.5 231.1h0.6M697.3 254.1h0.6M708.4 224.7h0.6M696.7 251.8h0.6M697.6 240.7h0.6M689.4 243.1h0.6M692.2 248.9h0.6M695.5 254.1h0.6M717.5 243.9h0.6M685.3 257.2h0.6M686.2 232.5h0.6M707.3 236.8h0.6M696.2 243.2h0.6M705.7 247.6h0.6M694.3 231.3h0.6M709.5 241.3h0.6M684.8 238.2h0.6M717.9 235.5h0.6M687.1 242.1h0.6M706.1 233.6h0.6M691.1 257.5h0.6M702.4 225.4h0.6M706.7 224.6h0.6M718.7 236.1h0.6M694.1 249.1h0.6M725.7 239.7h0.6M688.2 238.4h0.6M694.2 228.9h0.6M696.7 233.7h0.6M692.6 247.8h0.6M698.8 251.0h0.6M689.4 243.0h0.6M681.6 227.2h0.6M697.1 249.5h0.6M693.2 246.7h0.6M718.6 250.1h0.6M726.9 220.9h0.6M684.4 257.2h0.6M695.3 231.8h0.6M721.3 256.3h0.6M707.5 252.3h0.6M686.3 231.3h0.6M684.3 223.1h0.6M702.6 236.8h0.6M714.9 240.5h0.6M722.6 236.8h0.6M687.8 246.3h0.6M720.8 230.5h0.6M704.0 233.3h0.6M682.5 250.0h0.6M681.9 221.2h0.6M705.7 230.4h0.6M693.9 251.3h0.6M725.2 251.1h0.6M708.5 250.2h0.6M707.9 250.7h0.6M695.1 231.2h0.6M692.0 248.5h0.6M696.6 233.3h0.6M725.8 236.8h0.6M710.0 233.5h0.6M713.0 234.1h0.6M721.4 220.3h0.6M694.2 253.2h0.6M724.7 240.1h0.6M720.6 231.4h0.6M716.5 219.8h0.6M697.0 257.0h0.6M720.5 232.9h0.6M711.4 239.4h0.6M684.7 248.6h0.6M723.8 226.5h0.6M695.4 227.6h0.6M718.7 250.6h0.6M715.7 242.9h0.6M688.0 238.8h0.6M701.8 237.4h0.6M725.1 241.7h0.6M718.1 231.4h0.6M718.9 236.8h0.6M724.1 224.4h0.6M688.9 221.6h0.6M716.2 231.0h0.6M714.0 242.7h0.6M722.4 234.4h0.6M690.3 221.2h0.6M723.3 256.5h0.6M707.4 247.3h0.6M683.6 242.4h0.6M714.1 248.0h0.6M688.0 238.2h0.6M691.1 231.8h0.6M700.9 234.4h0.6M708.1 228.4h0.6M708.4 222.9h0.6M700.3 239.8h0.6M696.2 246.8h0.6M691.6 257.2h0.6M685.3 227.0h0.6M724.8 241.8h0.6M726.4 232.7h0.6M689.6 227.4h0.6M725.6 246.5h0.6M700.6 227.1h0.6M708.4 245.6h0.6M689.2 233.7h0.6M683.7 249.3h0.6M726.3 252.3h0.6M716.5 234.7h0.6M691.3 247.3h0.6M689.2 234.4h0.6M701.1 243.2h0.6M701.3 248.1h0.6M725.0 238.9h0.6M695.2 251.4h0.6M721.0 231.9h0.6M699.4 228.4h0.6M722.4 232.0h0.6M702.6 228.0h0.6M711.9 253.8h0.6M682.0 227.8h0.6M690.2 222.3h0.6M699.5 254.3h0.6M687.4 240.1h0.6M707.0 234.1h0.6M683.0 234.2h0.6M698.5 254.0h0.6M704.0 251.1h0.6M686.6 223.9h0.6M713.3 233.6h0.6M704.0 226.8h0.6M709.3 225.4h0.6M692.4 255.8h0.6M704.5 228.3h0.6M710.8 244.7h0.6M707.5 257.7h0.6M713.2 248.5h0.6M723.1 228.7h0.6M725.3 225.3h0.6M696.0 254.5h0.6M722.6 227.4h0.6M691.7 239.4h0.6M686.4 255.2h0.6M710.8 234.6h0.6M685.3 244.4h0.6M685.0 245.7h0.6M718.8 251.0h0.6M721.2 224.9h0.6M723.2 234.7h0.6M694.6 227.3h0.6M715.5 224.9h0.6M684.6 228.0h0.6M702.4 256.9h0.6M704.6 225.4h0.6M682.4 234.5h0.6M686.3 242.5h0.6M710.7 237.1h0.6M696.8 229.8h0.6M692.2 236.1h0.6M685.1 242.9h0.6M704.5 252.2h0.6M703.2 246.7h0.6M694.3 230.4h0.6M690.6 251.9h0.6M695.4 227.4h0.6M714.8 229.9h0.6M684.0 226.5h0.6M697.4 234.3h0.6M686.9 224.1h0.6M718.1 237.8h0.6M696.8 239.8h0.6M709.6 241.3h0.6M683.4 219.8h0.6M727.0 224.4h0.6M692.7 222.8h0.6M710.7 234.1h0.6M700.1 231.0h0.6M692.5 245.9h0.6M698.6 252.3h0.6M714.5 240.5h0.6M704.6 237.8h0.6M693.4 244.3h0.6M701.5 226.1h0.6M717.6 232.5h0.6M690.3 256.0h0.6M715.7 255.3h0.6M716.2 238.8h0.6M715.7 222.0h0.6M727.2 236.7h0.6M682.3 241.1h0.6M720.6 245.8h0.6M704.0 237.7h0.6M701.0 245.7h0.6M684.5 220.6h0.6M721.2 225.4h0.6M716.0 236.9h0.6M686.1 249.2h0.6M714.9 228.7h0.6M725.1 229.6h0.6M701.1 248.6h0.6M710.8 239.0h0.6M711.5 227.1h0.6M726.7 224.8h0.6M683.8 240.7h0.6M692.5 227.6h0.6M714.3 257.6h0.6M704.8 237.5h0.6M697.7 251.7h0.6M702.4 252.2h0.6M714.8 241.2h0.6M709.9 234.4h0.6M705.0 230.8h0.6M683.2 228.3h0.6M695.8 224.6h0.6M715.3 222.2h0.6M703.1 234.4h0.6M698.4 248.6h0.6M687.5 246.1h0.6M703.9 230.3h0.6M711.2 224.8h0.6M687.8 237.6h0.6M686.4 256.6h0.6M687.4 254.5h0.6M699.6 247.3h0.6M711.9 244.7h0.6M711.4 229.7h0.6M715.9 233.7h0.6M700.6 224.8h0.6M694.2 240.7h0.6M698.8 223.9h0.6M689.4 233.8h0.6M698.2 225.5h0.6M724.7 253.2h0.6M712.6 232.7h0.6M715.7 225.9h0.6M726.8 222.1h0.6M710.1 225.4h0.6M720.9 230.1h0.6M686.4 233.0h0.6M699.3 242.5h0.6M723.2 257.5h0.6M690.8 253.5h0.6M686.1 220.7h0.6M715.7 226.3h0.6M715.0 220.2h0.6M695.9 249.5h0.6M720.5 228.6h0.6M718.4 247.9h0.6M727.1 220.8h0.6M724.0 252.8h0.6M716.6 236.1h0.6M704.9 257.7h0.6M693.9 239.4h0.6M695.4 221.0h0.6M691.5 227.2h0.6M700.9 244.4h0.6M726.6 247.8h0.6M712.4 253.0h0.6M726.9 232.9h0.6" stroke="#6e6e6e" stroke-width="0.75" clip-path="url(#tc2)"/><path d="M708.0 253.5h0.9M688.4 222.1h0.9M695.1 220.2h0.9M709.7 243.2h0.9M720.6 256.2h0.9M718.3 226.3h0.9M718.5 224.8h0.9M724.2 238.5h0.9M692.1 220.1h0.9M726.6 239.5h0.9M710.0 240.3h0.9M718.6 239.9h0.9M709.0 256.3h0.9M716.3 240.2h0.9M685.0 221.6h0.9M688.4 246.1h0.9M725.2 221.1h0.9M711.3 255.9h0.9M689.8 221.7h0.9M715.9 247.9h0.9M705.9 246.5h0.9M724.6 243.1h0.9M710.9 220.7h0.9M721.5 237.6h0.9M683.0 236.0h0.9M718.0 227.2h0.9M704.4 233.9h0.9M687.7 246.0h0.9M716.3 245.9h0.9M704.4 255.7h0.9M725.0 250.6h0.9M722.5 234.6h0.9M718.7 222.4h0.9M721.4 248.4h0.9M685.2 249.5h0.9M696.5 243.9h0.9M697.1 255.6h0.9M683.6 221.1h0.9M724.6 228.6h0.9M707.6 234.7h0.9M694.4 222.4h0.9M685.1 220.1h0.9M718.5 237.3h0.9M719.7 227.9h0.9M719.0 225.6h0.9M719.6 235.1h0.9M714.4 249.4h0.9M712.0 227.5h0.9M698.8 244.7h0.9M685.3 255.6h0.9M726.6 229.0h0.9M695.3 223.6h0.9M683.1 225.1h0.9M706.5 257.6h0.9M691.0 248.6h0.9M684.8 223.8h0.9M691.6 249.5h0.9M722.9 250.6h0.9M720.4 245.4h0.9M697.2 255.9h0.9M684.0 227.7h0.9M689.1 241.4h0.9M719.1 252.8h0.9M714.0 257.5h0.9M709.4 236.0h0.9M698.8 226.9h0.9M715.6 244.2h0.9M722.5 232.0h0.9M701.7 221.0h0.9M704.6 245.4h0.9M693.4 250.9h0.9M702.9 255.9h0.9M694.0 250.4h0.9M700.9 240.5h0.9M726.0 232.1h0.9M686.6 246.3h0.9M688.3 238.8h0.9M692.9 241.7h0.9M723.9 236.6h0.9M685.0 251.9h0.9M689.2 235.9h0.9M704.0 253.9h0.9M695.7 236.3h0.9M706.3 227.2h0.9M686.0 220.5h0.9M684.2 222.5h0.9M688.7 248.0h0.9M706.3 250.3h0.9M681.3 247.6h0.9M682.0 245.8h0.9M693.6 250.9h0.9M698.0 245.0h0.9M700.8 234.2h0.9M724.2 241.6h0.9M711.6 253.5h0.9M706.9 220.7h0.9M700.0 244.6h0.9M710.4 240.4h0.9M702.2 225.9h0.9M696.9 228.4h0.9M699.3 231.0h0.9M713.1 230.0h0.9M704.9 245.2h0.9M695.0 233.4h0.9M726.6 254.0h0.9M683.1 245.1h0.9M703.9 233.9h0.9M724.9 243.4h0.9M722.2 246.3h0.9M703.4 246.9h0.9M720.1 239.1h0.9M724.1 244.9h0.9M715.2 246.3h0.9M685.9 242.7h0.9M720.0 221.8h0.9M718.9 237.3h0.9M709.6 250.5h0.9M712.3 235.2h0.9M694.4 248.3h0.9M695.6 253.7h0.9M682.5 223.8h0.9M702.3 238.2h0.9M689.6 223.8h0.9M723.6 243.2h0.9M698.3 253.5h0.9M726.8 232.5h0.9M696.1 228.4h0.9M687.7 234.6h0.9M685.8 249.3h0.9M704.5 226.7h0.9M688.9 245.0h0.9M708.4 228.4h0.9" stroke="#b8b8b8" stroke-width="0.75" clip-path="url(#tc2)"/><path d="M681.7 228.4L683.7 227.2L715.2 244.6L713.2 245.8z" fill="#8a8a8a"/><path d="M713.2 245.8L715.2 244.6L715.8 255.3L714.0 256.6z" fill="#555"/>
<clipPath id="tc3"><path d="M545.5 284.5L577.0 302.7L577.0 310.5L545.5 294.5z"/></clipPath><path d="M545.5 284.5L577.0 302.7L577.0 310.5L545.5 294.5z" fill="#232323"/><path d="M538.0 310.7h0.6M567.7 306.4h0.6M533.9 290.0h0.6M574.0 304.4h0.6M547.5 304.5h0.6M560.1 287.6h0.6M570.5 302.7h0.6M575.9 283.1h0.6M554.8 314.5h0.6M550.1 306.7h0.6M546.3 307.8h0.6M559.0 287.0h0.6M545.4 291.5h0.6M539.3 302.2h0.6M574.0 301.0h0.6M562.6 289.2h0.6M551.1 283.8h0.6M538.8 304.3h0.6M534.6 286.2h0.6M550.5 316.8h0.6M565.9 284.5h0.6M533.7 287.6h0.6M536.9 287.0h0.6M546.9 303.6h0.6M571.8 305.7h0.6M558.3 293.3h0.6M555.3 284.7h0.6M557.8 299.5h0.6M579.1 317.4h0.6M565.3 289.0h0.6M539.1 307.9h0.6M572.6 308.1h0.6M546.5 305.4h0.6M542.8 306.4h0.6M565.4 298.1h0.6M565.1 296.3h0.6M548.5 313.9h0.6M545.8 305.2h0.6M547.2 283.5h0.6M560.4 304.9h0.6M538.6 301.1h0.6M570.1 303.8h0.6M577.4 299.3h0.6M573.5 294.7h0.6M574.4 319.5h0.6M567.2 305.7h0.6M534.3 318.9h0.6M561.6 300.0h0.6M558.4 305.1h0.6M539.8 283.4h0.6M546.1 286.2h0.6M546.5 282.8h0.6M533.6 294.0h0.6M546.3 292.2h0.6M543.1 283.0h0.6M534.8 303.2h0.6M571.2 312.9h0.6M544.6 286.8h0.6M556.4 298.4h0.6M576.4 314.3h0.6M545.8 317.8h0.6M575.3 299.2h0.6M557.3 308.0h0.6M539.2 292.7h0.6M562.9 305.1h0.6M566.6 288.1h0.6M562.9 309.5h0.6M577.4 315.2h0.6M541.2 314.9h0.6M559.1 305.1h0.6M579.4 315.2h0.6M544.9 308.8h0.6M554.6 299.4h0.6M545.6 283.3h0.6M565.7 305.9h0.6M569.9 304.5h0.6M551.9 315.7h0.6M563.4 312.9h0.6M554.8 282.7h0.6M578.6 294.1h0.6M573.9 288.2h0.6M534.1 304.2h0.6M561.9 295.6h0.6M575.9 306.1h0.6M535.5 305.0h0.6M569.5 297.0h0.6M538.4 288.6h0.6M568.5 289.6h0.6M578.8 317.8h0.6M549.1 306.7h0.6M537.3 315.1h0.6M578.6 305.8h0.6M547.7 318.2h0.6M554.6 297.4h0.6M578.0 288.1h0.6M568.5 284.4h0.6M543.5 302.0h0.6M554.2 296.3h0.6M565.1 285.6h0.6M565.5 319.2h0.6M548.6 288.8h0.6M558.7 308.3h0.6M541.4 293.0h0.6M540.8 306.4h0.6M538.3 314.0h0.6M547.1 295.0h0.6M561.1 317.3h0.6M572.7 306.8h0.6M536.9 307.9h0.6M546.8 286.8h0.6M546.6 303.0h0.6M565.8 305.1h0.6M573.2 319.1h0.6M560.6 315.9h0.6M550.5 285.5h0.6M541.5 310.4h0.6M549.5 308.1h0.6M538.3 300.1h0.6M573.0 314.2h0.6M563.9 297.0h0.6M538.9 319.7h0.6M539.4 285.5h0.6M559.6 302.7h0.6M562.9 284.5h0.6M570.2 293.9h0.6M542.4 293.9h0.6M536.3 306.2h0.6M544.5 297.1h0.6M575.2 289.5h0.6M544.8 291.2h0.6M567.2 294.2h0.6M569.6 306.2h0.6M571.5 316.6h0.6M574.3 299.6h0.6M568.8 290.0h0.6M542.7 313.3h0.6M555.7 305.7h0.6M555.2 284.4h0.6M555.3 288.8h0.6M574.5 295.0h0.6M578.6 299.0h0.6M555.7 296.1h0.6M547.3 304.6h0.6M544.0 302.1h0.6M538.3 303.9h0.6M563.8 310.2h0.6M539.6 313.3h0.6M535.9 313.0h0.6M553.0 316.2h0.6M577.4 289.2h0.6M534.0 300.1h0.6M541.9 283.6h0.6M572.8 305.0h0.6M566.1 315.5h0.6M534.5 306.8h0.6M558.9 298.0h0.6M548.4 307.3h0.6M536.3 299.1h0.6M536.2 294.1h0.6M542.4 306.6h0.6M542.2 291.1h0.6M554.1 307.2h0.6M560.9 319.3h0.6M560.0 300.3h0.6M535.0 305.9h0.6M556.9 306.0h0.6M572.2 288.6h0.6M557.5 305.6h0.6M555.0 293.5h0.6M547.6 283.6h0.6M554.8 308.0h0.6M554.3 283.5h0.6M556.7 305.6h0.6M576.3 317.7h0.6M568.1 295.8h0.6M576.2 309.7h0.6M534.7 315.6h0.6M539.4 304.5h0.6M559.3 319.4h0.6M559.8 286.9h0.6M571.5 290.1h0.6M555.8 310.2h0.6M553.0 313.9h0.6M572.8 316.6h0.6M547.3 308.1h0.6M559.0 298.0h0.6M554.7 306.7h0.6M571.3 316.6h0.6M558.6 302.3h0.6M555.0 287.4h0.6M572.6 305.6h0.6M564.6 301.7h0.6M537.8 302.2h0.6M563.0 298.4h0.6M554.2 298.2h0.6M562.5 292.5h0.6M546.7 301.4h0.6M554.4 286.2h0.6M550.9 288.9h0.6M541.9 299.7h0.6M536.9 295.6h0.6M552.7 289.0h0.6M541.0 317.8h0.6M543.3 301.8h0.6M540.0 286.4h0.6M546.2 308.7h0.6M555.8 296.9h0.6M557.6 308.6h0.6M550.7 307.4h0.6M579.1 287.6h0.6M559.8 315.4h0.6M535.1 296.6h0.6M558.9 294.8h0.6M546.3 303.7h0.6M548.9 288.1h0.6M534.1 315.9h0.6M579.3 285.6h0.6M552.1 294.4h0.6M572.1 287.3h0.6M569.3 295.5h0.6M555.6 290.1h0.6M545.3 311.5h0.6M535.9 311.9h0.6M555.2 305.3h0.6M546.0 290.5h0.6M540.9 288.5h0.6M567.4 292.1h0.6M561.8 317.6h0.6M576.5 294.9h0.6M571.4 306.4h0.6M566.3 314.9h0.6M578.1 301.9h0.6M543.6 291.8h0.6M547.5 305.0h0.6M571.2 310.1h0.6M574.1 301.6h0.6M549.6 284.4h0.6M561.8 303.3h0.6M539.0 306.8h0.6M554.3 296.5h0.6M550.5 313.5h0.6M565.9 284.5h0.6M572.3 319.0h0.6M576.9 305.8h0.6M546.6 320.2h0.6M534.6 296.3h0.6M569.6 297.8h0.6M537.3 310.6h0.6M551.0 306.2h0.6M540.7 309.1h0.6M548.9 305.7h0.6M543.5 285.7h0.6M544.5 312.6h0.6M548.2 289.4h0.6M561.4 309.8h0.6M539.4 286.7h0.6M573.0 291.7h0.6M577.8 286.3h0.6M577.5 289.4h0.6M561.0 287.9h0.6M558.6 283.8h0.6M557.8 282.6h0.6M563.3 306.2h0.6M557.5 304.3h0.6M560.8 312.4h0.6M537.0 285.9h0.6M574.8 291.2h0.6M536.8 302.3h0.6M545.6 302.0h0.6M561.0 306.1h0.6M543.7 303.1h0.6M577.7 319.2h0.6M547.3 284.9h0.6M561.2 291.3h0.6M539.6 313.9h0.6M536.1 312.6h0.6M545.6 292.9h0.6M552.8 286.3h0.6M579.4 303.3h0.6M574.6 309.8h0.6M559.1 318.3h0.6M541.7 294.8h0.6M576.2 296.5h0.6M563.7 286.8h0.6M567.3 302.7h0.6M558.1 306.1h0.6M549.5 288.2h0.6M572.6 284.0h0.6" stroke="#6e6e6e" stroke-width="0.75" clip-path="url(#tc3)"/><path d="M534.2 288.0h0.9M577.4 282.6h0.9M576.2 310.0h0.9M542.4 316.5h0.9M573.4 300.9h0.9M574.8 308.7h0.9M575.8 296.5h0.9M571.4 295.9h0.9M539.0 305.5h0.9M544.1 291.0h0.9M559.0 316.2h0.9M566.9 301.3h0.9M553.4 296.9h0.9M578.5 297.6h0.9M556.5 293.3h0.9M576.1 299.1h0.9M556.9 314.2h0.9M576.0 295.7h0.9M555.5 300.2h0.9M561.1 298.3h0.9M537.3 291.4h0.9M561.8 292.3h0.9M569.7 287.1h0.9M533.9 297.5h0.9M556.8 318.3h0.9M546.6 287.4h0.9M566.8 312.0h0.9M577.6 313.0h0.9M563.1 305.9h0.9M555.7 288.6h0.9M533.7 319.5h0.9M577.1 310.7h0.9M562.1 314.1h0.9M558.7 308.8h0.9M539.8 299.9h0.9M545.4 299.7h0.9M574.6 311.1h0.9M573.5 282.9h0.9M565.6 285.5h0.9M544.6 314.0h0.9M578.9 301.5h0.9M533.7 310.1h0.9M544.9 296.9h0.9M576.9 298.5h0.9M542.9 289.0h0.9M574.8 298.2h0.9M554.7 301.5h0.9M576.4 302.8h0.9M560.5 293.5h0.9M558.0 299.9h0.9M551.1 314.4h0.9M535.2 292.7h0.9M578.3 309.5h0.9M541.9 317.6h0.9M555.8 314.9h0.9M548.3 287.1h0.9M564.7 298.5h0.9M540.4 294.5h0.9M553.8 283.7h0.9M534.9 294.3h0.9M573.6 301.7h0.9M545.9 283.5h0.9M575.7 306.7h0.9M555.7 297.3h0.9M578.9 312.9h0.9M565.8 303.1h0.9M541.0 301.9h0.9M554.7 294.1h0.9M536.9 309.2h0.9M538.7 296.5h0.9M538.4 297.9h0.9M559.7 304.1h0.9M571.8 291.5h0.9M571.7 290.0h0.9M573.2 313.4h0.9M542.3 298.8h0.9M544.9 320.0h0.9M565.5 291.4h0.9M573.1 317.9h0.9M560.3 294.6h0.9M559.1 294.1h0.9M566.0 300.5h0.9M535.1 315.0h0.9M548.5 314.7h0.9M573.1 311.5h0.9M556.6 302.7h0.9M546.0 282.7h0.9M572.1 305.4h0.9M542.2 305.5h0.9M562.4 302.4h0.9M539.1 310.6h0.9M537.1 282.7h0.9M556.2 289.4h0.9M558.3 290.7h0.9M558.4 290.3h0.9M552.0 307.9h0.9" stroke="#b8b8b8" stroke-width="0.75" clip-path="url(#tc3)"/><path d="M545.5 284.5L547.5 283.3L579.0 301.5L577.0 302.7z" fill="#8e8e8e"/><path d="M577.0 302.7L579.0 301.5L579.0 307.5L577.0 308.7z" fill="#5a5a5a"/><path d="M566.0 308.5L577.0 308.7L579.0 307.5L579.0 309.0L568.0 319.0L566.2 319.3z" fill="#767676"/><clipPath id="tc4"><path d="M533.9 291.1L565.4 308.5L566.2 319.3L534.8 305.2z"/></clipPath><path d="M533.9 291.1L565.4 308.5L566.2 319.3L534.8 305.2z" fill="#1e1e1e"/><path d="M541.5 289.0h0.6M541.7 310.6h0.6M536.0 320.0h0.6M579.2 307.9h0.6M545.8 310.3h0.6M553.4 310.5h0.6M578.5 296.2h0.6M565.1 309.0h0.6M548.7 292.9h0.6M568.3 299.5h0.6M557.9 297.9h0.6M578.4 317.8h0.6M538.0 295.0h0.6M544.2 285.5h0.6M568.7 305.2h0.6M560.2 311.3h0.6M545.8 295.5h0.6M567.4 297.2h0.6M571.5 306.1h0.6M556.6 293.0h0.6M535.8 296.9h0.6M558.1 318.2h0.6M535.8 303.8h0.6M547.3 283.9h0.6M537.5 295.9h0.6M565.6 306.2h0.6M570.7 312.1h0.6M555.8 297.2h0.6M549.3 319.5h0.6M550.9 310.3h0.6M558.0 305.9h0.6M541.5 295.6h0.6M575.7 302.1h0.6M543.9 305.2h0.6M571.5 290.9h0.6M546.0 297.8h0.6M572.1 285.1h0.6M559.0 282.8h0.6M543.8 298.3h0.6M563.0 315.6h0.6M565.7 290.5h0.6M555.6 298.4h0.6M548.1 304.6h0.6M555.4 303.7h0.6M568.4 291.2h0.6M568.0 296.2h0.6M554.9 290.7h0.6M573.1 319.2h0.6M556.4 314.0h0.6M542.7 303.1h0.6M554.7 309.1h0.6M576.4 283.5h0.6M573.5 294.8h0.6M569.9 309.6h0.6M568.6 305.2h0.6M542.3 300.4h0.6M534.5 306.5h0.6M576.0 287.8h0.6M542.5 289.4h0.6M541.3 316.2h0.6M533.9 314.7h0.6M568.4 292.2h0.6M573.9 290.0h0.6M539.8 304.7h0.6M573.3 294.2h0.6M573.9 299.1h0.6M565.3 291.9h0.6M541.8 295.3h0.6M542.1 318.6h0.6M577.2 289.5h0.6M547.8 316.7h0.6M562.9 308.4h0.6M547.7 291.1h0.6M553.2 283.0h0.6M546.0 297.6h0.6M543.0 314.8h0.6M572.0 297.0h0.6M557.8 320.4h0.6M540.7 293.8h0.6M547.0 285.2h0.6M553.1 285.8h0.6M566.5 297.1h0.6M551.2 311.0h0.6M539.2 292.3h0.6M560.1 318.0h0.6M579.3 298.1h0.6M542.7 313.3h0.6M569.4 311.7h0.6M536.9 298.8h0.6M570.6 315.7h0.6M563.7 301.3h0.6M573.0 312.0h0.6M552.3 298.8h0.6M539.9 290.9h0.6M578.7 299.5h0.6M551.6 305.1h0.6M565.0 311.4h0.6M562.0 283.0h0.6M538.1 316.4h0.6M572.3 311.5h0.6M577.5 305.5h0.6M564.1 313.3h0.6M543.4 313.0h0.6M579.0 301.5h0.6M560.8 291.8h0.6M543.8 296.8h0.6M540.2 308.6h0.6M577.2 320.1h0.6M555.4 304.2h0.6M575.3 315.6h0.6M547.5 307.1h0.6M562.6 310.7h0.6M536.8 300.0h0.6M565.4 314.9h0.6M538.4 283.9h0.6M573.0 286.8h0.6M543.4 313.3h0.6M561.8 296.0h0.6M538.5 294.4h0.6M575.1 309.2h0.6M564.5 300.5h0.6M540.4 311.6h0.6M550.4 308.6h0.6M544.7 295.9h0.6M576.1 316.5h0.6M545.4 317.8h0.6M563.5 289.3h0.6M556.2 296.0h0.6M555.8 299.8h0.6M570.0 285.7h0.6M577.2 299.0h0.6M548.1 313.2h0.6M560.8 285.2h0.6M565.6 304.8h0.6M554.8 309.9h0.6M552.5 309.8h0.6M554.1 315.5h0.6M549.6 308.5h0.6M546.8 317.7h0.6M551.8 310.3h0.6M536.5 320.4h0.6M545.1 283.6h0.6M547.8 304.7h0.6M543.7 317.8h0.6M551.6 283.0h0.6M536.4 289.0h0.6M564.7 312.1h0.6M575.0 316.8h0.6M553.8 305.6h0.6M556.7 304.0h0.6M537.3 310.5h0.6M544.0 316.0h0.6M542.6 309.1h0.6M560.2 315.8h0.6M544.1 287.5h0.6M540.5 288.2h0.6M573.9 300.8h0.6M563.7 312.0h0.6M574.2 310.7h0.6M543.4 319.2h0.6M553.5 319.9h0.6M566.4 298.9h0.6M551.6 287.8h0.6M559.2 307.4h0.6M538.1 313.5h0.6M569.4 316.1h0.6M555.9 302.5h0.6M578.1 305.5h0.6M572.2 297.2h0.6M561.2 306.1h0.6M560.1 300.3h0.6M570.4 308.1h0.6M558.4 294.0h0.6M562.0 310.3h0.6M538.1 302.9h0.6M577.4 315.6h0.6M557.0 302.9h0.6M534.6 293.6h0.6M546.4 296.3h0.6M551.6 308.9h0.6M561.3 305.6h0.6M540.0 320.1h0.6M549.3 319.0h0.6M576.8 293.8h0.6M553.6 292.8h0.6M561.4 283.1h0.6M564.5 306.2h0.6M572.0 315.4h0.6M556.6 300.8h0.6M575.4 303.8h0.6M573.8 303.1h0.6M539.5 292.6h0.6M533.9 295.9h0.6M536.5 308.0h0.6M562.6 313.1h0.6M555.7 300.1h0.6M575.8 306.9h0.6M574.5 315.1h0.6M566.3 292.7h0.6M563.7 316.6h0.6M569.0 286.5h0.6M551.5 315.0h0.6M570.8 309.4h0.6M536.8 286.7h0.6M534.3 304.1h0.6M543.1 312.6h0.6M543.6 289.1h0.6M544.8 302.1h0.6M552.1 284.6h0.6M563.1 284.7h0.6M540.9 317.8h0.6M574.3 288.3h0.6M552.4 285.8h0.6M542.5 301.6h0.6M559.3 297.1h0.6M550.7 310.0h0.6M553.9 292.6h0.6M546.7 319.9h0.6M536.3 285.0h0.6M546.4 303.9h0.6M535.4 315.7h0.6M535.9 310.9h0.6M574.8 297.7h0.6M559.3 308.5h0.6M552.3 304.6h0.6M538.9 308.8h0.6M557.5 297.3h0.6M562.1 284.5h0.6M569.6 288.8h0.6M578.2 286.4h0.6M546.6 294.1h0.6M538.0 296.9h0.6M551.1 284.8h0.6M535.5 284.8h0.6M551.2 292.2h0.6M554.0 311.4h0.6M568.8 293.7h0.6M578.9 310.0h0.6M552.6 309.3h0.6M550.6 306.2h0.6M543.2 308.1h0.6M553.8 289.8h0.6M553.1 308.9h0.6M572.2 307.9h0.6M539.7 290.6h0.6M564.6 316.4h0.6M568.3 293.1h0.6M539.4 319.4h0.6M556.9 304.5h0.6M557.9 304.4h0.6M559.2 292.7h0.6M537.3 310.5h0.6M545.1 315.5h0.6M579.5 317.2h0.6M565.9 302.4h0.6M542.3 291.2h0.6M564.3 297.6h0.6M535.5 319.9h0.6M560.4 315.0h0.6M547.4 293.4h0.6M567.5 300.9h0.6M552.6 305.4h0.6M543.7 283.7h0.6M550.8 291.8h0.6M554.3 304.2h0.6M553.2 319.7h0.6M573.1 312.6h0.6M540.7 304.2h0.6M539.4 290.9h0.6M542.9 312.9h0.6M552.2 316.2h0.6M574.2 299.8h0.6M535.9 286.1h0.6M541.8 304.3h0.6M545.7 285.8h0.6M538.8 309.8h0.6M563.6 318.8h0.6M573.9 301.9h0.6M535.3 298.9h0.6M555.1 311.6h0.6M544.8 305.8h0.6M568.7 311.1h0.6M544.6 316.7h0.6M556.7 301.0h0.6M578.9 287.8h0.6M574.6 283.3h0.6M569.9 316.5h0.6M544.0 283.5h0.6M540.8 283.7h0.6M577.4 312.0h0.6M541.2 314.8h0.6M573.0 316.7h0.6M574.1 317.5h0.6M536.7 306.4h0.6M561.3 292.5h0.6M537.0 300.5h0.6M540.8 319.7h0.6M539.9 291.8h0.6M577.9 283.7h0.6M570.1 293.0h0.6M567.0 313.3h0.6M539.5 284.7h0.6M577.6 307.1h0.6M536.0 293.0h0.6M551.8 317.6h0.6M578.8 319.3h0.6M573.1 297.2h0.6M571.0 312.7h0.6M571.5 309.9h0.6M573.1 311.3h0.6M547.6 305.2h0.6M540.1 294.2h0.6M554.1 292.7h0.6M553.6 316.2h0.6M579.1 314.2h0.6M550.0 314.2h0.6M550.0 311.2h0.6M557.3 295.1h0.6M544.2 303.4h0.6M563.1 287.0h0.6M541.2 290.3h0.6M545.5 294.0h0.6M564.5 284.5h0.6M563.9 292.6h0.6M569.3 284.7h0.6M552.7 314.1h0.6M578.2 302.7h0.6M571.7 295.6h0.6M562.9 287.0h0.6M551.3 301.4h0.6M566.2 293.5h0.6M577.7 285.9h0.6M575.9 300.1h0.6M554.4 291.7h0.6M542.3 294.4h0.6M579.2 301.2h0.6M534.4 285.7h0.6M565.9 309.4h0.6M537.6 283.0h0.6M546.4 284.8h0.6M551.4 298.4h0.6M557.4 320.1h0.6M564.0 290.6h0.6M576.2 304.2h0.6M570.6 296.1h0.6M542.4 319.1h0.6M562.9 284.8h0.6M553.5 317.8h0.6M551.8 308.8h0.6M554.7 317.8h0.6M558.4 310.2h0.6M543.4 296.7h0.6M552.7 298.0h0.6M556.0 289.4h0.6M572.2 289.1h0.6M549.5 300.6h0.6M536.9 316.5h0.6M555.6 314.9h0.6M536.5 315.9h0.6M544.8 285.8h0.6M546.8 294.9h0.6M577.1 285.8h0.6M558.0 300.2h0.6M552.4 308.3h0.6M562.0 287.4h0.6M544.3 306.9h0.6M567.7 288.7h0.6M543.3 286.4h0.6M555.4 306.8h0.6M572.1 320.1h0.6M564.3 301.1h0.6M560.3 318.9h0.6M572.0 319.6h0.6M568.8 290.3h0.6M538.9 298.3h0.6M554.5 294.3h0.6M577.2 295.1h0.6M566.6 299.6h0.6M577.7 286.5h0.6M563.4 318.1h0.6M573.3 296.3h0.6M544.3 291.6h0.6M539.0 301.4h0.6M567.4 303.9h0.6M553.4 304.5h0.6M564.9 316.5h0.6M573.4 317.5h0.6M571.5 320.0h0.6M546.7 304.5h0.6M577.2 293.3h0.6M578.1 312.4h0.6M552.5 312.7h0.6M558.9 291.4h0.6M550.1 306.8h0.6M560.2 319.7h0.6M557.5 286.4h0.6" stroke="#6e6e6e" stroke-width="0.75" clip-path="url(#tc4)"/><path d="M554.9 282.9h0.9M565.3 306.0h0.9M542.8 319.1h0.9M546.6 286.8h0.9M538.4 315.2h0.9M545.4 299.0h0.9M536.6 299.6h0.9M560.5 312.3h0.9M537.4 305.0h0.9M557.2 301.9h0.9M572.6 294.0h0.9M542.3 305.5h0.9M550.1 295.6h0.9M564.4 295.6h0.9M550.0 307.9h0.9M567.2 304.6h0.9M537.7 282.6h0.9M570.3 301.3h0.9M546.9 309.8h0.9M548.5 287.7h0.9M562.2 301.3h0.9M550.6 301.3h0.9M572.8 314.3h0.9M552.5 298.8h0.9M535.0 314.4h0.9M572.5 298.1h0.9M578.9 310.7h0.9M539.9 302.9h0.9M569.3 309.3h0.9M538.6 285.5h0.9M541.7 319.3h0.9M538.4 283.8h0.9M545.9 284.1h0.9M545.5 313.8h0.9M550.9 282.5h0.9M543.0 314.3h0.9M544.4 318.2h0.9M551.8 300.3h0.9M562.3 286.9h0.9M550.1 303.1h0.9M537.7 291.6h0.9M541.1 313.7h0.9M560.5 296.5h0.9M570.3 299.6h0.9M578.6 295.6h0.9M562.7 295.6h0.9M552.6 311.6h0.9M546.8 311.3h0.9M558.2 300.8h0.9M559.2 318.5h0.9M536.5 310.6h0.9M574.8 298.9h0.9M563.8 284.9h0.9M536.9 307.4h0.9M557.2 310.9h0.9M558.1 308.2h0.9M559.4 319.9h0.9M564.5 291.0h0.9M575.5 291.9h0.9M577.1 318.4h0.9M565.8 299.5h0.9M549.6 304.8h0.9M541.6 310.5h0.9M537.5 292.5h0.9M574.0 313.6h0.9M533.9 315.7h0.9M563.4 308.0h0.9M548.8 313.5h0.9M565.5 282.6h0.9M555.8 304.2h0.9M567.0 312.8h0.9M564.1 315.5h0.9M543.7 320.2h0.9M552.2 318.9h0.9M565.0 282.9h0.9M542.7 285.0h0.9M541.0 287.0h0.9M547.5 314.1h0.9M560.8 299.9h0.9M547.7 300.7h0.9M579.4 300.0h0.9M557.9 313.7h0.9M556.1 312.3h0.9M546.1 291.2h0.9M557.7 293.1h0.9M552.6 318.6h0.9M555.8 306.4h0.9M554.5 290.1h0.9M560.5 305.6h0.9M545.8 294.9h0.9M538.8 287.2h0.9M578.1 314.8h0.9M561.1 307.5h0.9M567.1 287.9h0.9M564.3 297.9h0.9M575.5 282.9h0.9M538.8 311.1h0.9M536.8 283.4h0.9M533.7 288.3h0.9M535.1 297.4h0.9M564.7 294.6h0.9M567.9 314.0h0.9M577.1 294.4h0.9M534.4 302.0h0.9M545.8 303.1h0.9M554.7 300.3h0.9M534.5 301.5h0.9M552.5 302.7h0.9M559.3 318.8h0.9M538.4 306.6h0.9M570.3 317.7h0.9M561.2 303.2h0.9M564.0 283.3h0.9M555.4 300.7h0.9M534.8 318.8h0.9M578.1 317.0h0.9M565.5 308.2h0.9M557.9 309.8h0.9M564.4 310.5h0.9M550.3 290.3h0.9M570.3 300.4h0.9M545.2 284.9h0.9M562.1 303.6h0.9M538.7 298.8h0.9M571.3 319.7h0.9M539.4 313.2h0.9M543.5 312.1h0.9M558.4 309.2h0.9M551.9 292.0h0.9M577.0 301.0h0.9M553.1 317.9h0.9M574.7 310.9h0.9" stroke="#b8b8b8" stroke-width="0.75" clip-path="url(#tc4)"/><path d="M533.9 291.1L535.9 289.9L567.4 307.3L565.4 308.5z" fill="#8a8a8a"/><path d="M565.4 308.5L567.4 307.3L568.0 318.0L566.2 319.3z" fill="#555"/>
<clipPath id="tc5"><path d="M607.3 286.0L623.2 292.8L623.2 309.8L607.3 303.0z"/></clipPath><path d="M607.3 286.0L623.2 292.8L623.2 309.8L607.3 303.0z" fill="#232323"/><path d="M600.7 313.8h0.6M604.7 299.8h0.6M593.9 308.4h0.6M594.7 320.8h0.6M594.2 320.4h0.6M588.0 299.3h0.6M607.2 320.0h0.6M619.5 293.7h0.6M610.6 316.2h0.6M591.3 314.5h0.6M618.1 320.5h0.6M593.2 311.3h0.6M603.2 320.2h0.6M616.3 281.7h0.6M623.6 314.8h0.6M595.9 320.5h0.6M590.8 319.6h0.6M609.0 282.0h0.6M618.1 294.0h0.6M587.0 287.8h0.6M587.7 299.5h0.6M596.1 318.7h0.6M600.1 285.4h0.6M584.2 310.0h0.6M588.5 320.3h0.6M615.5 304.3h0.6M608.0 292.5h0.6M621.9 293.7h0.6M590.1 304.7h0.6M620.3 320.7h0.6M599.9 290.8h0.6M603.4 285.4h0.6M609.2 290.0h0.6M596.5 313.3h0.6M623.7 306.4h0.6M595.8 319.8h0.6M609.0 303.7h0.6M601.0 314.9h0.6M597.6 287.6h0.6M599.0 294.0h0.6M590.9 286.2h0.6M613.3 291.0h0.6M620.3 307.7h0.6M619.3 308.4h0.6M586.5 314.0h0.6M585.2 298.0h0.6M619.2 303.5h0.6M622.2 301.9h0.6M616.5 297.3h0.6M598.4 307.1h0.6M604.2 295.5h0.6M617.2 297.2h0.6M623.6 302.1h0.6M601.4 320.1h0.6M606.4 296.9h0.6M609.6 301.7h0.6M585.5 290.6h0.6M596.3 306.1h0.6M603.2 298.0h0.6M598.4 313.2h0.6M599.0 288.7h0.6M592.6 313.3h0.6M597.3 294.8h0.6M589.6 282.6h0.6M624.2 282.2h0.6M594.5 290.6h0.6M595.3 316.3h0.6M586.4 320.1h0.6M604.1 300.6h0.6M605.6 317.2h0.6M590.9 300.6h0.6M591.9 309.7h0.6M593.5 316.6h0.6M607.8 321.5h0.6M622.6 307.9h0.6M584.7 296.3h0.6M612.3 303.1h0.6M609.3 286.9h0.6M588.7 300.9h0.6M613.5 282.0h0.6M617.1 293.5h0.6M597.7 304.5h0.6M609.3 288.4h0.6M611.5 315.2h0.6M597.6 319.1h0.6M618.0 315.3h0.6M607.3 305.1h0.6M584.7 300.9h0.6M626.0 320.9h0.6M586.2 321.1h0.6M591.3 298.4h0.6M591.2 289.5h0.6M610.0 315.3h0.6M599.3 311.8h0.6M605.5 288.3h0.6M588.3 314.2h0.6M603.1 320.5h0.6M596.7 285.1h0.6M621.1 313.0h0.6M625.5 294.0h0.6M620.6 289.0h0.6M620.4 307.7h0.6M595.7 287.5h0.6M606.5 308.3h0.6M604.9 318.4h0.6M592.6 296.5h0.6M586.6 286.0h0.6M618.3 313.6h0.6M615.1 297.5h0.6M606.5 288.5h0.6M586.4 311.2h0.6M591.1 311.8h0.6M621.9 283.1h0.6M596.7 286.2h0.6M591.7 319.8h0.6M611.6 307.2h0.6M600.0 306.6h0.6M605.2 289.6h0.6M594.0 290.2h0.6M596.8 301.5h0.6M609.3 287.2h0.6M596.3 310.5h0.6M608.6 284.6h0.6M602.6 306.6h0.6M620.7 289.7h0.6M590.4 305.2h0.6M618.3 282.3h0.6M596.6 307.6h0.6M598.1 282.9h0.6M621.7 309.0h0.6M593.9 284.4h0.6M595.3 305.1h0.6M613.9 321.9h0.6M584.5 304.9h0.6M618.1 286.6h0.6M594.7 318.8h0.6M610.3 318.0h0.6M593.2 316.8h0.6M621.2 300.3h0.6M584.6 317.3h0.6M617.5 314.8h0.6M611.2 309.8h0.6M589.5 283.3h0.6M621.4 307.2h0.6M609.8 309.2h0.6M592.1 313.0h0.6M622.7 317.5h0.6M599.4 288.2h0.6M608.0 287.9h0.6M619.7 321.9h0.6M601.3 306.2h0.6M623.8 303.6h0.6M610.9 317.1h0.6M605.3 316.8h0.6M585.4 308.3h0.6M618.9 300.7h0.6M595.2 317.2h0.6M613.0 282.0h0.6M585.7 316.1h0.6M585.1 308.3h0.6M602.2 317.1h0.6M590.4 316.1h0.6M606.2 306.1h0.6M599.1 293.2h0.6M601.6 282.7h0.6M601.8 297.9h0.6M603.1 318.9h0.6M620.0 288.2h0.6M610.2 300.0h0.6M615.7 295.0h0.6M598.1 302.5h0.6M606.2 284.8h0.6M607.1 312.3h0.6M610.6 308.7h0.6M601.1 299.6h0.6M602.0 316.7h0.6M605.3 318.8h0.6M591.9 320.8h0.6M584.0 285.4h0.6M595.0 302.3h0.6M606.4 311.0h0.6M616.5 306.4h0.6M587.9 316.6h0.6M595.0 319.4h0.6M611.2 284.6h0.6M601.3 319.0h0.6M606.8 299.9h0.6M624.2 318.6h0.6M594.0 291.7h0.6M618.1 297.8h0.6M617.8 281.6h0.6M592.4 295.3h0.6M614.5 320.0h0.6M592.5 281.4h0.6M616.3 299.6h0.6M611.6 300.5h0.6M594.2 299.7h0.6M593.1 310.7h0.6" stroke="#6e6e6e" stroke-width="0.75" clip-path="url(#tc5)"/><path d="M599.1 297.1h0.9M612.1 281.2h0.9M599.5 285.1h0.9M606.0 303.2h0.9M611.5 286.6h0.9M622.5 298.8h0.9M597.0 288.4h0.9M610.1 281.1h0.9M621.3 299.0h0.9M585.8 299.1h0.9M597.1 288.8h0.9M599.6 320.6h0.9M586.7 290.2h0.9M623.3 281.5h0.9M618.0 298.9h0.9M618.9 312.9h0.9M593.6 310.0h0.9M599.1 309.0h0.9M584.5 281.9h0.9M589.4 291.5h0.9M608.5 305.9h0.9M625.9 315.8h0.9M590.8 300.6h0.9M587.8 318.4h0.9M622.4 298.5h0.9M613.9 283.9h0.9M622.1 296.6h0.9M587.7 319.2h0.9M617.7 314.5h0.9M617.7 283.5h0.9M621.0 318.5h0.9M598.3 320.2h0.9M615.0 292.5h0.9M594.9 290.7h0.9M598.2 289.8h0.9M623.7 298.7h0.9M616.6 315.5h0.9M608.9 297.1h0.9M625.4 298.7h0.9M612.1 292.5h0.9M622.6 319.1h0.9M598.7 307.0h0.9M596.7 297.9h0.9M618.6 310.2h0.9M586.3 312.2h0.9M605.8 289.8h0.9M601.8 311.1h0.9M593.5 282.4h0.9M622.5 311.1h0.9M604.5 300.8h0.9M594.6 320.3h0.9M589.8 308.9h0.9M610.6 291.0h0.9M616.9 308.0h0.9M585.1 320.1h0.9M625.2 315.1h0.9M598.9 309.0h0.9M605.1 295.7h0.9M614.6 288.5h0.9M603.1 289.8h0.9M617.5 312.1h0.9M620.0 314.1h0.9M618.6 297.0h0.9M613.5 282.5h0.9M620.3 311.4h0.9M610.0 313.2h0.9" stroke="#b8b8b8" stroke-width="0.75" clip-path="url(#tc5)"/><path d="M607.3 286.0L609.0 284.8L624.8 291.6L623.2 292.8z" fill="#6e6e6e"/><path d="M623.2 292.8L624.8 291.6L624.8 308.8L623.2 309.8z" fill="#3a3a3a"/><clipPath id="tc6"><path d="M603.3 283.5L607.3 283.5L607.3 306.0L603.3 306.0z"/></clipPath><path d="M603.3 283.5L607.3 283.5L607.3 306.0L603.3 306.0z" fill="#2e2e2e"/><path d="M624.5 303.1h0.6M607.2 300.5h0.6M591.9 282.5h0.6M600.7 301.7h0.6M616.6 294.9h0.6M624.7 285.6h0.6M611.6 282.2h0.6M593.2 286.2h0.6M625.1 308.8h0.6M607.3 316.4h0.6M624.0 296.5h0.6M620.2 292.9h0.6M613.6 315.0h0.6M599.9 307.9h0.6M614.6 284.6h0.6M616.0 289.0h0.6M596.2 290.9h0.6M596.0 319.7h0.6M602.2 316.1h0.6M589.7 291.2h0.6M584.5 300.4h0.6M623.9 302.3h0.6M614.2 287.7h0.6M586.5 290.2h0.6M624.0 309.6h0.6M623.1 312.8h0.6M595.0 288.8h0.6M609.7 286.8h0.6M604.3 303.1h0.6M594.6 320.8h0.6M586.5 318.9h0.6M585.7 320.7h0.6M601.2 287.2h0.6M610.2 310.0h0.6M600.6 300.5h0.6M612.0 292.2h0.6M597.1 309.6h0.6M603.1 315.2h0.6M602.7 310.8h0.6M606.9 290.8h0.6M599.3 303.9h0.6M603.8 309.9h0.6M612.3 309.5h0.6M594.2 316.5h0.6M622.4 295.7h0.6M621.9 300.5h0.6M595.4 283.6h0.6M612.8 309.2h0.6M611.7 298.4h0.6M588.0 281.1h0.6M610.0 307.8h0.6M624.0 314.0h0.6M607.0 321.1h0.6M584.6 319.4h0.6" stroke="#6e6e6e" stroke-width="0.75" clip-path="url(#tc6)"/><path d="M619.1 301.4h0.9M597.5 286.0h0.9M617.1 291.6h0.9M604.5 300.3h0.9M624.5 315.6h0.9M607.0 289.1h0.9M595.1 298.9h0.9M605.7 283.0h0.9M607.6 294.3h0.9M623.0 293.3h0.9M591.9 289.1h0.9M593.8 297.5h0.9M585.8 310.4h0.9M622.0 284.9h0.9M604.8 320.7h0.9M610.4 313.9h0.9M601.5 320.5h0.9M599.3 292.0h0.9" stroke="#b8b8b8" stroke-width="0.75" clip-path="url(#tc6)"/><path d="M603.3 283.5L605.0 282.3L609.0 282.3L607.3 283.5z" fill="#9a9a9a"/><path d="M605.0 304.7L607.3 303.0L623.2 309.8L614.0 316.5L605.0 320.6z" fill="#6c6c6c"/><clipPath id="tc7"><path d="M588.5 295.0L605.0 304.7L605.0 320.6L588.5 315.5z"/></clipPath><path d="M588.5 295.0L605.0 304.7L605.0 320.6L588.5 315.5z" fill="#1f1f1f"/><path d="M585.3 320.7h0.6M592.2 321.8h0.6M623.8 291.6h0.6M605.7 297.3h0.6M601.2 313.4h0.6M618.8 291.5h0.6M606.8 309.1h0.6M608.9 286.0h0.6M600.4 301.2h0.6M622.8 314.7h0.6M612.3 292.5h0.6M623.4 290.4h0.6M598.2 287.4h0.6M608.7 313.6h0.6M613.5 314.9h0.6M613.5 307.8h0.6M594.6 320.3h0.6M625.6 311.0h0.6M625.9 317.2h0.6M620.8 312.0h0.6M618.1 309.3h0.6M589.4 315.3h0.6M598.8 307.4h0.6M621.8 301.2h0.6M595.4 303.7h0.6M620.8 315.5h0.6M625.7 318.2h0.6M617.8 300.9h0.6M591.7 319.2h0.6M585.6 319.8h0.6M610.8 290.7h0.6M591.0 310.4h0.6M587.0 298.7h0.6M588.5 286.5h0.6M594.6 307.8h0.6M585.1 316.0h0.6M610.5 291.6h0.6M614.0 283.6h0.6M594.6 301.7h0.6M619.9 308.7h0.6M585.7 320.3h0.6M590.5 288.6h0.6M608.3 283.9h0.6M601.3 289.7h0.6M602.9 295.3h0.6M601.7 294.9h0.6M604.2 307.9h0.6M601.7 302.7h0.6M596.5 297.3h0.6M587.3 299.8h0.6M605.2 287.5h0.6M597.3 303.8h0.6M604.4 306.9h0.6M594.7 314.6h0.6M590.3 318.7h0.6M598.3 292.1h0.6M598.1 319.8h0.6M613.1 319.7h0.6M625.6 300.0h0.6M617.7 282.8h0.6M618.1 291.5h0.6M598.0 308.5h0.6M605.4 303.6h0.6M597.5 297.1h0.6M622.6 282.1h0.6M584.9 307.4h0.6M587.5 291.5h0.6M595.4 282.1h0.6M600.4 320.9h0.6M620.1 282.7h0.6M625.5 318.0h0.6M620.1 288.3h0.6M597.3 287.6h0.6M615.0 310.4h0.6M595.6 320.3h0.6M614.5 310.3h0.6M601.8 316.1h0.6M607.1 312.9h0.6M622.4 283.9h0.6M586.0 290.7h0.6M622.7 294.5h0.6M599.8 303.8h0.6M607.0 299.4h0.6M618.4 300.0h0.6M616.1 286.6h0.6M615.5 300.1h0.6M605.3 286.5h0.6M620.5 286.9h0.6M616.1 302.4h0.6M584.5 320.2h0.6M615.4 285.1h0.6M591.5 319.4h0.6M603.1 304.3h0.6M601.6 281.2h0.6M587.2 292.0h0.6M589.3 297.6h0.6M600.4 312.3h0.6M585.3 308.3h0.6M594.5 306.7h0.6M598.3 284.0h0.6M614.3 283.8h0.6M618.3 294.3h0.6M588.8 305.2h0.6M612.2 321.5h0.6M593.0 285.0h0.6M622.8 292.1h0.6M610.2 304.2h0.6M625.2 305.4h0.6M618.1 288.6h0.6M617.4 300.8h0.6M616.1 307.1h0.6M589.8 297.5h0.6M609.8 288.7h0.6M597.6 292.9h0.6M603.3 317.0h0.6M623.6 307.3h0.6M612.3 319.4h0.6M620.2 304.6h0.6M585.5 295.2h0.6M595.3 306.1h0.6M600.7 286.3h0.6M611.5 298.3h0.6M604.0 317.2h0.6M618.2 286.4h0.6M605.3 309.1h0.6M592.7 294.6h0.6M617.3 320.1h0.6M613.7 298.3h0.6M612.3 317.8h0.6M587.8 283.8h0.6M609.5 319.6h0.6M622.8 290.2h0.6M598.8 311.9h0.6M601.1 288.0h0.6M604.2 305.4h0.6M596.0 311.0h0.6M608.2 299.9h0.6M595.5 320.8h0.6M586.5 293.9h0.6M600.0 300.0h0.6M594.9 318.1h0.6M595.6 314.1h0.6M607.5 311.0h0.6M619.8 298.8h0.6M585.6 298.2h0.6M584.8 281.5h0.6M587.2 285.9h0.6M621.0 311.9h0.6M594.5 284.3h0.6M585.3 298.6h0.6M602.9 318.0h0.6M600.2 304.0h0.6M609.1 289.6h0.6M594.3 289.8h0.6M598.8 306.5h0.6M601.6 316.5h0.6M609.7 290.0h0.6M598.1 317.8h0.6M584.7 297.1h0.6M603.7 287.7h0.6M616.3 319.9h0.6M596.7 296.4h0.6M594.8 309.8h0.6M584.2 300.1h0.6M587.8 309.7h0.6M608.8 303.8h0.6M613.0 287.1h0.6M622.8 316.8h0.6M595.1 304.4h0.6M606.5 318.4h0.6M610.4 301.1h0.6M592.0 293.2h0.6M605.7 281.1h0.6M598.8 295.1h0.6M611.6 308.0h0.6M587.9 293.0h0.6M619.2 283.2h0.6M599.4 285.0h0.6M595.3 320.9h0.6M602.7 317.8h0.6M587.0 306.1h0.6M606.3 291.1h0.6M616.1 287.2h0.6M610.7 307.8h0.6M587.7 305.0h0.6M595.9 318.6h0.6M623.0 293.2h0.6M622.6 297.0h0.6M603.1 304.1h0.6M613.2 305.8h0.6M624.5 293.7h0.6M620.0 284.9h0.6M603.6 285.3h0.6M591.8 319.5h0.6M592.5 317.7h0.6M612.0 298.3h0.6M605.3 303.5h0.6M596.8 295.4h0.6M613.0 307.6h0.6M589.8 294.7h0.6M606.1 316.0h0.6M588.6 314.6h0.6M614.5 303.6h0.6M587.6 291.1h0.6M616.7 307.2h0.6M590.5 304.6h0.6M599.1 313.4h0.6M587.1 292.9h0.6M591.7 309.0h0.6M618.6 320.5h0.6M602.5 303.1h0.6M623.0 319.9h0.6M610.0 289.2h0.6M606.3 306.8h0.6M618.0 288.2h0.6M614.6 309.1h0.6" stroke="#6e6e6e" stroke-width="0.75" clip-path="url(#tc7)"/><path d="M619.2 286.1h0.9M605.3 300.2h0.9M621.6 290.6h0.9M611.7 285.5h0.9M617.2 310.4h0.9M588.3 302.5h0.9M614.8 298.5h0.9M600.9 319.6h0.9M585.0 300.7h0.9M588.9 294.4h0.9M593.3 320.2h0.9M592.9 321.4h0.9M616.8 293.8h0.9M603.7 285.0h0.9M609.3 310.8h0.9M624.9 307.1h0.9M588.1 317.6h0.9M610.4 304.0h0.9M614.6 290.7h0.9M620.9 296.1h0.9M589.8 290.9h0.9M618.4 298.5h0.9M603.0 281.2h0.9M594.4 315.4h0.9M613.3 301.9h0.9M594.5 305.8h0.9M598.8 305.0h0.9M589.5 283.7h0.9M620.3 313.3h0.9M588.2 315.8h0.9M612.9 281.6h0.9M618.7 286.9h0.9M593.9 289.3h0.9M624.4 299.9h0.9M620.0 304.1h0.9M610.8 293.4h0.9M615.3 311.0h0.9M604.2 297.2h0.9M591.4 296.0h0.9M589.7 316.7h0.9M598.9 292.6h0.9M593.2 284.5h0.9M612.7 294.9h0.9M603.8 297.3h0.9M613.0 321.5h0.9M624.2 307.9h0.9M604.5 287.5h0.9M625.2 303.8h0.9M624.9 316.5h0.9M611.7 297.1h0.9M600.1 293.6h0.9M589.1 312.6h0.9M596.8 290.9h0.9M585.5 311.7h0.9M616.3 317.9h0.9M624.4 313.3h0.9M584.7 319.4h0.9M620.4 284.6h0.9M594.7 308.4h0.9M611.0 281.1h0.9M625.3 283.3h0.9M597.8 306.8h0.9M602.8 290.5h0.9M590.8 293.5h0.9M584.7 316.2h0.9M613.4 307.4h0.9M592.6 292.7h0.9M609.3 318.1h0.9M612.9 290.0h0.9M591.7 283.3h0.9M615.8 298.0h0.9M618.6 319.3h0.9" stroke="#b8b8b8" stroke-width="0.75" clip-path="url(#tc7)"/><path d="M588.5 295L605 304.7" stroke="#6a6a6a" stroke-width="1"/><clipPath id="tc8"><path d="M585.0 294.5L588.5 295.0L588.5 315.5L585.0 316.6z"/></clipPath><path d="M585.0 294.5L588.5 295.0L588.5 315.5L585.0 316.6z" fill="#2a2a2a"/><path d="M589.6 298.5h0.6M619.8 299.5h0.6M593.8 308.4h0.6M596.9 304.9h0.6M593.7 312.0h0.6M586.1 292.9h0.6M623.0 284.6h0.6M600.4 288.6h0.6M600.0 304.2h0.6M624.1 319.9h0.6M597.0 312.4h0.6M603.3 285.2h0.6M595.3 294.0h0.6M600.7 321.9h0.6M617.6 284.9h0.6M608.4 293.0h0.6M594.9 316.8h0.6M586.8 311.1h0.6M621.3 281.1h0.6M596.3 313.4h0.6M586.0 295.9h0.6M593.9 317.3h0.6M618.0 312.3h0.6M595.6 285.6h0.6M622.0 290.2h0.6M593.1 284.3h0.6M618.6 299.3h0.6M591.4 281.9h0.6M603.2 282.7h0.6M584.1 300.5h0.6M607.7 303.2h0.6M622.6 282.8h0.6M586.8 284.8h0.6M609.8 308.0h0.6M593.5 304.5h0.6M586.3 286.3h0.6M595.6 286.6h0.6M595.3 293.2h0.6M601.2 316.2h0.6M615.8 314.1h0.6M590.6 313.5h0.6M600.0 318.3h0.6M610.0 308.9h0.6M608.6 281.9h0.6M596.5 288.2h0.6M595.1 312.1h0.6M600.7 286.5h0.6M617.5 292.7h0.6M588.5 296.5h0.6M598.9 303.2h0.6M611.5 313.1h0.6M608.7 300.5h0.6M596.7 308.5h0.6M614.5 317.8h0.6" stroke="#6e6e6e" stroke-width="0.75" clip-path="url(#tc8)"/><path d="M599.4 316.9h0.9M609.1 312.1h0.9M622.2 285.4h0.9M622.1 319.2h0.9M616.2 315.6h0.9M621.1 290.7h0.9M584.8 295.1h0.9M614.5 297.8h0.9M608.5 291.8h0.9M584.4 291.8h0.9M594.4 321.1h0.9M601.1 283.7h0.9M586.5 306.8h0.9M619.2 320.1h0.9M607.3 288.0h0.9M598.4 293.8h0.9M586.0 284.7h0.9M612.3 297.3h0.9" stroke="#b8b8b8" stroke-width="0.75" clip-path="url(#tc8)"/><path d="M585.1 293.2L589.0 291.6L592.0 293.6L588.5 295.2z" fill="#b4b4b4"/>
<path d="M633.6 296.19 L646.65 286.6 L661.73 294.82000000000005 L648.1 303.588z" fill="url(#rg)"/><path d="M637.95 293.72400000000005L652.45 301.122M642.3000000000001 290.16200000000003L656.8000000000001 298.108" stroke="#5a5a5a" stroke-width="1.2"/><clipPath id="tc9"><path d="M633.6 296.19 L648.1 303.588 L648.1 314.0 L633.6 307.15000000000003z"/></clipPath><path d="M633.6 296.19 L648.1 303.588 L648.1 314.0 L633.6 307.15000000000003z" fill="#1c1c1c"/><path d="M634.9 313.7h0.6M657.9 296.0h0.6M635.9 296.6h0.6M656.3 291.4h0.6M662.6 306.9h0.6M646.4 300.7h0.6M658.2 307.2h0.6M636.6 298.9h0.6M650.9 287.9h0.6M652.9 289.5h0.6M653.5 297.4h0.6M638.7 311.9h0.6M652.5 307.4h0.6M662.5 297.6h0.6M656.6 296.3h0.6M638.1 306.1h0.6M657.0 302.5h0.6M659.1 298.4h0.6M660.6 303.5h0.6M643.4 293.2h0.6M649.0 311.1h0.6M647.6 293.8h0.6M653.0 302.9h0.6M662.1 292.7h0.6M638.1 302.3h0.6M651.9 291.7h0.6M658.4 288.2h0.6M657.1 310.3h0.6M647.1 305.0h0.6M656.5 299.6h0.6M642.7 294.1h0.6M647.3 300.0h0.6M660.1 294.2h0.6M643.6 308.4h0.6M641.2 302.0h0.6M649.8 291.8h0.6M638.0 310.3h0.6M658.6 287.9h0.6M660.5 295.5h0.6M644.1 288.4h0.6M648.3 300.6h0.6M649.2 301.9h0.6M633.9 311.7h0.6M647.6 312.9h0.6M653.9 292.2h0.6M643.5 308.9h0.6M636.2 292.9h0.6M641.2 292.2h0.6M646.6 309.9h0.6M646.0 314.0h0.6M637.9 286.7h0.6M648.4 298.7h0.6M660.6 291.5h0.6M634.5 312.8h0.6M634.4 308.5h0.6M640.9 307.7h0.6M633.8 310.2h0.6M640.8 313.7h0.6M635.5 293.3h0.6M660.1 301.7h0.6M652.7 301.3h0.6M652.7 288.2h0.6M654.0 291.9h0.6M652.2 304.1h0.6M657.3 313.6h0.6M644.3 291.4h0.6M649.1 307.3h0.6M657.3 305.0h0.6M642.1 309.2h0.6M660.6 303.5h0.6M649.5 306.9h0.6M651.7 297.2h0.6M639.1 293.4h0.6M640.7 305.1h0.6M647.3 293.9h0.6M639.1 292.6h0.6M642.6 310.3h0.6M634.6 293.2h0.6M641.5 303.8h0.6M656.4 298.8h0.6M637.7 287.2h0.6M644.2 300.5h0.6M653.2 309.7h0.6M653.8 294.8h0.6M655.5 299.0h0.6M638.7 301.5h0.6M638.7 304.1h0.6M656.4 286.9h0.6M644.7 310.2h0.6M661.4 286.8h0.6M645.5 300.8h0.6M662.2 293.0h0.6M639.0 300.0h0.6M649.4 301.6h0.6M647.6 291.8h0.6M655.8 308.2h0.6M643.0 313.6h0.6M635.8 296.9h0.6M642.6 304.7h0.6M641.3 301.2h0.6M645.6 292.6h0.6M649.2 299.1h0.6M648.7 312.4h0.6M659.4 291.9h0.6M650.0 290.0h0.6M661.4 311.4h0.6M650.7 301.7h0.6M634.8 289.9h0.6" stroke="#6e6e6e" stroke-width="0.75" clip-path="url(#tc9)"/><path d="M639.4 303.6h0.9M657.8 291.4h0.9M662.0 296.3h0.9M643.1 294.9h0.9M653.7 295.5h0.9M648.6 307.3h0.9M656.2 312.3h0.9M635.9 287.6h0.9M639.4 299.6h0.9M662.1 304.3h0.9M653.1 289.4h0.9M635.0 313.9h0.9M659.2 312.2h0.9M659.8 308.6h0.9M652.5 298.6h0.9M652.8 305.0h0.9M652.9 307.3h0.9M658.1 297.8h0.9M635.6 312.3h0.9M644.3 297.3h0.9M643.1 293.5h0.9M649.6 306.3h0.9M639.5 312.9h0.9M656.0 311.8h0.9M654.0 291.9h0.9M647.4 312.9h0.9M658.4 307.9h0.9M652.9 288.9h0.9M639.2 286.7h0.9M653.2 301.8h0.9M643.3 292.2h0.9M655.0 307.3h0.9M653.9 287.0h0.9M639.4 288.4h0.9M653.9 312.3h0.9M646.0 288.1h0.9" stroke="#b8b8b8" stroke-width="0.75" clip-path="url(#tc9)"/><clipPath id="tc10"><path d="M648.1 303.588 L661.73 294.82000000000005 L661.73 305.78000000000003 L648.1 314.0z"/></clipPath><path d="M648.1 303.588 L661.73 294.82000000000005 L661.73 305.78000000000003 L648.1 314.0z" fill="#262626"/><path d="M637.3 304.4h0.6M634.0 298.7h0.6M648.9 292.6h0.6M655.9 290.1h0.6M637.9 296.3h0.6M649.2 297.2h0.6M657.4 288.9h0.6M660.2 296.1h0.6M637.3 299.7h0.6M657.3 291.8h0.6M661.0 298.7h0.6M659.3 298.1h0.6M655.0 312.7h0.6M648.3 287.9h0.6M647.7 301.4h0.6M644.3 297.6h0.6M634.2 307.7h0.6M649.2 293.2h0.6M644.3 294.7h0.6M656.0 293.0h0.6M656.6 300.3h0.6M652.2 290.7h0.6M655.2 294.7h0.6M637.9 301.3h0.6M642.3 305.8h0.6M642.2 298.0h0.6M646.9 292.0h0.6M656.1 294.8h0.6M641.7 300.3h0.6M635.8 308.3h0.6M638.0 297.3h0.6M660.4 299.1h0.6M658.2 298.1h0.6M649.6 312.2h0.6M652.4 292.3h0.6M658.2 298.2h0.6M647.6 289.1h0.6M640.8 289.6h0.6M635.0 305.8h0.6M655.5 309.2h0.6M661.4 293.0h0.6M641.6 309.6h0.6M641.4 308.3h0.6M646.1 288.0h0.6M656.1 310.3h0.6M642.0 291.7h0.6M642.9 313.9h0.6M647.6 297.2h0.6M639.4 294.5h0.6M639.9 310.5h0.6M650.0 307.0h0.6M638.3 307.2h0.6M655.5 303.2h0.6M647.2 289.8h0.6M647.5 308.7h0.6M637.1 301.2h0.6M650.1 288.8h0.6M657.2 287.8h0.6M659.6 289.4h0.6M657.9 294.1h0.6M643.7 301.1h0.6M645.8 305.4h0.6M643.7 296.5h0.6M657.7 294.2h0.6M650.0 294.2h0.6M645.8 306.7h0.6M641.7 297.9h0.6M639.2 308.9h0.6M654.2 310.6h0.6M654.4 312.3h0.6M644.7 297.2h0.6M645.1 288.8h0.6M642.2 295.0h0.6M658.0 294.5h0.6M641.8 287.0h0.6M636.0 288.7h0.6M635.4 293.0h0.6M652.2 288.1h0.6M636.5 307.5h0.6M643.1 294.7h0.6M643.7 307.7h0.6M639.0 296.2h0.6M653.2 304.5h0.6M647.4 314.0h0.6M649.2 286.7h0.6M660.1 296.5h0.6M640.8 308.2h0.6M648.9 287.5h0.6M661.8 296.0h0.6M662.2 290.9h0.6M646.4 311.9h0.6M643.0 292.3h0.6M658.2 309.5h0.6M637.8 311.8h0.6M661.5 298.9h0.6M652.2 305.4h0.6M652.5 298.7h0.6M634.4 296.2h0.6M642.0 303.8h0.6M657.6 306.8h0.6M653.6 292.0h0.6M644.2 303.6h0.6M652.1 310.2h0.6M654.3 306.0h0.6M635.8 297.2h0.6M642.7 302.7h0.6M662.5 294.3h0.6M653.3 293.0h0.6" stroke="#6e6e6e" stroke-width="0.75" clip-path="url(#tc10)"/><path d="M649.3 305.8h0.9M658.9 310.8h0.9M652.0 294.8h0.9M636.8 300.4h0.9M652.2 309.6h0.9M662.3 290.7h0.9M635.0 307.2h0.9M644.7 295.5h0.9M638.3 292.8h0.9M652.1 304.8h0.9M642.5 311.9h0.9M660.6 287.0h0.9M654.7 303.4h0.9M638.3 301.9h0.9M657.7 302.1h0.9M646.3 287.1h0.9M650.4 288.2h0.9M658.2 291.4h0.9M650.1 307.7h0.9M644.3 309.1h0.9M654.3 312.8h0.9M644.5 287.6h0.9M642.0 304.8h0.9M636.5 312.7h0.9M648.1 314.0h0.9M656.1 295.7h0.9M654.8 306.8h0.9M658.2 291.5h0.9M655.1 288.2h0.9M652.7 294.0h0.9M658.8 305.0h0.9M650.3 313.6h0.9M651.0 288.6h0.9M646.8 300.6h0.9M642.2 291.5h0.9M644.1 311.2h0.9" stroke="#b8b8b8" stroke-width="0.75" clip-path="url(#tc10)"/><path d="M657.38 307.97200000000004l2 1.5-2 1z" fill="#ddd"/>
<path d="M695 299.555 L707.69 290 L722.354 298.19 L709.1 306.926z" fill="url(#rg)"/><path d="M699.23 297.098L713.33 304.469M703.46 293.549L717.56 301.466" stroke="#5a5a5a" stroke-width="1.2"/><clipPath id="tc11"><path d="M695 299.555 L709.1 306.926 L709.1 317.3 L695 310.475z"/></clipPath><path d="M695 299.555 L709.1 306.926 L709.1 317.3 L695 310.475z" fill="#1c1c1c"/><path d="M704.3 309.9h0.6M710.2 300.1h0.6M706.9 296.8h0.6M703.7 315.2h0.6M695.1 298.4h0.6M711.2 310.9h0.6M706.1 293.3h0.6M696.0 305.6h0.6M715.5 300.7h0.6M700.1 312.1h0.6M705.4 300.0h0.6M698.3 315.5h0.6M701.8 300.4h0.6M722.3 310.5h0.6M709.6 306.3h0.6M713.0 314.4h0.6M715.2 308.7h0.6M711.5 311.8h0.6M701.6 303.8h0.6M708.1 302.9h0.6M707.3 296.0h0.6M712.1 293.0h0.6M710.7 307.5h0.6M707.9 292.3h0.6M703.6 294.1h0.6M695.7 297.8h0.6M717.8 313.5h0.6M698.9 308.2h0.6M713.5 305.2h0.6M720.6 295.0h0.6M712.6 306.1h0.6M711.1 296.0h0.6M703.1 293.1h0.6M697.7 298.6h0.6M698.1 301.7h0.6M700.5 307.7h0.6M711.0 299.7h0.6M721.0 315.2h0.6M704.9 294.5h0.6M704.1 314.3h0.6M703.8 310.5h0.6M716.2 294.7h0.6M708.4 299.8h0.6M706.6 305.3h0.6M716.0 308.9h0.6M698.1 302.3h0.6M722.6 301.1h0.6M698.6 291.0h0.6M715.1 291.0h0.6M704.1 306.9h0.6M702.2 309.9h0.6M711.8 316.0h0.6M714.8 312.0h0.6M716.5 316.5h0.6M701.1 304.1h0.6M700.9 303.5h0.6M720.9 304.2h0.6M700.5 291.7h0.6M713.0 311.2h0.6M720.8 304.8h0.6M719.5 309.9h0.6M713.9 295.1h0.6M715.7 303.4h0.6M695.2 305.8h0.6M718.3 315.5h0.6M706.5 297.3h0.6M699.5 302.8h0.6M716.3 302.9h0.6M717.0 292.2h0.6M704.4 297.5h0.6M698.4 302.1h0.6M707.9 309.1h0.6M721.4 302.0h0.6M697.8 297.0h0.6M717.7 290.7h0.6M719.4 296.2h0.6M705.0 290.3h0.6M705.0 296.9h0.6M714.9 290.9h0.6M715.4 312.2h0.6M699.5 294.4h0.6M703.9 312.8h0.6M711.5 290.8h0.6M720.6 297.5h0.6M717.2 305.4h0.6M695.3 304.4h0.6M699.0 315.6h0.6M711.0 309.5h0.6M716.9 315.7h0.6M701.9 296.0h0.6M697.2 301.4h0.6M712.9 291.4h0.6M697.0 293.3h0.6M715.0 308.6h0.6M710.9 306.7h0.6M711.0 303.8h0.6M702.9 295.4h0.6M713.8 303.2h0.6M704.7 311.7h0.6M720.7 308.0h0.6M716.1 309.0h0.6M705.1 303.7h0.6M713.5 317.3h0.6M712.3 306.6h0.6M719.8 292.4h0.6M701.0 305.4h0.6M703.1 291.2h0.6M702.5 294.5h0.6" stroke="#6e6e6e" stroke-width="0.75" clip-path="url(#tc11)"/><path d="M712.7 293.7h0.9M716.5 312.4h0.9M705.1 294.7h0.9M700.3 301.9h0.9M704.4 312.5h0.9M712.0 291.0h0.9M704.5 304.9h0.9M701.9 292.8h0.9M707.2 300.5h0.9M695.2 296.8h0.9M716.9 305.3h0.9M717.9 300.3h0.9M709.0 303.2h0.9M717.0 316.0h0.9M713.2 301.6h0.9M703.9 294.9h0.9M717.0 296.1h0.9M708.6 308.1h0.9M707.0 301.0h0.9M700.1 303.6h0.9M716.9 309.5h0.9M700.5 290.5h0.9M717.5 308.1h0.9M707.8 317.1h0.9M717.9 309.0h0.9M705.2 310.8h0.9M701.1 312.5h0.9M712.8 311.1h0.9M715.4 308.5h0.9M700.5 310.4h0.9M699.2 315.3h0.9M704.6 305.0h0.9M710.2 290.2h0.9M709.4 295.7h0.9M703.6 303.0h0.9M700.4 301.7h0.9" stroke="#b8b8b8" stroke-width="0.75" clip-path="url(#tc11)"/><clipPath id="tc12"><path d="M709.1 306.926 L722.354 298.19 L722.354 309.11 L709.1 317.3z"/></clipPath><path d="M709.1 306.926 L722.354 298.19 L722.354 309.11 L709.1 317.3z" fill="#262626"/><path d="M699.7 296.4h0.6M707.7 307.0h0.6M702.0 302.0h0.6M707.3 298.6h0.6M704.3 290.1h0.6M698.2 315.7h0.6M707.3 290.9h0.6M717.0 300.3h0.6M712.2 295.6h0.6M697.9 301.3h0.6M703.6 299.8h0.6M702.4 302.5h0.6M719.8 305.5h0.6M718.5 304.4h0.6M711.9 304.4h0.6M712.3 307.7h0.6M716.7 312.6h0.6M716.7 310.1h0.6M718.5 301.9h0.6M719.6 310.4h0.6M702.1 314.4h0.6M719.5 312.9h0.6M695.7 310.1h0.6M718.6 298.4h0.6M695.1 293.8h0.6M700.1 316.6h0.6M708.1 296.4h0.6M701.0 313.3h0.6M696.0 297.5h0.6M698.9 300.2h0.6M702.2 313.5h0.6M715.2 313.7h0.6M704.8 315.5h0.6M711.3 300.5h0.6M698.8 293.5h0.6M716.0 305.9h0.6M722.2 301.9h0.6M722.9 291.9h0.6M706.6 308.0h0.6M703.8 293.7h0.6M714.2 301.4h0.6M699.3 312.5h0.6M704.4 308.2h0.6M704.2 290.3h0.6M697.5 297.7h0.6M698.5 309.2h0.6M713.5 300.6h0.6M716.6 307.3h0.6M704.1 308.5h0.6M708.0 313.2h0.6M703.3 295.0h0.6M712.9 310.2h0.6M703.0 292.8h0.6M714.5 307.5h0.6M718.1 293.3h0.6M711.4 309.5h0.6M715.3 315.4h0.6M703.4 314.7h0.6M701.4 298.8h0.6M706.0 315.7h0.6M711.9 290.9h0.6M710.2 313.4h0.6M704.3 300.0h0.6M713.6 303.2h0.6M719.2 302.2h0.6M703.1 310.0h0.6M695.3 312.2h0.6M714.4 306.4h0.6M715.6 296.7h0.6M723.1 307.8h0.6M721.3 304.2h0.6M705.8 302.9h0.6M697.5 308.3h0.6M719.2 306.4h0.6M701.5 306.7h0.6M704.8 304.6h0.6M712.3 314.7h0.6M700.0 301.3h0.6M709.2 293.8h0.6M706.7 294.2h0.6M714.9 299.6h0.6M701.0 308.5h0.6M713.6 316.0h0.6M713.1 316.4h0.6M711.0 300.6h0.6M701.8 293.1h0.6M699.4 291.2h0.6M719.9 294.3h0.6M719.3 290.4h0.6M721.0 297.4h0.6M699.3 310.2h0.6M695.3 313.7h0.6M709.3 293.8h0.6M703.5 291.7h0.6M718.5 296.5h0.6M712.8 307.5h0.6M714.1 310.8h0.6M707.7 315.5h0.6M696.1 305.8h0.6M697.0 312.3h0.6M706.2 314.3h0.6M717.2 297.7h0.6M721.7 302.7h0.6M711.4 311.8h0.6M720.9 295.7h0.6M701.1 290.3h0.6M696.7 300.7h0.6M718.9 297.7h0.6" stroke="#6e6e6e" stroke-width="0.75" clip-path="url(#tc12)"/><path d="M697.6 306.3h0.9M711.8 292.1h0.9M696.3 298.1h0.9M703.1 302.1h0.9M702.7 312.7h0.9M711.9 316.0h0.9M703.1 306.7h0.9M702.1 309.1h0.9M709.3 301.5h0.9M718.4 317.2h0.9M708.5 310.9h0.9M707.0 290.6h0.9M722.0 300.8h0.9M702.1 308.7h0.9M714.8 295.9h0.9M721.1 308.9h0.9M696.2 300.8h0.9M712.0 293.8h0.9M702.0 303.9h0.9M695.8 304.8h0.9M706.0 296.1h0.9M696.7 313.8h0.9M713.3 316.0h0.9M714.9 290.2h0.9M705.6 315.5h0.9M700.7 295.7h0.9M700.3 307.6h0.9M705.8 307.0h0.9M721.3 313.2h0.9M699.7 305.9h0.9M714.9 304.4h0.9M721.9 306.3h0.9M706.1 305.3h0.9M714.4 305.5h0.9M697.3 299.0h0.9M709.6 291.2h0.9" stroke="#b8b8b8" stroke-width="0.75" clip-path="url(#tc12)"/><path d="M718.124 311.294l2 1.5-2 1z" fill="#ddd"/><path d="M702.05 308.564v5l-2 1.5" stroke="#eee" stroke-width="1.2" fill="none"/>
<path d="M546.6 362.3 L559.83 353.2 L575.118 361.0 L561.3000000000001 369.32z" fill="url(#rg)"/><path d="M551.01 359.96L565.71 366.98M555.4200000000001 356.58L570.12 364.12" stroke="#5a5a5a" stroke-width="1.2"/><clipPath id="tc13"><path d="M546.6 362.3 L561.3000000000001 369.32 L561.3000000000001 379.2 L546.6 372.7z"/></clipPath><path d="M546.6 362.3 L561.3000000000001 369.32 L561.3000000000001 379.2 L546.6 372.7z" fill="#1c1c1c"/><path d="M547.0 363.5h0.6M572.9 372.6h0.6M557.9 357.1h0.6M550.4 378.4h0.6M575.4 362.9h0.6M548.4 354.6h0.6M570.9 362.7h0.6M563.6 360.6h0.6M572.0 354.8h0.6M559.0 359.0h0.6M550.1 361.2h0.6M556.3 378.4h0.6M554.6 361.1h0.6M549.0 362.8h0.6M568.5 359.6h0.6M553.0 353.4h0.6M572.0 361.4h0.6M561.5 368.6h0.6M571.1 364.2h0.6M548.4 357.5h0.6M554.5 358.4h0.6M549.6 359.5h0.6M554.7 361.7h0.6M569.8 368.9h0.6M571.8 377.8h0.6M560.5 356.4h0.6M568.1 365.8h0.6M548.1 355.2h0.6M552.0 369.5h0.6M574.7 364.8h0.6M565.0 360.9h0.6M564.7 365.3h0.6M549.6 378.5h0.6M547.6 366.0h0.6M549.3 378.2h0.6M572.9 363.0h0.6M572.3 375.6h0.6M552.5 375.7h0.6M562.3 356.9h0.6M563.8 373.1h0.6M561.2 358.4h0.6M568.1 377.2h0.6M569.8 374.7h0.6M566.3 377.7h0.6M563.6 373.0h0.6M547.1 371.8h0.6M547.3 353.8h0.6M554.6 361.7h0.6M560.0 368.0h0.6M547.3 364.4h0.6M556.2 366.4h0.6M550.2 372.9h0.6M562.1 378.9h0.6M553.9 371.9h0.6M564.4 356.6h0.6M547.7 376.4h0.6M557.1 361.4h0.6M559.1 367.0h0.6M570.0 378.5h0.6M557.0 359.2h0.6M560.2 372.3h0.6M555.3 357.1h0.6M561.8 363.1h0.6M561.1 372.1h0.6M547.3 368.2h0.6M570.0 367.7h0.6M567.2 372.6h0.6M547.9 377.4h0.6M572.2 377.6h0.6M553.9 378.2h0.6M559.6 363.8h0.6M574.2 373.3h0.6M562.2 374.1h0.6M569.5 364.2h0.6M551.8 374.8h0.6M556.6 358.6h0.6M563.0 357.9h0.6M558.9 358.6h0.6M550.4 359.2h0.6M554.0 378.5h0.6M571.9 376.2h0.6M565.3 374.8h0.6M573.7 369.6h0.6M565.7 368.5h0.6M568.7 368.6h0.6M565.3 363.7h0.6M550.7 364.9h0.6M554.4 377.3h0.6M570.5 361.7h0.6M562.3 372.6h0.6M547.5 354.5h0.6M562.6 367.4h0.6M575.4 353.9h0.6M550.1 376.2h0.6M560.4 368.0h0.6M554.0 374.6h0.6M559.8 360.6h0.6M573.4 361.9h0.6M568.8 367.7h0.6M567.2 369.0h0.6M557.4 374.3h0.6M573.6 377.7h0.6M565.7 378.8h0.6M546.9 361.0h0.6M547.0 376.5h0.6M554.2 367.8h0.6M553.6 378.4h0.6M556.4 375.4h0.6" stroke="#6e6e6e" stroke-width="0.75" clip-path="url(#tc13)"/><path d="M552.4 359.5h0.9M552.0 374.1h0.9M558.3 375.9h0.9M571.9 355.0h0.9M562.4 368.7h0.9M551.1 363.7h0.9M555.1 373.8h0.9M564.3 374.7h0.9M558.4 361.3h0.9M569.5 361.3h0.9M547.6 361.1h0.9M551.7 378.5h0.9M553.6 358.4h0.9M551.0 373.2h0.9M565.8 371.2h0.9M560.2 362.5h0.9M569.6 359.8h0.9M561.2 354.3h0.9M567.9 363.5h0.9M574.5 375.0h0.9M563.3 370.6h0.9M574.0 363.2h0.9M560.5 354.2h0.9M553.0 370.4h0.9M562.8 374.4h0.9M556.4 357.3h0.9M551.8 375.3h0.9M567.4 370.4h0.9M566.2 369.2h0.9M557.8 359.6h0.9M548.8 361.4h0.9M569.3 369.4h0.9M558.5 374.8h0.9M556.0 365.1h0.9M565.7 363.0h0.9M570.1 369.1h0.9" stroke="#b8b8b8" stroke-width="0.75" clip-path="url(#tc13)"/><clipPath id="tc14"><path d="M561.3000000000001 369.32 L575.118 361.0 L575.118 371.4 L561.3000000000001 379.2z"/></clipPath><path d="M561.3000000000001 369.32 L575.118 361.0 L575.118 371.4 L561.3000000000001 379.2z" fill="#262626"/><path d="M547.9 371.5h0.6M555.8 365.9h0.6M559.0 367.8h0.6M560.1 360.9h0.6M571.9 370.9h0.6M568.0 372.7h0.6M569.5 369.3h0.6M547.8 368.8h0.6M575.3 373.0h0.6M569.6 358.3h0.6M555.8 355.8h0.6M574.4 377.7h0.6M564.1 355.8h0.6M567.0 358.7h0.6M567.1 356.0h0.6M566.6 378.7h0.6M570.0 364.7h0.6M569.9 353.5h0.6M567.5 369.7h0.6M568.0 365.8h0.6M560.7 354.7h0.6M573.5 378.4h0.6M558.1 368.1h0.6M569.1 368.1h0.6M574.1 377.7h0.6M570.2 366.4h0.6M572.7 360.5h0.6M552.8 355.8h0.6M575.9 373.0h0.6M565.1 368.7h0.6M554.8 364.2h0.6M556.6 375.9h0.6M572.4 367.0h0.6M553.5 365.3h0.6M560.3 366.3h0.6M548.5 368.3h0.6M558.5 376.5h0.6M558.1 362.2h0.6M570.5 365.1h0.6M560.8 371.3h0.6M550.3 360.1h0.6M566.8 368.6h0.6M572.5 364.4h0.6M569.0 375.2h0.6M564.0 369.3h0.6M563.7 355.0h0.6M563.1 373.4h0.6M572.8 357.1h0.6M567.9 353.9h0.6M553.6 366.5h0.6M557.4 361.2h0.6M565.2 354.8h0.6M571.1 373.7h0.6M562.6 367.1h0.6M566.8 366.1h0.6M574.1 373.1h0.6M575.4 371.7h0.6M548.0 358.0h0.6M558.3 360.8h0.6M571.3 371.1h0.6M555.3 367.6h0.6M554.2 379.1h0.6M572.4 379.2h0.6M568.7 353.7h0.6M549.0 368.2h0.6M558.2 364.1h0.6M551.8 375.1h0.6M552.6 355.7h0.6M560.4 364.7h0.6M567.4 363.9h0.6M550.5 377.9h0.6M562.2 362.3h0.6M568.9 362.4h0.6M559.6 353.5h0.6M557.7 370.9h0.6M568.2 356.1h0.6M570.2 366.5h0.6M562.6 367.5h0.6M555.0 376.6h0.6M550.9 365.8h0.6M562.4 357.7h0.6M552.2 375.6h0.6M572.1 373.6h0.6M568.7 361.9h0.6M553.9 358.3h0.6M574.6 353.9h0.6M547.4 373.1h0.6M569.3 353.9h0.6M547.6 362.7h0.6M546.9 362.9h0.6M561.0 365.8h0.6M546.8 370.1h0.6M552.1 356.3h0.6M557.8 369.8h0.6M551.1 374.3h0.6M547.3 370.9h0.6M568.9 378.0h0.6M562.3 366.8h0.6M547.5 378.0h0.6M575.2 378.3h0.6M553.2 365.1h0.6M555.0 360.4h0.6M575.1 378.9h0.6M548.5 357.9h0.6M557.7 375.9h0.6M567.0 371.1h0.6M568.7 354.5h0.6M553.8 370.8h0.6" stroke="#6e6e6e" stroke-width="0.75" clip-path="url(#tc14)"/><path d="M550.6 362.8h0.9M573.6 371.9h0.9M551.9 365.8h0.9M552.9 358.6h0.9M570.0 364.6h0.9M558.5 376.7h0.9M558.3 378.1h0.9M564.4 370.1h0.9M548.1 374.4h0.9M556.2 377.6h0.9M564.9 373.2h0.9M556.2 368.3h0.9M552.0 359.7h0.9M547.8 374.5h0.9M554.4 368.8h0.9M564.3 378.8h0.9M558.3 365.6h0.9M569.9 358.8h0.9M573.6 362.4h0.9M565.1 354.4h0.9M568.7 353.3h0.9M559.7 374.3h0.9M567.8 364.6h0.9M553.7 374.6h0.9M566.1 358.9h0.9M573.0 372.8h0.9M560.3 378.9h0.9M569.6 368.1h0.9M570.4 374.6h0.9M568.0 362.4h0.9M571.1 358.0h0.9M569.5 361.1h0.9M548.7 365.9h0.9M562.6 369.4h0.9M574.5 358.3h0.9M572.7 359.5h0.9" stroke="#b8b8b8" stroke-width="0.75" clip-path="url(#tc14)"/><path d="M570.708 373.48l2 1.5-2 1z" fill="#ddd"/>
<path d="M585.8 358.1 L600.92 348.20000000000005 L609.236 352.1 L614.15 349.1 L623.5999999999999 356.0 L606.5899999999999 366.20000000000005z" fill="url(#rg)"/><path d="M589.5799999999999 357.20000000000005L606.5899999999999 364.1M594.116 353.6L609.236 360.20000000000005" stroke="#7a7a7a" stroke-width="0.8" opacity="0.7"/><clipPath id="tc15"><path d="M585.8 358.1 L606.5899999999999 366.20000000000005 L606.5899999999999 377.6 L585.8 377.6z"/></clipPath><path d="M585.8 358.1 L606.5899999999999 366.20000000000005 L606.5899999999999 377.6 L585.8 377.6z" fill="#1c1c1c"/><path d="M589.0 352.8h0.6M611.6 352.4h0.6M621.7 372.9h0.6M613.9 361.6h0.6M617.1 354.9h0.6M608.6 358.7h0.6M604.3 376.5h0.6M594.0 370.2h0.6M614.8 350.2h0.6M623.3 361.1h0.6M606.3 356.7h0.6M606.9 376.4h0.6M599.0 369.6h0.6M615.4 373.7h0.6M611.9 360.6h0.6M598.6 359.1h0.6M599.9 374.2h0.6M617.1 354.0h0.6M595.8 348.9h0.6M621.0 349.4h0.6M600.6 353.1h0.6M593.2 375.8h0.6M602.3 366.6h0.6M617.2 363.3h0.6M616.8 370.7h0.6M608.7 364.5h0.6M619.3 367.9h0.6M598.7 374.6h0.6M616.8 376.1h0.6M611.0 360.9h0.6M599.2 366.3h0.6M592.6 369.5h0.6M612.5 374.0h0.6M594.1 365.0h0.6M606.6 365.6h0.6M601.3 347.9h0.6M620.8 374.7h0.6M591.8 375.0h0.6M608.3 347.8h0.6M609.8 356.6h0.6M599.9 350.8h0.6M617.3 367.1h0.6M594.6 364.7h0.6M601.8 377.1h0.6M593.7 368.1h0.6M616.0 374.3h0.6M595.9 373.6h0.6M592.5 352.1h0.6M609.1 374.6h0.6M601.4 352.9h0.6M589.5 360.0h0.6M618.6 366.5h0.6M604.1 363.4h0.6M593.7 354.6h0.6M595.8 369.6h0.6M610.5 349.2h0.6M607.2 376.4h0.6M588.6 352.4h0.6M622.4 363.2h0.6M619.9 372.6h0.6M603.5 377.3h0.6M595.7 356.8h0.6M594.3 370.2h0.6M589.7 360.9h0.6M615.1 369.1h0.6M597.7 352.3h0.6M616.9 373.0h0.6M610.0 365.5h0.6M589.7 357.8h0.6M596.4 362.6h0.6M596.4 365.9h0.6M603.4 376.7h0.6M595.6 348.7h0.6M591.1 353.3h0.6M611.7 364.2h0.6M607.5 369.8h0.6M612.3 353.5h0.6M592.9 373.9h0.6M613.3 359.5h0.6M612.3 368.6h0.6M589.0 361.0h0.6M615.0 372.5h0.6M611.6 357.6h0.6M618.6 364.2h0.6M623.4 376.3h0.6M619.7 353.5h0.6M621.6 355.6h0.6M593.7 363.4h0.6M611.3 355.8h0.6M622.6 349.8h0.6M617.1 369.3h0.6M615.2 361.2h0.6M619.8 357.2h0.6M604.1 372.3h0.6M618.6 349.3h0.6M608.7 374.5h0.6M598.0 352.0h0.6M608.4 372.5h0.6M593.9 370.9h0.6M591.6 377.1h0.6M589.7 351.7h0.6M617.2 359.5h0.6M588.5 355.6h0.6M619.0 373.2h0.6M598.1 348.6h0.6M611.9 351.3h0.6M612.8 363.0h0.6M619.7 349.8h0.6M619.6 349.7h0.6M608.8 358.3h0.6M606.7 354.8h0.6M621.6 363.1h0.6M610.6 361.9h0.6M615.0 373.6h0.6M589.0 376.5h0.6M596.2 366.2h0.6M593.0 357.8h0.6M619.2 373.9h0.6M620.2 366.5h0.6M603.1 361.5h0.6M599.2 367.9h0.6M601.3 351.7h0.6M610.6 358.4h0.6M609.1 369.3h0.6M622.5 350.9h0.6M606.8 374.2h0.6M587.2 363.8h0.6M595.6 365.7h0.6M614.9 364.8h0.6M595.8 360.2h0.6M594.1 372.9h0.6M600.5 354.5h0.6M620.5 364.5h0.6M606.5 376.7h0.6M609.3 371.7h0.6M598.4 363.0h0.6M596.6 370.4h0.6M595.9 356.5h0.6M592.5 374.7h0.6M600.2 373.8h0.6M605.6 353.1h0.6M612.2 373.1h0.6M602.8 376.2h0.6M611.1 362.2h0.6M617.0 368.3h0.6M621.0 353.8h0.6M621.3 372.3h0.6M600.5 361.1h0.6M605.6 350.6h0.6M603.5 376.6h0.6M614.1 367.7h0.6M591.5 372.7h0.6M595.1 375.7h0.6M603.0 353.7h0.6M606.8 348.9h0.6M617.9 367.0h0.6M606.3 369.0h0.6M615.5 347.7h0.6M606.2 372.1h0.6M617.9 363.4h0.6M622.8 359.3h0.6M613.5 371.6h0.6" stroke="#6e6e6e" stroke-width="0.75" clip-path="url(#tc15)"/><path d="M602.9 359.4h0.9M611.6 375.7h0.9M613.4 350.4h0.9M587.0 358.0h0.9M611.5 356.8h0.9M617.6 351.0h0.9M603.2 363.4h0.9M609.0 357.0h0.9M593.2 365.8h0.9M592.3 348.4h0.9M614.6 350.4h0.9M596.7 369.0h0.9M599.5 350.3h0.9M591.5 368.8h0.9M597.3 371.8h0.9M602.7 367.8h0.9M622.0 363.8h0.9M598.9 351.2h0.9M609.1 362.1h0.9M619.3 360.6h0.9M603.1 362.7h0.9M620.2 361.5h0.9M603.6 366.1h0.9M600.0 369.2h0.9M590.4 355.8h0.9M621.0 376.2h0.9M619.7 375.0h0.9M597.7 363.3h0.9M605.2 348.5h0.9M616.9 361.3h0.9M617.5 352.4h0.9M622.9 361.9h0.9M598.7 362.2h0.9M595.6 369.2h0.9M588.4 358.8h0.9M597.9 348.5h0.9M586.7 372.8h0.9M613.7 357.8h0.9M592.2 350.3h0.9M614.6 353.0h0.9M599.1 366.0h0.9M602.5 377.3h0.9M591.4 376.7h0.9M621.3 352.0h0.9M599.6 353.5h0.9M613.8 359.7h0.9M617.6 360.2h0.9M607.7 365.3h0.9M613.0 363.2h0.9M598.4 361.6h0.9M594.1 360.5h0.9M617.2 350.8h0.9M590.7 376.9h0.9M623.5 375.0h0.9" stroke="#b8b8b8" stroke-width="0.75" clip-path="url(#tc15)"/><clipPath id="tc16"><path d="M606.5899999999999 366.20000000000005 L623.5999999999999 356.0 L623.5999999999999 377.6 L606.5899999999999 377.6z"/></clipPath><path d="M606.5899999999999 366.20000000000005 L623.5999999999999 356.0 L623.5999999999999 377.6 L606.5899999999999 377.6z" fill="#262626"/><path d="M601.7 364.5h0.6M606.9 365.3h0.6M616.1 376.6h0.6M611.2 371.9h0.6M607.4 361.7h0.6M617.5 377.5h0.6M607.4 366.5h0.6M588.1 373.5h0.6M610.1 366.6h0.6M592.0 365.0h0.6M608.7 352.3h0.6M601.4 369.9h0.6M615.3 369.0h0.6M611.3 376.1h0.6M615.7 349.6h0.6M599.5 348.7h0.6M620.1 368.3h0.6M594.1 353.0h0.6M594.4 365.8h0.6M604.0 347.8h0.6M610.5 356.2h0.6M596.7 377.6h0.6M620.0 373.9h0.6M619.4 364.7h0.6M587.9 358.9h0.6M608.8 375.5h0.6M598.1 349.8h0.6M621.9 369.1h0.6M617.5 362.3h0.6M597.0 357.2h0.6M591.1 358.6h0.6M607.1 376.5h0.6M622.2 362.2h0.6M593.9 376.5h0.6M586.1 349.8h0.6M611.4 365.6h0.6M622.9 368.1h0.6M616.5 374.1h0.6M621.8 374.2h0.6M605.0 366.8h0.6M614.9 348.3h0.6M605.6 359.9h0.6M615.6 353.4h0.6M617.4 354.3h0.6M603.2 364.1h0.6M597.6 369.2h0.6M616.1 377.4h0.6M601.2 375.3h0.6M608.4 371.6h0.6M592.6 361.2h0.6M614.6 366.7h0.6M592.8 365.3h0.6M614.9 373.1h0.6M587.2 350.3h0.6M597.4 347.7h0.6M618.6 371.9h0.6M615.5 364.4h0.6M597.8 361.5h0.6M588.4 372.2h0.6M593.5 370.1h0.6M598.5 352.3h0.6M600.3 357.0h0.6M621.4 348.7h0.6M599.1 360.3h0.6M605.1 347.9h0.6M616.1 358.6h0.6M610.0 354.7h0.6M595.6 356.2h0.6M597.9 374.1h0.6M593.0 347.8h0.6M622.1 353.9h0.6M621.3 367.9h0.6M618.9 360.7h0.6M603.4 371.3h0.6M602.4 361.4h0.6M589.5 366.7h0.6M595.9 373.8h0.6M594.8 373.2h0.6M610.9 369.7h0.6M619.3 372.1h0.6M593.8 362.2h0.6M617.5 360.3h0.6M589.9 356.6h0.6M616.5 348.6h0.6M621.7 348.6h0.6M608.5 354.6h0.6M588.1 371.9h0.6M617.6 352.6h0.6M599.3 353.6h0.6M613.5 374.9h0.6M618.4 353.1h0.6M596.3 365.3h0.6M621.5 355.1h0.6M614.1 356.7h0.6M597.0 364.7h0.6M589.0 361.4h0.6M590.8 352.6h0.6M593.6 369.9h0.6M610.6 373.9h0.6M606.4 372.9h0.6M598.6 370.7h0.6M610.5 369.8h0.6M603.8 365.9h0.6M610.9 361.1h0.6M607.9 363.4h0.6M620.9 367.2h0.6M619.3 367.5h0.6M616.9 372.5h0.6M586.6 367.1h0.6M595.5 352.4h0.6M612.3 363.1h0.6M611.6 366.4h0.6M623.0 375.1h0.6M598.4 348.5h0.6M601.0 356.6h0.6M618.3 353.2h0.6M601.0 373.5h0.6M600.7 352.9h0.6M593.9 356.9h0.6M606.1 376.7h0.6M618.6 376.9h0.6M599.7 363.7h0.6M619.8 351.9h0.6M602.9 373.4h0.6M608.7 377.4h0.6M591.1 355.2h0.6M605.9 374.5h0.6M620.1 364.5h0.6M604.2 371.7h0.6M619.7 357.8h0.6M599.2 353.1h0.6M602.9 362.9h0.6M621.0 361.2h0.6M616.6 351.6h0.6M595.8 372.9h0.6M617.1 361.3h0.6M599.1 364.6h0.6M612.1 360.7h0.6M589.3 359.6h0.6M601.2 367.3h0.6M595.2 373.1h0.6M614.3 352.7h0.6M596.7 366.7h0.6M595.1 359.9h0.6" stroke="#6e6e6e" stroke-width="0.75" clip-path="url(#tc16)"/><path d="M599.4 372.8h0.9M587.1 355.8h0.9M617.1 368.7h0.9M599.3 365.9h0.9M612.1 353.3h0.9M616.8 354.3h0.9M606.0 362.9h0.9M596.7 361.4h0.9M619.4 351.8h0.9M599.0 376.6h0.9M612.6 363.6h0.9M597.9 356.9h0.9M592.9 355.3h0.9M604.6 347.9h0.9M613.3 350.5h0.9M605.9 368.3h0.9M590.4 364.4h0.9M588.4 376.3h0.9M591.3 358.8h0.9M604.1 349.1h0.9M593.6 374.7h0.9M587.7 363.0h0.9M599.2 368.4h0.9M605.7 361.9h0.9M592.1 350.1h0.9M604.1 353.2h0.9M597.1 365.5h0.9M590.2 350.9h0.9M601.0 359.1h0.9M590.0 368.9h0.9M608.7 358.7h0.9M590.4 365.2h0.9M602.6 367.4h0.9M601.9 371.6h0.9M585.8 356.2h0.9M594.4 350.5h0.9M596.5 354.0h0.9M614.5 361.5h0.9M612.6 363.4h0.9M614.7 355.1h0.9M600.2 358.9h0.9M603.7 373.1h0.9M596.8 351.3h0.9M612.2 373.2h0.9M592.2 372.2h0.9M603.0 373.0h0.9M595.4 352.5h0.9M612.7 356.9h0.9" stroke="#b8b8b8" stroke-width="0.75" clip-path="url(#tc16)"/>
<path d="M644.6750000000001 353.76 L655.0 344.8 L665.325 351.84000000000003 L655.0 360.8z" fill="url(#rg)"/><clipPath id="tc17"><path d="M644.6750000000001 353.76 L655.0 360.8 L655.0 364.64 L644.6750000000001 359.2z"/></clipPath><path d="M644.6750000000001 353.76 L655.0 360.8 L655.0 364.64 L644.6750000000001 359.2z" fill="#222"/><path d="M665.6 361.2h0.6M672.6 362.1h0.6M670.8 348.9h0.6M657.8 349.3h0.6M643.6 347.5h0.6M651.4 351.0h0.6M660.0 361.7h0.6M648.9 365.6h0.6M653.8 368.6h0.6M654.6 349.7h0.6M648.6 375.4h0.6M661.5 364.0h0.6M660.8 361.1h0.6M647.9 368.3h0.6M663.4 372.8h0.6M657.1 345.3h0.6M654.1 361.8h0.6M660.6 354.4h0.6M654.1 358.6h0.6M669.8 348.7h0.6M647.1 374.7h0.6M659.8 345.3h0.6M649.5 357.3h0.6M658.4 371.4h0.6M662.6 350.1h0.6M663.2 367.2h0.6M661.7 358.9h0.6M660.2 376.5h0.6M656.5 359.5h0.6M670.2 363.2h0.6M651.9 375.3h0.6M658.2 353.6h0.6M649.9 348.4h0.6M659.5 352.6h0.6M669.4 351.2h0.6M665.8 364.9h0.6" stroke="#6e6e6e" stroke-width="0.75" clip-path="url(#tc17)"/><path d="M659.2 365.5h0.9M654.0 360.1h0.9M670.3 355.0h0.9M654.7 369.8h0.9M672.0 360.7h0.9M651.7 361.4h0.9M657.3 350.3h0.9M664.8 354.9h0.9M646.3 354.9h0.9M648.3 374.4h0.9M662.3 366.3h0.9M666.8 346.8h0.9" stroke="#b8b8b8" stroke-width="0.75" clip-path="url(#tc17)"/><path d="M644.6750000000001 364.0 L660.9000000000001 352.8 L672.7 358.24 L657.95 368.8z" fill="url(#rg)"/><clipPath id="tc18"><path d="M643.2 353.76 L644.6750000000001 353.76 L644.6750000000001 364.0 L657.95 368.8 L657.95 376.8 L643.2 372.0z"/></clipPath><path d="M643.2 353.76 L644.6750000000001 353.76 L644.6750000000001 364.0 L657.95 368.8 L657.95 376.8 L643.2 372.0z" fill="#1c1c1c"/><path d="M670.1 360.6h0.6M659.9 356.1h0.6M646.6 356.2h0.6M648.3 348.7h0.6M648.0 345.9h0.6M659.5 348.6h0.6M661.5 356.6h0.6M669.9 365.8h0.6M665.9 365.6h0.6M665.4 374.9h0.6M672.6 350.0h0.6M651.9 354.2h0.6M649.5 369.4h0.6M670.4 346.8h0.6M648.2 374.2h0.6M646.3 347.4h0.6M669.6 353.8h0.6M643.6 363.0h0.6M648.8 357.2h0.6M652.8 371.0h0.6M671.0 375.6h0.6M657.8 374.5h0.6M663.5 362.4h0.6M662.3 365.8h0.6M670.2 352.9h0.6M670.2 371.9h0.6M661.2 361.1h0.6M652.2 375.6h0.6M655.6 346.8h0.6M672.4 364.6h0.6M656.4 345.3h0.6M655.4 375.3h0.6M671.1 349.1h0.6M652.2 376.4h0.6M663.9 362.1h0.6M647.2 365.0h0.6M644.4 346.0h0.6M664.3 347.3h0.6M672.5 351.7h0.6M644.8 356.0h0.6M651.2 375.0h0.6M655.7 355.6h0.6M658.7 353.9h0.6M643.6 346.0h0.6M663.0 361.6h0.6M643.4 376.5h0.6M659.3 360.1h0.6M652.9 375.4h0.6M653.8 344.9h0.6M668.9 363.6h0.6M670.2 354.4h0.6M672.3 346.0h0.6M651.6 349.6h0.6M656.1 370.7h0.6M657.5 360.4h0.6M661.9 350.8h0.6M672.3 349.4h0.6M656.0 368.0h0.6M666.2 349.4h0.6M657.0 360.3h0.6M655.6 350.7h0.6M663.3 360.0h0.6M654.9 367.0h0.6M655.9 360.2h0.6M655.2 369.5h0.6M650.3 344.8h0.6M653.3 355.9h0.6M644.3 363.9h0.6M658.7 351.4h0.6M659.9 350.5h0.6M662.4 351.9h0.6M663.4 352.7h0.6M668.6 373.7h0.6M645.5 374.8h0.6M647.6 375.1h0.6M670.1 351.6h0.6M662.6 349.6h0.6M672.1 353.6h0.6M662.9 357.0h0.6M650.3 349.0h0.6M649.5 373.8h0.6M650.9 354.9h0.6M665.3 376.2h0.6M656.5 354.3h0.6M665.7 356.7h0.6M653.4 365.2h0.6M654.0 375.9h0.6M653.6 361.2h0.6M650.2 372.5h0.6M647.4 371.4h0.6M665.3 371.4h0.6M666.4 347.0h0.6M668.4 376.6h0.6M646.2 359.9h0.6M660.6 368.4h0.6M668.4 368.4h0.6M660.0 372.3h0.6M660.9 358.6h0.6M657.9 365.1h0.6M654.4 355.8h0.6M661.1 345.4h0.6M644.6 363.8h0.6M643.9 363.7h0.6M666.5 362.7h0.6M670.1 359.4h0.6M649.8 359.8h0.6M645.5 365.4h0.6M650.8 351.6h0.6" stroke="#6e6e6e" stroke-width="0.75" clip-path="url(#tc18)"/><path d="M661.0 360.9h0.9M650.7 349.4h0.9M672.6 367.6h0.9M664.5 376.4h0.9M655.3 373.8h0.9M644.4 371.5h0.9M663.4 361.8h0.9M645.2 370.2h0.9M652.6 365.5h0.9M654.3 350.5h0.9M652.3 355.6h0.9M665.2 366.0h0.9M668.0 375.7h0.9M668.4 362.5h0.9M666.7 370.3h0.9M651.1 348.4h0.9M653.0 369.6h0.9M672.0 369.1h0.9M672.3 357.1h0.9M662.2 372.7h0.9M667.1 375.7h0.9M651.7 374.9h0.9M672.0 352.7h0.9M653.5 359.7h0.9M664.8 374.0h0.9M672.6 358.3h0.9M671.0 373.3h0.9M654.3 363.9h0.9M649.0 357.5h0.9M660.1 359.9h0.9M648.4 351.6h0.9M657.0 345.9h0.9M671.9 348.9h0.9M655.3 354.1h0.9M652.8 365.9h0.9M648.3 355.6h0.9" stroke="#b8b8b8" stroke-width="0.75" clip-path="url(#tc18)"/><clipPath id="tc19"><path d="M657.95 368.8 L672.7 358.24 L672.7 372.0 L657.95 376.8z"/></clipPath><path d="M657.95 368.8 L672.7 358.24 L672.7 372.0 L657.95 376.8z" fill="#262626"/><path d="M659.3 348.8h0.6M651.5 358.6h0.6M643.7 360.7h0.6M671.3 358.5h0.6M667.8 375.5h0.6M643.8 345.2h0.6M656.1 375.5h0.6M656.6 370.3h0.6M663.0 346.2h0.6M656.9 365.4h0.6M647.9 349.0h0.6M662.9 354.4h0.6M663.6 353.7h0.6M645.4 356.8h0.6M666.4 356.0h0.6M659.3 369.6h0.6M651.4 372.5h0.6M644.4 359.2h0.6M650.3 350.3h0.6M669.7 350.1h0.6M666.2 359.9h0.6M671.1 373.1h0.6M643.7 375.2h0.6M659.7 368.1h0.6M646.3 367.8h0.6M664.5 375.7h0.6M660.8 346.1h0.6M662.5 366.1h0.6M647.0 370.7h0.6M644.3 363.6h0.6M661.6 375.1h0.6M648.2 351.8h0.6M663.2 360.3h0.6M670.3 349.9h0.6M662.7 351.6h0.6M670.7 356.5h0.6M655.5 361.1h0.6M670.6 371.7h0.6M661.6 355.0h0.6M661.7 373.0h0.6M656.9 349.6h0.6M666.5 376.4h0.6M652.0 346.5h0.6M652.8 351.0h0.6M662.3 360.9h0.6M668.2 351.1h0.6M662.1 363.5h0.6M647.0 360.7h0.6M649.4 345.5h0.6M654.8 356.9h0.6M643.2 370.9h0.6M668.1 349.6h0.6M650.4 347.5h0.6M669.1 368.4h0.6M666.4 359.1h0.6M666.7 364.4h0.6M651.1 354.4h0.6M659.4 358.8h0.6M662.1 359.0h0.6M643.7 365.7h0.6M661.3 370.1h0.6M666.1 369.5h0.6M655.6 345.7h0.6M659.7 375.1h0.6M666.4 374.8h0.6M659.3 361.4h0.6M651.9 371.8h0.6M657.7 375.3h0.6M666.3 368.8h0.6M656.7 354.1h0.6M643.7 368.6h0.6M665.1 352.9h0.6M669.4 351.8h0.6M672.2 362.7h0.6M654.5 351.2h0.6M670.6 363.4h0.6M670.0 349.1h0.6M669.5 356.6h0.6M650.0 376.0h0.6M651.9 366.1h0.6M660.4 357.2h0.6M659.8 356.3h0.6M658.3 374.7h0.6M662.6 364.1h0.6M647.4 371.6h0.6M651.7 374.3h0.6M647.7 373.3h0.6M671.2 369.4h0.6M646.3 358.9h0.6M659.4 369.6h0.6M664.6 345.3h0.6M668.7 373.3h0.6M662.1 360.8h0.6M655.2 370.7h0.6M657.7 348.2h0.6M669.7 359.5h0.6M668.7 366.8h0.6M671.7 369.8h0.6M666.8 350.8h0.6M664.4 349.3h0.6M668.2 356.4h0.6M645.5 370.0h0.6M672.1 357.8h0.6M647.6 359.7h0.6M657.6 347.0h0.6M653.2 352.9h0.6M671.7 371.1h0.6M648.1 375.1h0.6" stroke="#6e6e6e" stroke-width="0.75" clip-path="url(#tc19)"/><path d="M653.2 363.9h0.9M664.3 356.8h0.9M647.8 366.5h0.9M657.6 363.6h0.9M658.7 350.4h0.9M645.8 362.7h0.9M650.3 372.6h0.9M653.4 369.2h0.9M659.9 374.6h0.9M650.7 374.9h0.9M650.2 371.8h0.9M651.3 361.8h0.9M661.5 361.8h0.9M651.2 358.5h0.9M669.2 349.9h0.9M653.0 349.3h0.9M666.8 355.8h0.9M653.4 375.0h0.9M658.4 363.3h0.9M666.9 367.8h0.9M672.1 345.7h0.9M664.4 362.4h0.9M659.8 357.6h0.9M643.8 345.9h0.9M663.5 351.6h0.9M652.7 345.0h0.9M647.7 365.4h0.9M659.9 371.8h0.9M644.8 363.0h0.9M646.2 345.8h0.9M665.2 355.9h0.9M654.4 372.6h0.9M649.2 376.7h0.9M670.3 352.9h0.9M657.3 369.9h0.9M668.3 359.0h0.9" stroke="#b8b8b8" stroke-width="0.75" clip-path="url(#tc19)"/>
<path d="M682.5 359.1 L691.0 354.6 L697.0 357.8 L688.5 362.8z" fill="#b82020"/><path d="M685.0 359.1L692.5 355.6M687.5 360.6L695.0 357.1" stroke="#6a1010" stroke-width="0.6"/><path d="M692.5 360.6 L698.5 357.1 L721.5 371.6 L716.5 374.6z" fill="#2a2222"/><path d="M698.5 357.1L721.5 371.6M692.5 360.6L716.5 374.6" stroke="#555" stroke-width="0.8"/><path d="M695.5 359.1L719.0 373.1" stroke="#b82020" stroke-width="2.2" stroke-dasharray="2.6 1.2"/>
<text x="535.60" y="271.00" font-family="Liberation Sans" font-size="8.9" fill="#e8e8e8" textLength="41.40" lengthAdjust="spacingAndGlyphs" >archdoor...</text>
<text x="585.20" y="271.00" font-family="Liberation Sans" font-size="8.9" fill="#e8e8e8" textLength="41.80" lengthAdjust="spacingAndGlyphs" >deadend...</text>
<text x="633.60" y="271.00" font-family="Liberation Sans" font-size="8.9" fill="#e8e8e8" textLength="43.20" lengthAdjust="spacingAndGlyphs" >hall_dirt1...</text>
<text x="683.00" y="271.00" font-family="Liberation Sans" font-size="8.9" fill="#e8e8e8" textLength="42.20" lengthAdjust="spacingAndGlyphs" >hall_lrg.pfb</text>
<text x="535.60" y="333.90" font-family="Liberation Sans" font-size="8.9" fill="#e8e8e8" textLength="42.80" lengthAdjust="spacingAndGlyphs" >hall_med...</text>
<text x="584.70" y="333.90" font-family="Liberation Sans" font-size="8.9" fill="#e8e8e8" textLength="42.60" lengthAdjust="spacingAndGlyphs" >hall_sma...</text>
<text x="633.60" y="333.90" font-family="Liberation Sans" font-size="8.9" fill="#e8e8e8" textLength="41.20" lengthAdjust="spacingAndGlyphs" >hall_thre...</text>
<text x="683.00" y="333.90" font-family="Liberation Sans" font-size="8.9" fill="#e8e8e8" textLength="41.00" lengthAdjust="spacingAndGlyphs" >hall_thre...</text>
</g>
<rect x="528.5" y="383.2" width="127" height="16.2" fill="#ffffff" stroke="#7a7a7a" stroke-width="0.9" rx="1.5" />
<path d="M646.8 390.6L649.2 393.2L651.6 390.6" fill="none" stroke="#555" stroke-width="0.9"/>
<rect x="659" y="384.5" width="11.8" height="11.5" fill="#f2f2f2" stroke="#e2e2e2" stroke-width="0.8" rx="1" />
<circle cx="666.6" cy="388.2" r="2.4" fill="none" stroke="#8a8a8a" stroke-width="1.2"/><path d="M664.9 389.9L661.4 393.4" stroke="#8a8a8a" stroke-width="1.6" stroke-linecap="round"/>
<rect x="673.3" y="384.5" width="11.8" height="11.5" fill="#f2f2f2" stroke="#e2e2e2" stroke-width="0.8" rx="1" />
<path d="M675.2 386.8L683.6 395M683.6 386.8L675.2 395" stroke="#d87868" stroke-width="1.3"/>
<rect x="692.9" y="388.3" width="8.3" height="8.3" fill="#ffffff" stroke="#5a5a5a" stroke-width="0.9" rx="1.5" />
<text x="703.60" y="395.20" font-family="Liberation Sans" font-size="8.9" fill="#1a1a1a" textLength="33.90" lengthAdjust="spacingAndGlyphs" >Recursive</text>
<path d="M525.5 404.5H748.5V49" fill="none" stroke="#e0e0e0" stroke-width="1"/>
<rect x="0" y="406" width="750" height="16" fill="#f0f0f0" />
<rect x="0" y="406" width="750" height="1" fill="#dadada" />
<rect x="314" y="407" width="1" height="15" fill="#d9d9d9" />
<rect x="437" y="407" width="1" height="15" fill="#d9d9d9" />
<rect x="560" y="407" width="1" height="15" fill="#d9d9d9" />
<rect x="683" y="407" width="1" height="15" fill="#d9d9d9" />
<text x="2.00" y="418.20" font-family="Liberation Sans" font-size="9.4" fill="#1a1a1a" textLength="59.00" lengthAdjust="spacingAndGlyphs" >Press F1 for Help</text>
<rect x="594.8" y="270.8" width="54" height="13.6" rx="1.5" fill="#000" opacity="0.12"/>
<rect x="593.7" y="269.3" width="54" height="13.4" rx="1.5" fill="#ffffff" stroke="#d8d8d8" stroke-width="0.8"/>
<text x="597.80" y="278.30" font-family="Liberation Sans" font-size="8.9" fill="#474747" textLength="45.30" lengthAdjust="spacingAndGlyphs" >deadend.pfb</text></svg>
</body></html>
